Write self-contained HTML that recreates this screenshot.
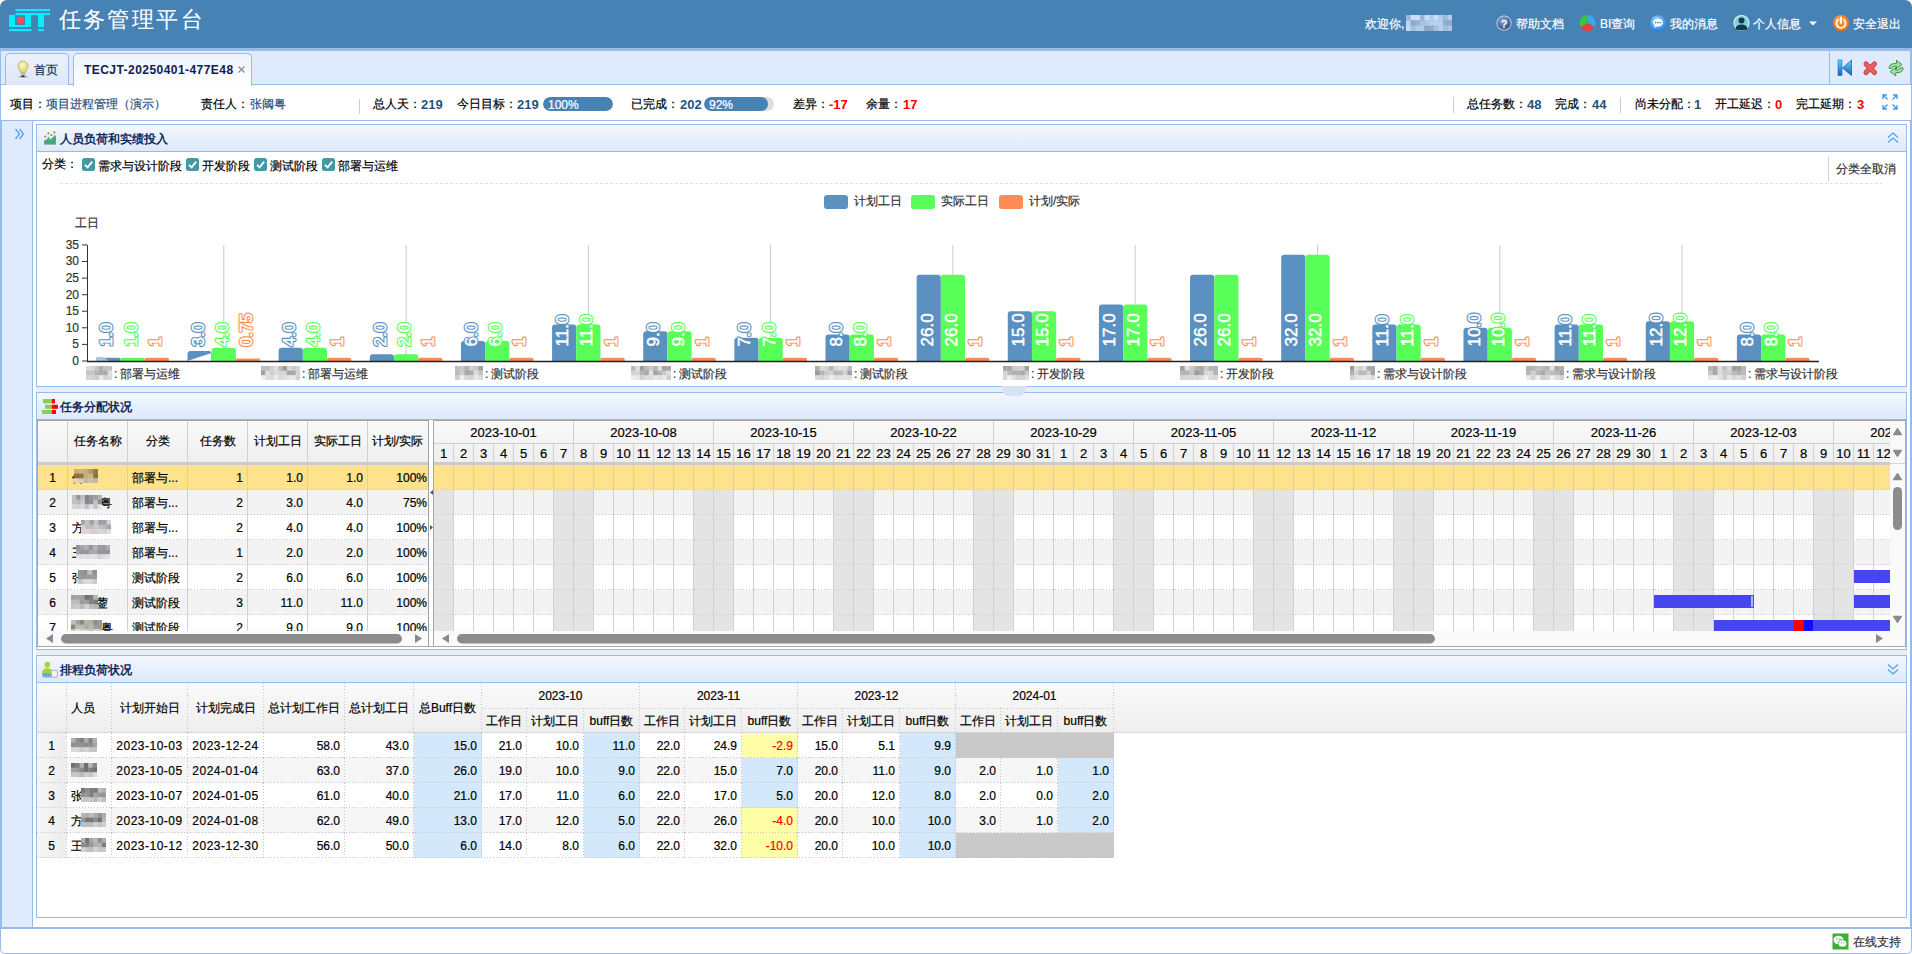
<!DOCTYPE html>
<html><head><meta charset="utf-8"><title>任务管理平台</title>
<style>
html,body{margin:0;padding:0;width:1912px;height:954px;overflow:hidden;background:#fff;font-family:"Liberation Sans", sans-serif;}
div{box-sizing:content-box;-webkit-text-stroke:0.2px}
</style></head><body>
<div style="position:absolute;left:0px;top:0px;width:1912px;height:48px;background:#4682b4;border-radius:7px 7px 0 0"></div>
<svg style="position:absolute;left:0;top:0" width="60" height="48">
<rect x="15.5" y="9" width="34.5" height="2.2" fill="#00f0ff"/>
<rect x="15.5" y="13" width="34.5" height="2.2" fill="#00f0ff"/>
<path d="M9 15H31V27H9Z M15 15V25H25V15Z" fill="#00f0ff" fill-rule="evenodd"/>
<rect x="38" y="15" width="6" height="12" fill="#00f0ff"/>
<rect x="17.2" y="17.2" width="6.2" height="6" fill="#ff5050"/>
<rect x="9" y="29" width="22.5" height="2.2" fill="#00f0ff"/>
<rect x="38" y="29" width="6" height="2.2" fill="#00f0ff"/>
</svg>
<div style="position:absolute;left:58.8px;top:5px;font-size:22px;line-height:30px;color:#fff;white-space:nowrap;letter-spacing:2.35px;-webkit-text-stroke:0.1px">任务管理平台</div>
<div style="position:absolute;left:1365px;top:14px;font-size:12px;line-height:20px;color:#fff;white-space:nowrap;">欢迎你,</div>
<svg style="position:absolute;left:1406px;top:15px" width="46" height="16"><rect x="0.00" y="0.00" width="4.90" height="5.63" fill="rgb(159,179,212)"/><rect x="4.60" y="0.00" width="4.90" height="5.63" fill="rgb(201,221,250)"/><rect x="9.20" y="0.00" width="4.90" height="5.63" fill="rgb(201,224,255)"/><rect x="13.80" y="0.00" width="4.90" height="5.63" fill="rgb(153,183,214)"/><rect x="18.40" y="0.00" width="4.90" height="5.63" fill="rgb(197,222,251)"/><rect x="23.00" y="0.00" width="4.90" height="5.63" fill="rgb(178,205,234)"/><rect x="27.60" y="0.00" width="4.90" height="5.63" fill="rgb(199,223,247)"/><rect x="32.20" y="0.00" width="4.90" height="5.63" fill="rgb(179,206,234)"/><rect x="36.80" y="0.00" width="4.90" height="5.63" fill="rgb(155,185,218)"/><rect x="41.40" y="0.00" width="4.90" height="5.63" fill="rgb(180,206,236)"/><rect x="0.00" y="5.33" width="4.90" height="5.63" fill="rgb(189,210,243)"/><rect x="4.60" y="5.33" width="4.90" height="5.63" fill="rgb(142,170,205)"/><rect x="9.20" y="5.33" width="4.90" height="5.63" fill="rgb(153,181,209)"/><rect x="13.80" y="5.33" width="4.90" height="5.63" fill="rgb(170,194,223)"/><rect x="18.40" y="5.33" width="4.90" height="5.63" fill="rgb(176,199,231)"/><rect x="23.00" y="5.33" width="4.90" height="5.63" fill="rgb(179,209,237)"/><rect x="27.60" y="5.33" width="4.90" height="5.63" fill="rgb(185,214,237)"/><rect x="32.20" y="5.33" width="4.90" height="5.63" fill="rgb(184,211,241)"/><rect x="36.80" y="5.33" width="4.90" height="5.63" fill="rgb(144,176,206)"/><rect x="41.40" y="5.33" width="4.90" height="5.63" fill="rgb(146,168,203)"/><rect x="0.00" y="10.67" width="4.90" height="5.63" fill="rgb(195,219,253)"/><rect x="4.60" y="10.67" width="4.90" height="5.63" fill="rgb(169,190,219)"/><rect x="9.20" y="10.67" width="4.90" height="5.63" fill="rgb(174,206,235)"/><rect x="13.80" y="10.67" width="4.90" height="5.63" fill="rgb(175,205,230)"/><rect x="18.40" y="10.67" width="4.90" height="5.63" fill="rgb(142,164,195)"/><rect x="23.00" y="10.67" width="4.90" height="5.63" fill="rgb(150,168,201)"/><rect x="27.60" y="10.67" width="4.90" height="5.63" fill="rgb(166,192,220)"/><rect x="32.20" y="10.67" width="4.90" height="5.63" fill="rgb(180,211,241)"/><rect x="36.80" y="10.67" width="4.90" height="5.63" fill="rgb(161,191,221)"/><rect x="41.40" y="10.67" width="4.90" height="5.63" fill="rgb(173,197,229)"/></svg>
<svg style="position:absolute;left:1490px;top:10px" width="370" height="26">
<defs>
<radialGradient id="hq" cx="0.4" cy="0.3" r="0.8"><stop offset="0" stop-color="#8fa8d8"/><stop offset="1" stop-color="#23407a"/></radialGradient>
<radialGradient id="hm" cx="0.4" cy="0.3" r="0.8"><stop offset="0" stop-color="#8fd0ff"/><stop offset="1" stop-color="#1a7ff0"/></radialGradient>
<radialGradient id="hp" cx="0.4" cy="0.3" r="0.8"><stop offset="0" stop-color="#ffa050"/><stop offset="1" stop-color="#f06a00"/></radialGradient>
</defs>
<circle cx="14" cy="13" r="7.6" fill="#fff" opacity="0.85"/>
<circle cx="14" cy="13" r="6.8" fill="url(#hq)"/>
<text x="14" y="17.5" font-size="11" font-weight="bold" fill="#fff" text-anchor="middle" font-family="Liberation Sans">?</text>
<path d="M97.5 13 L97.5 5 A8 8 0 0 0 90.572 17.0 Z" fill="#3cc43c"/>
<path d="M97.5 13 L97.5 5 A8 8 0 0 1 104.428 17.0 Z" fill="#3aa8e8"/>
<path d="M97.5 13 L104.428 17.0 A8 8 0 0 1 90.572 17.0 Z" fill="#e84040"/>
<circle cx="168" cy="13" r="7.8" fill="url(#hm)"/>
<ellipse cx="168" cy="12.6" rx="5" ry="4" fill="#fff"/>
<path d="M165 15.5 L164.2 18 L167.5 16.2Z" fill="#fff"/>
<circle cx="165.6" cy="12.6" r="0.95" fill="#3a90e0"/><circle cx="168" cy="12.6" r="0.95" fill="#3a90e0"/><circle cx="170.4" cy="12.6" r="0.95" fill="#3a90e0"/>
<circle cx="251.5" cy="13" r="8" fill="#e8f4f6"/>
<circle cx="251.5" cy="13" r="7" fill="#7ecfd8"/>
<circle cx="251.5" cy="10.5" r="3" fill="#0c3a4e"/>
<path d="M245.5 19 Q246 14.5 251.5 14.5 Q257 14.5 257.5 19 Q254.5 20.5 251.5 20.5 Q248.5 20.5 245.5 19Z" fill="#0c3a4e"/>
<path d="M319 11.5 H327 L323 15.5Z" fill="#fff"/>
<circle cx="351" cy="13" r="8" fill="url(#hp)"/>
<path d="M348.2 9.6 A4.6 4.6 0 1 0 353.8 9.6" stroke="#fff" stroke-width="1.8" fill="none" stroke-linecap="round"/>
<line x1="351" y1="7.5" x2="351" y2="13" stroke="#fff" stroke-width="1.8" stroke-linecap="round"/>
</svg>
<div style="position:absolute;left:1516px;top:14px;font-size:12px;line-height:20px;color:#fff;white-space:nowrap;">帮助文档</div>
<div style="position:absolute;left:1600px;top:14px;font-size:12px;line-height:20px;color:#fff;white-space:nowrap;">BI查询</div>
<div style="position:absolute;left:1670px;top:14px;font-size:12px;line-height:20px;color:#fff;white-space:nowrap;">我的消息</div>
<div style="position:absolute;left:1753px;top:14px;font-size:12px;line-height:20px;color:#fff;white-space:nowrap;">个人信息</div>
<div style="position:absolute;left:1853px;top:14px;font-size:12px;line-height:20px;color:#fff;white-space:nowrap;">安全退出</div>
<div style="position:absolute;left:0px;top:48px;width:1912px;height:3px;background:#99bbe8"></div>
<div style="position:absolute;left:0px;top:51px;width:1912px;height:33px;background:#dfeafc"></div>
<div style="position:absolute;left:0px;top:51px;width:1px;height:34px;background:#99bbe8"></div>
<div style="position:absolute;left:1910px;top:51px;width:2px;height:34px;background:#99bbe8"></div>
<div style="position:absolute;left:0px;top:84px;width:1912px;height:1px;background:#99bbe8"></div>
<div style="position:absolute;left:5px;top:53px;width:62px;height:31px;border:1px solid #99bbe8;border-bottom:none;border-radius:5px 5px 0 0;background:linear-gradient(#ecf2fb,#dce7f7)"></div>
<svg style="position:absolute;left:16px;top:60px" width="14" height="18">
<defs><radialGradient id="bulb" cx="0.45" cy="0.35" r="0.6"><stop offset="0" stop-color="#fbfbd0"/><stop offset="1" stop-color="#d8d860"/></radialGradient></defs>
<ellipse cx="7" cy="16.8" rx="4.5" ry="1" fill="#000" opacity="0.25"/>
<path d="M7 1.2 C3.9 1.2 2 3.4 2 6 C2 8.4 3.9 9.8 4.6 12.6 H9.4 C10.1 9.8 12 8.4 12 6 C12 3.4 10.1 1.2 7 1.2Z" fill="url(#bulb)" stroke="#c8a870" stroke-width="0.8"/>
<rect x="4.8" y="12.6" width="4.4" height="3.6" fill="#b8b8b8"/>
<rect x="5.6" y="15.6" width="2.8" height="1.4" fill="#222"/>
</svg>
<div style="position:absolute;left:34px;top:60px;font-size:12px;line-height:20px;color:#0e2d5e;white-space:nowrap;">首页</div>
<div style="position:absolute;left:73px;top:53px;width:177px;height:32px;border:1px solid #99bbe8;border-bottom:none;border-radius:5px 5px 0 0;background:linear-gradient(#edf3fc,#ffffff)"></div>
<div style="position:absolute;left:84px;top:60px;font-size:12px;line-height:20px;color:#0e2050;white-space:nowrap;font-weight:bold;-webkit-text-stroke:0;letter-spacing:0.45px">TECJT-20250401-477E48</div>
<svg style="position:absolute;left:236px;top:64px" width="12" height="12"><path d="M2.5 2.5 L8.5 8.5 M8.5 2.5 L2.5 8.5" stroke="#8a8a8a" stroke-width="1.1"/></svg>
<div style="position:absolute;left:1829px;top:51px;width:1px;height:33px;background:#99bbe8"></div>
<svg style="position:absolute;left:1836px;top:58px" width="72" height="22">
<defs>
<linearGradient id="tb1" x1="0" x2="1"><stop offset="0" stop-color="#9ae0ff"/><stop offset="1" stop-color="#1a78d8"/></linearGradient>
<linearGradient id="tb2" x1="0" y1="0" x2="0" y2="1"><stop offset="0" stop-color="#6fd0ff"/><stop offset="1" stop-color="#1060c0"/></linearGradient>
</defs>
<rect x="2" y="2" width="4" height="15.5" fill="url(#tb2)" stroke="#1a6ad0" stroke-width="0.6"/>
<path d="M15.5 2 V17.5 L6.5 10Z" fill="url(#tb2)" stroke="#0c3a9a" stroke-width="0.6"/>
<g stroke-linecap="round"><path d="M30 6 L38.5 14.5 M38.5 6 L30 14.5" stroke="#c83a3a" stroke-width="5"/><path d="M30 6 L38.5 14.5 M38.5 6 L30 14.5" stroke="#e86060" stroke-width="3.2"/></g>
<path d="M53 10.2 Q53.3 5.8 58.5 5.5 H60.5 V2.3 L66 6.5 L60.5 10.7 V8.2 H58.5 Q56.2 8.3 55.6 10.6 Z" fill="#9ee89e" stroke="#2a7a2a" stroke-width="0.8"/>
<path d="M67.2 10 Q66.9 14.4 61.7 14.7 H59.7 V17.9 L54.2 13.7 L59.7 9.5 V12 H61.7 Q64 11.9 64.6 9.6 Z" fill="#9ee89e" stroke="#2a7a2a" stroke-width="0.8"/>
</svg>
<div style="position:absolute;left:0px;top:85px;width:1px;height:36px;background:#99bbe8"></div>
<div style="position:absolute;left:1911px;top:85px;width:1px;height:36px;background:#99bbe8"></div>
<div style="position:absolute;left:0px;top:120px;width:1912px;height:1px;background:#99bbe8"></div>
<div style="position:absolute;left:0px;top:121px;width:2px;height:808px;background:#99bbe8"></div>
<div style="position:absolute;left:1910px;top:121px;width:2px;height:808px;background:#99bbe8"></div>
<div style="position:absolute;left:2px;top:121px;width:30px;height:806px;background:#dfeafc"></div>
<div style="position:absolute;left:32px;top:121px;width:1px;height:806px;background:#99bbe8"></div>
<div style="position:absolute;left:0px;top:927px;width:1912px;height:2px;background:#99bbe8"></div>
<svg style="position:absolute;left:13px;top:127px" width="14" height="14"><path d="M2.5 2 L6.5 7 L2.5 12 M6.5 2 L10.5 7 L6.5 12" stroke="#4fa3e8" stroke-width="1.3" fill="none"/></svg>
<div style="position:absolute;left:0px;top:929px;width:1912px;height:25px;box-sizing:border-box;border:1px solid #99bbe8;border-top:none;border-radius:0 0 5px 5px;background:#fff"></div>
<svg style="position:absolute;left:1832px;top:933px" width="18" height="18">
<rect x="0.5" y="0.5" width="16" height="16" fill="#3bb034"/>
<ellipse cx="6.5" cy="7" rx="5" ry="4.2" fill="#fff"/>
<ellipse cx="10.5" cy="10.5" rx="4.4" ry="3.6" fill="#fff" stroke="#3bb034" stroke-width="0.8"/>
<circle cx="4.8" cy="6" r="0.8" fill="#3bb034"/><circle cx="8" cy="6" r="0.8" fill="#3bb034"/>
<circle cx="9.2" cy="9.8" r="0.6" fill="#3bb034"/><circle cx="11.8" cy="9.8" r="0.6" fill="#3bb034"/>
</svg>
<div style="position:absolute;left:1853px;top:932px;font-size:12px;line-height:20px;color:#333;white-space:nowrap;">在线支持</div>
<div style="position:absolute;left:10px;top:94px;font-size:12px;line-height:20px;color:#000;white-space:nowrap;">项目：</div>
<div style="position:absolute;left:46px;top:94px;font-size:12px;line-height:20px;color:#2b4f7a;white-space:nowrap;">项目进程管理（演示）</div>
<div style="position:absolute;left:201px;top:94px;font-size:12px;line-height:20px;color:#000;white-space:nowrap;">责任人：</div>
<div style="position:absolute;left:250px;top:94px;font-size:12px;line-height:20px;color:#2b4f7a;white-space:nowrap;">张阈粤</div>
<div style="position:absolute;left:359px;top:99px;width:1px;height:15px;background:#cccccc"></div>
<div style="position:absolute;left:373px;top:94px;font-size:12px;line-height:20px;color:#000;white-space:nowrap;">总人天：</div>
<div style="position:absolute;left:421px;top:95px;font-size:13px;line-height:20px;color:#23527c;white-space:nowrap;font-weight:bold;-webkit-text-stroke:0;">219</div>
<div style="position:absolute;left:457px;top:94px;font-size:12px;line-height:20px;color:#000;white-space:nowrap;">今日目标：</div>
<div style="position:absolute;left:517px;top:95px;font-size:13px;line-height:20px;color:#23527c;white-space:nowrap;font-weight:bold;-webkit-text-stroke:0;">219</div>
<div style="position:absolute;left:543px;top:97px;width:70px;height:14px;border-radius:7.0px;background:#dedede;overflow:hidden"><div style="position:absolute;left:0;top:0;width:70.0px;height:14px;border-radius:7.0px;background:#4682b4"></div><div style="position:absolute;left:5px;top:-2px;font-size:12px;line-height:20px;color:#fff">100%</div></div>
<div style="position:absolute;left:631px;top:94px;font-size:12px;line-height:20px;color:#000;white-space:nowrap;">已完成：</div>
<div style="position:absolute;left:680px;top:95px;font-size:13px;line-height:20px;color:#23527c;white-space:nowrap;font-weight:bold;-webkit-text-stroke:0;">202</div>
<div style="position:absolute;left:704px;top:97px;width:70px;height:14px;border-radius:7.0px;background:#dedede;overflow:hidden"><div style="position:absolute;left:0;top:0;width:64.4px;height:14px;border-radius:7.0px;background:#4682b4"></div><div style="position:absolute;left:5px;top:-2px;font-size:12px;line-height:20px;color:#fff">92%</div></div>
<div style="position:absolute;left:793px;top:94px;font-size:12px;line-height:20px;color:#000;white-space:nowrap;">差异：</div>
<div style="position:absolute;left:829px;top:95px;font-size:13px;line-height:20px;color:#ff0000;white-space:nowrap;font-weight:bold;-webkit-text-stroke:0;">-17</div>
<div style="position:absolute;left:866px;top:94px;font-size:12px;line-height:20px;color:#000;white-space:nowrap;">余量：</div>
<div style="position:absolute;left:903px;top:95px;font-size:13px;line-height:20px;color:#ff0000;white-space:nowrap;font-weight:bold;-webkit-text-stroke:0;">17</div>
<div style="position:absolute;left:1453px;top:97px;width:1px;height:16px;background:#cccccc"></div>
<div style="position:absolute;left:1467px;top:94px;font-size:12px;line-height:20px;color:#000;white-space:nowrap;">总任务数：</div>
<div style="position:absolute;left:1527px;top:95px;font-size:13px;line-height:20px;color:#23527c;white-space:nowrap;font-weight:bold;-webkit-text-stroke:0;">48</div>
<div style="position:absolute;left:1555px;top:94px;font-size:12px;line-height:20px;color:#000;white-space:nowrap;">完成：</div>
<div style="position:absolute;left:1592px;top:95px;font-size:13px;line-height:20px;color:#23527c;white-space:nowrap;font-weight:bold;-webkit-text-stroke:0;">44</div>
<div style="position:absolute;left:1620px;top:97px;width:1px;height:16px;background:#cccccc"></div>
<div style="position:absolute;left:1635px;top:94px;font-size:12px;line-height:20px;color:#000;white-space:nowrap;">尚未分配：</div>
<div style="position:absolute;left:1694px;top:95px;font-size:13px;line-height:20px;color:#23527c;white-space:nowrap;font-weight:bold;-webkit-text-stroke:0;">1</div>
<div style="position:absolute;left:1715px;top:94px;font-size:12px;line-height:20px;color:#000;white-space:nowrap;">开工延迟：</div>
<div style="position:absolute;left:1775px;top:95px;font-size:13px;line-height:20px;color:#ff0000;white-space:nowrap;font-weight:bold;-webkit-text-stroke:0;">0</div>
<div style="position:absolute;left:1796px;top:94px;font-size:12px;line-height:20px;color:#000;white-space:nowrap;">完工延期：</div>
<div style="position:absolute;left:1857px;top:95px;font-size:13px;line-height:20px;color:#ff0000;white-space:nowrap;font-weight:bold;-webkit-text-stroke:0;">3</div>
<svg style="position:absolute;left:1880px;top:92px" width="20" height="20">
<g stroke="#3a9ae8" stroke-width="1.3" fill="none">
<path d="M3 7 V3 H7 M3 3 L7.5 7.5"/><path d="M13 3 H17 V7 M17 3 L12.5 7.5"/>
<path d="M3 13 V17 H7 M3 17 L7.5 12.5"/><path d="M13 17 H17 V13 M17 17 L12.5 12.5"/>
</g></svg>
<div style="position:absolute;left:36px;top:387px;width:1871px;height:5px;background:#e8eef8"></div>
<div style="position:absolute;left:36px;top:650px;width:1871px;height:5px;background:#e8eef8"></div>
<div style="position:absolute;left:36px;top:124px;width:1871px;height:263px;box-sizing:border-box;border:1px solid #99bbe8;background:#fff"></div>
<div style="position:absolute;left:37px;top:125px;width:1869px;height:26px;background:linear-gradient(#f3f7fe,#dde9fb)"></div>
<div style="position:absolute;left:37px;top:151px;width:1869px;height:1px;background:#99bbe8"></div>
<svg style="position:absolute;left:42px;top:130px" width="16" height="16">
<path d="M2.2 14.6 V11 L5.5 9 L8.5 9.5 L11.6 7 L13.8 6.5 V14.6Z" fill="#7a8a82"/>
<g fill="#30b878">
<rect x="2.3" y="9.8" width="1.9" height="4.8" rx="1.1"/><rect x="5.5" y="7" width="1.9" height="7.6" rx="1.1"/>
<rect x="8.5" y="8.4" width="1.9" height="6.2" rx="1.05"/><rect x="11.7" y="5.2" width="1.9" height="9.4" rx="1.1"/>
</g>
<g fill="#b88a40"><circle cx="3.2" cy="6.5" r="1.1"/><circle cx="6.4" cy="3.4" r="1.1"/><circle cx="9.4" cy="5" r="1.1"/><circle cx="12.4" cy="2.4" r="1.1"/></g>
</svg>
<div style="position:absolute;left:60px;top:129px;font-size:12px;line-height:20px;color:#0e2a5c;white-space:nowrap;font-weight:bold;-webkit-text-stroke:0;">人员负荷和实绩投入</div>
<svg style="position:absolute;left:1886px;top:131px" width="14" height="14"><path d="M2 6.5 L7 2 L12 6.5 M2 11.5 L7 7 L12 11.5" stroke="#4fa3e8" stroke-width="1.3" fill="none"/></svg>
<div style="position:absolute;left:36px;top:392px;width:1871px;height:258px;box-sizing:border-box;border:1px solid #99bbe8;background:#fff"></div>
<div style="position:absolute;left:37px;top:393px;width:1869px;height:26px;background:linear-gradient(#f3f7fe,#dde9fb)"></div>
<div style="position:absolute;left:37px;top:419px;width:1869px;height:1px;background:#99bbe8"></div>
<svg style="position:absolute;left:41px;top:398px" width="18" height="18">
<rect x="2" y="1" width="8.8" height="4.4" fill="#88d050"/><rect x="10.8" y="1" width="3.2" height="4.4" fill="#f00"/>
<rect x="4" y="6.8" width="6.8" height="4" fill="#88d050"/><rect x="10.8" y="6.8" width="6.2" height="4" fill="#f00"/>
<rect x="1" y="12" width="9.8" height="4" fill="#88d050"/><rect x="10.8" y="12" width="4.2" height="4" fill="#f00"/>
</svg>
<div style="position:absolute;left:60px;top:397px;font-size:12px;line-height:20px;color:#0e2a5c;white-space:nowrap;font-weight:bold;-webkit-text-stroke:0;">任务分配状况</div>
<div style="position:absolute;left:36px;top:655px;width:1871px;height:263px;box-sizing:border-box;border:1px solid #99bbe8;background:#fff"></div>
<div style="position:absolute;left:37px;top:656px;width:1869px;height:26px;background:linear-gradient(#f3f7fe,#dde9fb)"></div>
<div style="position:absolute;left:37px;top:682px;width:1869px;height:1px;background:#99bbe8"></div>
<svg style="position:absolute;left:42px;top:661px" width="18" height="18">
<rect x="0.6" y="9.4" width="14.8" height="6.8" rx="1.2" fill="#f4f4f4" stroke="#a8a8a8" stroke-width="0.9"/>
<circle cx="5.3" cy="3.6" r="2.9" fill="#a4d43a"/>
<path d="M0.8 12.2 Q0.8 7 5.3 7 Q9.8 7 9.8 12.2Z" fill="#a4d43a"/>
<rect x="1.2" y="12.2" width="8.4" height="3.4" fill="#3f97e0"/>
<path d="M2 15.6 L4 12.2 M4.5 15.6 L6.5 12.2 M7 15.6 L9 12.2" stroke="#9fd0f5" stroke-width="0.7"/>
</svg>
<div style="position:absolute;left:60px;top:660px;font-size:12px;line-height:20px;color:#0e2a5c;white-space:nowrap;font-weight:bold;-webkit-text-stroke:0;">排程负荷状况</div>
<svg style="position:absolute;left:1886px;top:662px" width="14" height="14"><path d="M2 2.5 L7 7 L12 2.5 M2 7.5 L7 12 L12 7.5" stroke="#4fa3e8" stroke-width="1.3" fill="none"/></svg>
<svg style="position:absolute;left:0;top:380px" width="1100" height="20"><path d="M1001.5 6 H1026.5 L1024.5 12.5 Q1022 16.3 1018.5 16.3 H1009.5 Q1006 16.3 1003.5 12.5 Z" fill="#d6e3f4"/></svg>
<div style="position:absolute;left:42px;top:154px;font-size:12px;line-height:20px;color:#000;white-space:nowrap;">分类：</div>
<svg style="position:absolute;left:82px;top:158px" width="13" height="13"><rect x="0" y="0" width="13" height="13" rx="2.5" fill="#4798a6"/><path d="M3 6.8 L5.6 9.4 L10.2 3.6" stroke="#fff" stroke-width="1.7" fill="none"/></svg>
<div style="position:absolute;left:98px;top:156px;font-size:12px;line-height:20px;color:#000;white-space:nowrap;">需求与设计阶段</div>
<svg style="position:absolute;left:186px;top:158px" width="13" height="13"><rect x="0" y="0" width="13" height="13" rx="2.5" fill="#4798a6"/><path d="M3 6.8 L5.6 9.4 L10.2 3.6" stroke="#fff" stroke-width="1.7" fill="none"/></svg>
<div style="position:absolute;left:202px;top:156px;font-size:12px;line-height:20px;color:#000;white-space:nowrap;">开发阶段</div>
<svg style="position:absolute;left:254px;top:158px" width="13" height="13"><rect x="0" y="0" width="13" height="13" rx="2.5" fill="#4798a6"/><path d="M3 6.8 L5.6 9.4 L10.2 3.6" stroke="#fff" stroke-width="1.7" fill="none"/></svg>
<div style="position:absolute;left:270px;top:156px;font-size:12px;line-height:20px;color:#000;white-space:nowrap;">测试阶段</div>
<svg style="position:absolute;left:322px;top:158px" width="13" height="13"><rect x="0" y="0" width="13" height="13" rx="2.5" fill="#4798a6"/><path d="M3 6.8 L5.6 9.4 L10.2 3.6" stroke="#fff" stroke-width="1.7" fill="none"/></svg>
<div style="position:absolute;left:338px;top:156px;font-size:12px;line-height:20px;color:#000;white-space:nowrap;">部署与运维</div>
<div style="position:absolute;left:1828px;top:157px;width:1px;height:24px;background:#cfcfcf"></div>
<div style="position:absolute;left:1836px;top:159px;font-size:12px;line-height:20px;color:#333;white-space:nowrap;">分类全取消</div>
<div style="position:absolute;left:60px;top:183px;width:1822px;height:1px;background:repeating-linear-gradient(90deg,#d3e2f5 0 3px,transparent 3px 5px)"></div>
<div style="position:absolute;left:823.6px;top:195px;width:24px;height:14px;background:#5b91c1;border-radius:3px"></div>
<div style="position:absolute;left:853.6px;top:191px;font-size:12px;line-height:20px;color:#333;white-space:nowrap;">计划工日</div>
<div style="position:absolute;left:911.4px;top:195px;width:24px;height:14px;background:#58ff58;border-radius:3px"></div>
<div style="position:absolute;left:941.4px;top:191px;font-size:12px;line-height:20px;color:#333;white-space:nowrap;">实际工日</div>
<div style="position:absolute;left:999px;top:195px;width:24px;height:14px;background:#ff8c55;border-radius:3px"></div>
<div style="position:absolute;left:1029px;top:191px;font-size:12px;line-height:20px;color:#333;white-space:nowrap;">计划/实际</div>
<div style="position:absolute;left:75px;top:213px;font-size:12px;line-height:20px;color:#333;white-space:nowrap;">工日</div>
<svg style="position:absolute;left:0;top:0" width="1912" height="400">
<line x1="82" y1="361.0" x2="87" y2="361.0" stroke="#333" stroke-width="1"/>
<line x1="82" y1="344.4" x2="87" y2="344.4" stroke="#333" stroke-width="1"/>
<line x1="82" y1="327.8" x2="87" y2="327.8" stroke="#333" stroke-width="1"/>
<line x1="82" y1="311.2" x2="87" y2="311.2" stroke="#333" stroke-width="1"/>
<line x1="82" y1="294.7" x2="87" y2="294.7" stroke="#333" stroke-width="1"/>
<line x1="82" y1="278.1" x2="87" y2="278.1" stroke="#333" stroke-width="1"/>
<line x1="82" y1="261.5" x2="87" y2="261.5" stroke="#333" stroke-width="1"/>
<line x1="82" y1="244.9" x2="87" y2="244.9" stroke="#333" stroke-width="1"/>
<line x1="87.5" y1="245.0" x2="87.5" y2="361.0" stroke="#333" stroke-width="1"/>
<line x1="223.8" y1="245.0" x2="223.8" y2="361.0" stroke="#cccccc" stroke-width="1"/>
<line x1="406.1" y1="245.0" x2="406.1" y2="361.0" stroke="#cccccc" stroke-width="1"/>
<line x1="588.4" y1="245.0" x2="588.4" y2="361.0" stroke="#cccccc" stroke-width="1"/>
<line x1="770.6" y1="245.0" x2="770.6" y2="361.0" stroke="#cccccc" stroke-width="1"/>
<line x1="952.9" y1="245.0" x2="952.9" y2="361.0" stroke="#cccccc" stroke-width="1"/>
<line x1="1135.2" y1="245.0" x2="1135.2" y2="361.0" stroke="#cccccc" stroke-width="1"/>
<line x1="1317.5" y1="245.0" x2="1317.5" y2="361.0" stroke="#cccccc" stroke-width="1"/>
<line x1="1499.8" y1="245.0" x2="1499.8" y2="361.0" stroke="#cccccc" stroke-width="1"/>
<line x1="1682.0" y1="245.0" x2="1682.0" y2="361.0" stroke="#cccccc" stroke-width="1"/>
<path d="M96.37 361.0 V359.34 Q96.37 357.68 98.03 357.68 H118.91 Q120.57 357.68 120.57 359.34 V361.0Z" fill="#5b91c1"/>
<path d="M120.57 361.0 V359.34 Q120.57 357.68 122.23 357.68 H143.11 Q144.77 357.68 144.77 359.34 V361.0Z" fill="#58ff58"/>
<path d="M144.77 361.0 V359.34 Q144.77 357.68 146.43 357.68 H167.31 Q168.97 357.68 168.97 359.34 V361.0Z" fill="#ff8c55"/>
<path d="M187.51 361.0 V354.05 Q187.51 351.05 190.51 351.05 H208.71 Q211.71 351.05 211.71 354.05 V361.0Z" fill="#5b91c1"/>
<path d="M211.71 361.0 V350.73 Q211.71 347.73 214.71 347.73 H232.91 Q235.91 347.73 235.91 350.73 V361.0Z" fill="#58ff58"/>
<path d="M235.91 361.0 V359.76 Q235.91 358.51 237.15 358.51 H258.87 Q260.11 358.51 260.11 359.76 V361.0Z" fill="#ff8c55"/>
<path d="M278.65 361.0 V350.73 Q278.65 347.73 281.65 347.73 H299.85 Q302.85 347.73 302.85 350.73 V361.0Z" fill="#5b91c1"/>
<path d="M302.85 361.0 V350.73 Q302.85 347.73 305.85 347.73 H324.05 Q327.05 347.73 327.05 350.73 V361.0Z" fill="#58ff58"/>
<path d="M327.05 361.0 V359.34 Q327.05 357.68 328.71 357.68 H349.59 Q351.25 357.68 351.25 359.34 V361.0Z" fill="#ff8c55"/>
<path d="M369.79 361.0 V357.37 Q369.79 354.37 372.79 354.37 H390.99 Q393.99 354.37 393.99 357.37 V361.0Z" fill="#5b91c1"/>
<path d="M393.99 361.0 V357.37 Q393.99 354.37 396.99 354.37 H415.19 Q418.19 354.37 418.19 357.37 V361.0Z" fill="#58ff58"/>
<path d="M418.19 361.0 V359.34 Q418.19 357.68 419.85 357.68 H440.73 Q442.39 357.68 442.39 359.34 V361.0Z" fill="#ff8c55"/>
<path d="M460.93 361.0 V344.10 Q460.93 341.10 463.93 341.10 H482.13 Q485.13 341.10 485.13 344.10 V361.0Z" fill="#5b91c1"/>
<path d="M485.13 361.0 V344.10 Q485.13 341.10 488.13 341.10 H506.33 Q509.33 341.10 509.33 344.10 V361.0Z" fill="#58ff58"/>
<path d="M509.33 361.0 V359.34 Q509.33 357.68 510.99 357.68 H531.87 Q533.53 357.68 533.53 359.34 V361.0Z" fill="#ff8c55"/>
<path d="M552.07 361.0 V327.51 Q552.07 324.51 555.07 324.51 H573.27 Q576.27 324.51 576.27 327.51 V361.0Z" fill="#5b91c1"/>
<path d="M576.27 361.0 V327.51 Q576.27 324.51 579.27 324.51 H597.47 Q600.47 324.51 600.47 327.51 V361.0Z" fill="#58ff58"/>
<path d="M600.47 361.0 V359.34 Q600.47 357.68 602.13 357.68 H623.01 Q624.67 357.68 624.67 359.34 V361.0Z" fill="#ff8c55"/>
<path d="M643.21 361.0 V334.15 Q643.21 331.15 646.21 331.15 H664.41 Q667.41 331.15 667.41 334.15 V361.0Z" fill="#5b91c1"/>
<path d="M667.41 361.0 V334.15 Q667.41 331.15 670.41 331.15 H688.61 Q691.61 331.15 691.61 334.15 V361.0Z" fill="#58ff58"/>
<path d="M691.61 361.0 V359.34 Q691.61 357.68 693.27 357.68 H714.15 Q715.81 357.68 715.81 359.34 V361.0Z" fill="#ff8c55"/>
<path d="M734.35 361.0 V340.78 Q734.35 337.78 737.35 337.78 H755.55 Q758.55 337.78 758.55 340.78 V361.0Z" fill="#5b91c1"/>
<path d="M758.55 361.0 V340.78 Q758.55 337.78 761.55 337.78 H779.75 Q782.75 337.78 782.75 340.78 V361.0Z" fill="#58ff58"/>
<path d="M782.75 361.0 V359.34 Q782.75 357.68 784.41 357.68 H805.29 Q806.95 357.68 806.95 359.34 V361.0Z" fill="#ff8c55"/>
<path d="M825.49 361.0 V337.46 Q825.49 334.46 828.49 334.46 H846.69 Q849.69 334.46 849.69 337.46 V361.0Z" fill="#5b91c1"/>
<path d="M849.69 361.0 V337.46 Q849.69 334.46 852.69 334.46 H870.89 Q873.89 334.46 873.89 337.46 V361.0Z" fill="#58ff58"/>
<path d="M873.89 361.0 V359.34 Q873.89 357.68 875.55 357.68 H896.43 Q898.09 357.68 898.09 359.34 V361.0Z" fill="#ff8c55"/>
<path d="M916.63 361.0 V277.76 Q916.63 274.76 919.63 274.76 H937.83 Q940.83 274.76 940.83 277.76 V361.0Z" fill="#5b91c1"/>
<path d="M940.83 361.0 V277.76 Q940.83 274.76 943.83 274.76 H962.03 Q965.03 274.76 965.03 277.76 V361.0Z" fill="#58ff58"/>
<path d="M965.03 361.0 V359.34 Q965.03 357.68 966.69 357.68 H987.57 Q989.23 357.68 989.23 359.34 V361.0Z" fill="#ff8c55"/>
<path d="M1007.77 361.0 V314.25 Q1007.77 311.25 1010.77 311.25 H1028.97 Q1031.97 311.25 1031.97 314.25 V361.0Z" fill="#5b91c1"/>
<path d="M1031.97 361.0 V314.25 Q1031.97 311.25 1034.97 311.25 H1053.17 Q1056.17 311.25 1056.17 314.25 V361.0Z" fill="#58ff58"/>
<path d="M1056.17 361.0 V359.34 Q1056.17 357.68 1057.83 357.68 H1078.71 Q1080.37 357.68 1080.37 359.34 V361.0Z" fill="#ff8c55"/>
<path d="M1098.91 361.0 V307.61 Q1098.91 304.61 1101.91 304.61 H1120.11 Q1123.11 304.61 1123.11 307.61 V361.0Z" fill="#5b91c1"/>
<path d="M1123.11 361.0 V307.61 Q1123.11 304.61 1126.11 304.61 H1144.31 Q1147.31 304.61 1147.31 307.61 V361.0Z" fill="#58ff58"/>
<path d="M1147.31 361.0 V359.34 Q1147.31 357.68 1148.97 357.68 H1169.85 Q1171.51 357.68 1171.51 359.34 V361.0Z" fill="#ff8c55"/>
<path d="M1190.05 361.0 V277.76 Q1190.05 274.76 1193.05 274.76 H1211.25 Q1214.25 274.76 1214.25 277.76 V361.0Z" fill="#5b91c1"/>
<path d="M1214.25 361.0 V277.76 Q1214.25 274.76 1217.25 274.76 H1235.45 Q1238.45 274.76 1238.45 277.76 V361.0Z" fill="#58ff58"/>
<path d="M1238.45 361.0 V359.34 Q1238.45 357.68 1240.11 357.68 H1260.99 Q1262.65 357.68 1262.65 359.34 V361.0Z" fill="#ff8c55"/>
<path d="M1281.19 361.0 V257.86 Q1281.19 254.86 1284.19 254.86 H1302.39 Q1305.39 254.86 1305.39 257.86 V361.0Z" fill="#5b91c1"/>
<path d="M1305.39 361.0 V257.86 Q1305.39 254.86 1308.39 254.86 H1326.59 Q1329.59 254.86 1329.59 257.86 V361.0Z" fill="#58ff58"/>
<path d="M1329.59 361.0 V359.34 Q1329.59 357.68 1331.25 357.68 H1352.13 Q1353.79 357.68 1353.79 359.34 V361.0Z" fill="#ff8c55"/>
<path d="M1372.33 361.0 V327.51 Q1372.33 324.51 1375.33 324.51 H1393.53 Q1396.53 324.51 1396.53 327.51 V361.0Z" fill="#5b91c1"/>
<path d="M1396.53 361.0 V327.51 Q1396.53 324.51 1399.53 324.51 H1417.73 Q1420.73 324.51 1420.73 327.51 V361.0Z" fill="#58ff58"/>
<path d="M1420.73 361.0 V359.34 Q1420.73 357.68 1422.39 357.68 H1443.27 Q1444.93 357.68 1444.93 359.34 V361.0Z" fill="#ff8c55"/>
<path d="M1463.47 361.0 V330.83 Q1463.47 327.83 1466.47 327.83 H1484.67 Q1487.67 327.83 1487.67 330.83 V361.0Z" fill="#5b91c1"/>
<path d="M1487.67 361.0 V330.83 Q1487.67 327.83 1490.67 327.83 H1508.87 Q1511.87 327.83 1511.87 330.83 V361.0Z" fill="#58ff58"/>
<path d="M1511.87 361.0 V359.34 Q1511.87 357.68 1513.53 357.68 H1534.41 Q1536.07 357.68 1536.07 359.34 V361.0Z" fill="#ff8c55"/>
<path d="M1554.61 361.0 V327.51 Q1554.61 324.51 1557.61 324.51 H1575.81 Q1578.81 324.51 1578.81 327.51 V361.0Z" fill="#5b91c1"/>
<path d="M1578.81 361.0 V327.51 Q1578.81 324.51 1581.81 324.51 H1600.01 Q1603.01 324.51 1603.01 327.51 V361.0Z" fill="#58ff58"/>
<path d="M1603.01 361.0 V359.34 Q1603.01 357.68 1604.67 357.68 H1625.55 Q1627.21 357.68 1627.21 359.34 V361.0Z" fill="#ff8c55"/>
<path d="M1645.75 361.0 V324.20 Q1645.75 321.20 1648.75 321.20 H1666.95 Q1669.95 321.20 1669.95 324.20 V361.0Z" fill="#5b91c1"/>
<path d="M1669.95 361.0 V324.20 Q1669.95 321.20 1672.95 321.20 H1691.15 Q1694.15 321.20 1694.15 324.20 V361.0Z" fill="#58ff58"/>
<path d="M1694.15 361.0 V359.34 Q1694.15 357.68 1695.81 357.68 H1716.69 Q1718.35 357.68 1718.35 359.34 V361.0Z" fill="#ff8c55"/>
<path d="M1736.89 361.0 V337.46 Q1736.89 334.46 1739.89 334.46 H1758.09 Q1761.09 334.46 1761.09 337.46 V361.0Z" fill="#5b91c1"/>
<path d="M1761.09 361.0 V337.46 Q1761.09 334.46 1764.09 334.46 H1782.29 Q1785.29 334.46 1785.29 337.46 V361.0Z" fill="#58ff58"/>
<path d="M1785.29 361.0 V359.34 Q1785.29 357.68 1786.95 357.68 H1807.83 Q1809.49 357.68 1809.49 359.34 V361.0Z" fill="#ff8c55"/>
<path d="M187.3 361 L211 353.2 V361Z" fill="#fff"/>
<path d="M96.4 357 H103 L109 361 H96.4Z" fill="#a9c5e2"/>
<text x="0" y="0" transform="translate(106.97,346.5) rotate(-90)" font-size="17" font-family="Liberation Sans" fill="#5b91c1" stroke="#5b91c1" stroke-width="2.8" stroke-linejoin="round" dominant-baseline="central">1.0</text><text x="0" y="0" transform="translate(106.97,346.5) rotate(-90)" font-size="17" font-family="Liberation Sans" fill="#fff" stroke="#fff" stroke-width="0.5" dominant-baseline="central">1.0</text>
<text x="0" y="0" transform="translate(131.17,346.5) rotate(-90)" font-size="17" font-family="Liberation Sans" fill="#58ff58" stroke="#58ff58" stroke-width="2.8" stroke-linejoin="round" dominant-baseline="central">1.0</text><text x="0" y="0" transform="translate(131.17,346.5) rotate(-90)" font-size="17" font-family="Liberation Sans" fill="#fff" stroke="#fff" stroke-width="0.5" dominant-baseline="central">1.0</text>
<text x="0" y="0" transform="translate(155.37,346.5) rotate(-90)" font-size="17" font-family="Liberation Sans" fill="#ff8c55" stroke="#ff8c55" stroke-width="2.8" stroke-linejoin="round" dominant-baseline="central">1</text><text x="0" y="0" transform="translate(155.37,346.5) rotate(-90)" font-size="17" font-family="Liberation Sans" fill="#fff" stroke="#fff" stroke-width="0.5" dominant-baseline="central">1</text>
<text x="0" y="0" transform="translate(198.11,346.5) rotate(-90)" font-size="17" font-family="Liberation Sans" fill="#5b91c1" stroke="#5b91c1" stroke-width="2.8" stroke-linejoin="round" dominant-baseline="central">3.0</text><text x="0" y="0" transform="translate(198.11,346.5) rotate(-90)" font-size="17" font-family="Liberation Sans" fill="#fff" stroke="#fff" stroke-width="0.5" dominant-baseline="central">3.0</text>
<text x="0" y="0" transform="translate(222.31,346.5) rotate(-90)" font-size="17" font-family="Liberation Sans" fill="#58ff58" stroke="#58ff58" stroke-width="2.8" stroke-linejoin="round" dominant-baseline="central">4.0</text><text x="0" y="0" transform="translate(222.31,346.5) rotate(-90)" font-size="17" font-family="Liberation Sans" fill="#fff" stroke="#fff" stroke-width="0.5" dominant-baseline="central">4.0</text>
<text x="0" y="0" transform="translate(246.51,346.5) rotate(-90)" font-size="17" font-family="Liberation Sans" fill="#ff8c55" stroke="#ff8c55" stroke-width="2.8" stroke-linejoin="round" dominant-baseline="central">0.75</text><text x="0" y="0" transform="translate(246.51,346.5) rotate(-90)" font-size="17" font-family="Liberation Sans" fill="#fff" stroke="#fff" stroke-width="0.5" dominant-baseline="central">0.75</text>
<text x="0" y="0" transform="translate(289.25,346.5) rotate(-90)" font-size="17" font-family="Liberation Sans" fill="#5b91c1" stroke="#5b91c1" stroke-width="2.8" stroke-linejoin="round" dominant-baseline="central">4.0</text><text x="0" y="0" transform="translate(289.25,346.5) rotate(-90)" font-size="17" font-family="Liberation Sans" fill="#fff" stroke="#fff" stroke-width="0.5" dominant-baseline="central">4.0</text>
<text x="0" y="0" transform="translate(313.45,346.5) rotate(-90)" font-size="17" font-family="Liberation Sans" fill="#58ff58" stroke="#58ff58" stroke-width="2.8" stroke-linejoin="round" dominant-baseline="central">4.0</text><text x="0" y="0" transform="translate(313.45,346.5) rotate(-90)" font-size="17" font-family="Liberation Sans" fill="#fff" stroke="#fff" stroke-width="0.5" dominant-baseline="central">4.0</text>
<text x="0" y="0" transform="translate(337.65,346.5) rotate(-90)" font-size="17" font-family="Liberation Sans" fill="#ff8c55" stroke="#ff8c55" stroke-width="2.8" stroke-linejoin="round" dominant-baseline="central">1</text><text x="0" y="0" transform="translate(337.65,346.5) rotate(-90)" font-size="17" font-family="Liberation Sans" fill="#fff" stroke="#fff" stroke-width="0.5" dominant-baseline="central">1</text>
<text x="0" y="0" transform="translate(380.39,346.5) rotate(-90)" font-size="17" font-family="Liberation Sans" fill="#5b91c1" stroke="#5b91c1" stroke-width="2.8" stroke-linejoin="round" dominant-baseline="central">2.0</text><text x="0" y="0" transform="translate(380.39,346.5) rotate(-90)" font-size="17" font-family="Liberation Sans" fill="#fff" stroke="#fff" stroke-width="0.5" dominant-baseline="central">2.0</text>
<text x="0" y="0" transform="translate(404.59,346.5) rotate(-90)" font-size="17" font-family="Liberation Sans" fill="#58ff58" stroke="#58ff58" stroke-width="2.8" stroke-linejoin="round" dominant-baseline="central">2.0</text><text x="0" y="0" transform="translate(404.59,346.5) rotate(-90)" font-size="17" font-family="Liberation Sans" fill="#fff" stroke="#fff" stroke-width="0.5" dominant-baseline="central">2.0</text>
<text x="0" y="0" transform="translate(428.79,346.5) rotate(-90)" font-size="17" font-family="Liberation Sans" fill="#ff8c55" stroke="#ff8c55" stroke-width="2.8" stroke-linejoin="round" dominant-baseline="central">1</text><text x="0" y="0" transform="translate(428.79,346.5) rotate(-90)" font-size="17" font-family="Liberation Sans" fill="#fff" stroke="#fff" stroke-width="0.5" dominant-baseline="central">1</text>
<text x="0" y="0" transform="translate(471.53,346.5) rotate(-90)" font-size="17" font-family="Liberation Sans" fill="#5b91c1" stroke="#5b91c1" stroke-width="2.8" stroke-linejoin="round" dominant-baseline="central">6.0</text><text x="0" y="0" transform="translate(471.53,346.5) rotate(-90)" font-size="17" font-family="Liberation Sans" fill="#fff" stroke="#fff" stroke-width="0.5" dominant-baseline="central">6.0</text>
<text x="0" y="0" transform="translate(495.73,346.5) rotate(-90)" font-size="17" font-family="Liberation Sans" fill="#58ff58" stroke="#58ff58" stroke-width="2.8" stroke-linejoin="round" dominant-baseline="central">6.0</text><text x="0" y="0" transform="translate(495.73,346.5) rotate(-90)" font-size="17" font-family="Liberation Sans" fill="#fff" stroke="#fff" stroke-width="0.5" dominant-baseline="central">6.0</text>
<text x="0" y="0" transform="translate(519.93,346.5) rotate(-90)" font-size="17" font-family="Liberation Sans" fill="#ff8c55" stroke="#ff8c55" stroke-width="2.8" stroke-linejoin="round" dominant-baseline="central">1</text><text x="0" y="0" transform="translate(519.93,346.5) rotate(-90)" font-size="17" font-family="Liberation Sans" fill="#fff" stroke="#fff" stroke-width="0.5" dominant-baseline="central">1</text>
<text x="0" y="0" transform="translate(562.67,346.5) rotate(-90)" font-size="17" font-family="Liberation Sans" fill="#5b91c1" stroke="#5b91c1" stroke-width="2.8" stroke-linejoin="round" dominant-baseline="central">11.0</text><text x="0" y="0" transform="translate(562.67,346.5) rotate(-90)" font-size="17" font-family="Liberation Sans" fill="#fff" stroke="#fff" stroke-width="0.5" dominant-baseline="central">11.0</text>
<text x="0" y="0" transform="translate(586.87,346.5) rotate(-90)" font-size="17" font-family="Liberation Sans" fill="#58ff58" stroke="#58ff58" stroke-width="2.8" stroke-linejoin="round" dominant-baseline="central">11.0</text><text x="0" y="0" transform="translate(586.87,346.5) rotate(-90)" font-size="17" font-family="Liberation Sans" fill="#fff" stroke="#fff" stroke-width="0.5" dominant-baseline="central">11.0</text>
<text x="0" y="0" transform="translate(611.07,346.5) rotate(-90)" font-size="17" font-family="Liberation Sans" fill="#ff8c55" stroke="#ff8c55" stroke-width="2.8" stroke-linejoin="round" dominant-baseline="central">1</text><text x="0" y="0" transform="translate(611.07,346.5) rotate(-90)" font-size="17" font-family="Liberation Sans" fill="#fff" stroke="#fff" stroke-width="0.5" dominant-baseline="central">1</text>
<text x="0" y="0" transform="translate(653.81,346.5) rotate(-90)" font-size="17" font-family="Liberation Sans" fill="#5b91c1" stroke="#5b91c1" stroke-width="2.8" stroke-linejoin="round" dominant-baseline="central">9.0</text><text x="0" y="0" transform="translate(653.81,346.5) rotate(-90)" font-size="17" font-family="Liberation Sans" fill="#fff" stroke="#fff" stroke-width="0.5" dominant-baseline="central">9.0</text>
<text x="0" y="0" transform="translate(678.01,346.5) rotate(-90)" font-size="17" font-family="Liberation Sans" fill="#58ff58" stroke="#58ff58" stroke-width="2.8" stroke-linejoin="round" dominant-baseline="central">9.0</text><text x="0" y="0" transform="translate(678.01,346.5) rotate(-90)" font-size="17" font-family="Liberation Sans" fill="#fff" stroke="#fff" stroke-width="0.5" dominant-baseline="central">9.0</text>
<text x="0" y="0" transform="translate(702.21,346.5) rotate(-90)" font-size="17" font-family="Liberation Sans" fill="#ff8c55" stroke="#ff8c55" stroke-width="2.8" stroke-linejoin="round" dominant-baseline="central">1</text><text x="0" y="0" transform="translate(702.21,346.5) rotate(-90)" font-size="17" font-family="Liberation Sans" fill="#fff" stroke="#fff" stroke-width="0.5" dominant-baseline="central">1</text>
<text x="0" y="0" transform="translate(744.95,346.5) rotate(-90)" font-size="17" font-family="Liberation Sans" fill="#5b91c1" stroke="#5b91c1" stroke-width="2.8" stroke-linejoin="round" dominant-baseline="central">7.0</text><text x="0" y="0" transform="translate(744.95,346.5) rotate(-90)" font-size="17" font-family="Liberation Sans" fill="#fff" stroke="#fff" stroke-width="0.5" dominant-baseline="central">7.0</text>
<text x="0" y="0" transform="translate(769.15,346.5) rotate(-90)" font-size="17" font-family="Liberation Sans" fill="#58ff58" stroke="#58ff58" stroke-width="2.8" stroke-linejoin="round" dominant-baseline="central">7.0</text><text x="0" y="0" transform="translate(769.15,346.5) rotate(-90)" font-size="17" font-family="Liberation Sans" fill="#fff" stroke="#fff" stroke-width="0.5" dominant-baseline="central">7.0</text>
<text x="0" y="0" transform="translate(793.35,346.5) rotate(-90)" font-size="17" font-family="Liberation Sans" fill="#ff8c55" stroke="#ff8c55" stroke-width="2.8" stroke-linejoin="round" dominant-baseline="central">1</text><text x="0" y="0" transform="translate(793.35,346.5) rotate(-90)" font-size="17" font-family="Liberation Sans" fill="#fff" stroke="#fff" stroke-width="0.5" dominant-baseline="central">1</text>
<text x="0" y="0" transform="translate(836.09,346.5) rotate(-90)" font-size="17" font-family="Liberation Sans" fill="#5b91c1" stroke="#5b91c1" stroke-width="2.8" stroke-linejoin="round" dominant-baseline="central">8.0</text><text x="0" y="0" transform="translate(836.09,346.5) rotate(-90)" font-size="17" font-family="Liberation Sans" fill="#fff" stroke="#fff" stroke-width="0.5" dominant-baseline="central">8.0</text>
<text x="0" y="0" transform="translate(860.29,346.5) rotate(-90)" font-size="17" font-family="Liberation Sans" fill="#58ff58" stroke="#58ff58" stroke-width="2.8" stroke-linejoin="round" dominant-baseline="central">8.0</text><text x="0" y="0" transform="translate(860.29,346.5) rotate(-90)" font-size="17" font-family="Liberation Sans" fill="#fff" stroke="#fff" stroke-width="0.5" dominant-baseline="central">8.0</text>
<text x="0" y="0" transform="translate(884.49,346.5) rotate(-90)" font-size="17" font-family="Liberation Sans" fill="#ff8c55" stroke="#ff8c55" stroke-width="2.8" stroke-linejoin="round" dominant-baseline="central">1</text><text x="0" y="0" transform="translate(884.49,346.5) rotate(-90)" font-size="17" font-family="Liberation Sans" fill="#fff" stroke="#fff" stroke-width="0.5" dominant-baseline="central">1</text>
<text x="0" y="0" transform="translate(927.23,346.5) rotate(-90)" font-size="17" font-family="Liberation Sans" fill="#5b91c1" stroke="#5b91c1" stroke-width="2.8" stroke-linejoin="round" dominant-baseline="central">26.0</text><text x="0" y="0" transform="translate(927.23,346.5) rotate(-90)" font-size="17" font-family="Liberation Sans" fill="#fff" stroke="#fff" stroke-width="0.5" dominant-baseline="central">26.0</text>
<text x="0" y="0" transform="translate(951.43,346.5) rotate(-90)" font-size="17" font-family="Liberation Sans" fill="#58ff58" stroke="#58ff58" stroke-width="2.8" stroke-linejoin="round" dominant-baseline="central">26.0</text><text x="0" y="0" transform="translate(951.43,346.5) rotate(-90)" font-size="17" font-family="Liberation Sans" fill="#fff" stroke="#fff" stroke-width="0.5" dominant-baseline="central">26.0</text>
<text x="0" y="0" transform="translate(975.63,346.5) rotate(-90)" font-size="17" font-family="Liberation Sans" fill="#ff8c55" stroke="#ff8c55" stroke-width="2.8" stroke-linejoin="round" dominant-baseline="central">1</text><text x="0" y="0" transform="translate(975.63,346.5) rotate(-90)" font-size="17" font-family="Liberation Sans" fill="#fff" stroke="#fff" stroke-width="0.5" dominant-baseline="central">1</text>
<text x="0" y="0" transform="translate(1018.37,346.5) rotate(-90)" font-size="17" font-family="Liberation Sans" fill="#5b91c1" stroke="#5b91c1" stroke-width="2.8" stroke-linejoin="round" dominant-baseline="central">15.0</text><text x="0" y="0" transform="translate(1018.37,346.5) rotate(-90)" font-size="17" font-family="Liberation Sans" fill="#fff" stroke="#fff" stroke-width="0.5" dominant-baseline="central">15.0</text>
<text x="0" y="0" transform="translate(1042.57,346.5) rotate(-90)" font-size="17" font-family="Liberation Sans" fill="#58ff58" stroke="#58ff58" stroke-width="2.8" stroke-linejoin="round" dominant-baseline="central">15.0</text><text x="0" y="0" transform="translate(1042.57,346.5) rotate(-90)" font-size="17" font-family="Liberation Sans" fill="#fff" stroke="#fff" stroke-width="0.5" dominant-baseline="central">15.0</text>
<text x="0" y="0" transform="translate(1066.77,346.5) rotate(-90)" font-size="17" font-family="Liberation Sans" fill="#ff8c55" stroke="#ff8c55" stroke-width="2.8" stroke-linejoin="round" dominant-baseline="central">1</text><text x="0" y="0" transform="translate(1066.77,346.5) rotate(-90)" font-size="17" font-family="Liberation Sans" fill="#fff" stroke="#fff" stroke-width="0.5" dominant-baseline="central">1</text>
<text x="0" y="0" transform="translate(1109.51,346.5) rotate(-90)" font-size="17" font-family="Liberation Sans" fill="#5b91c1" stroke="#5b91c1" stroke-width="2.8" stroke-linejoin="round" dominant-baseline="central">17.0</text><text x="0" y="0" transform="translate(1109.51,346.5) rotate(-90)" font-size="17" font-family="Liberation Sans" fill="#fff" stroke="#fff" stroke-width="0.5" dominant-baseline="central">17.0</text>
<text x="0" y="0" transform="translate(1133.71,346.5) rotate(-90)" font-size="17" font-family="Liberation Sans" fill="#58ff58" stroke="#58ff58" stroke-width="2.8" stroke-linejoin="round" dominant-baseline="central">17.0</text><text x="0" y="0" transform="translate(1133.71,346.5) rotate(-90)" font-size="17" font-family="Liberation Sans" fill="#fff" stroke="#fff" stroke-width="0.5" dominant-baseline="central">17.0</text>
<text x="0" y="0" transform="translate(1157.91,346.5) rotate(-90)" font-size="17" font-family="Liberation Sans" fill="#ff8c55" stroke="#ff8c55" stroke-width="2.8" stroke-linejoin="round" dominant-baseline="central">1</text><text x="0" y="0" transform="translate(1157.91,346.5) rotate(-90)" font-size="17" font-family="Liberation Sans" fill="#fff" stroke="#fff" stroke-width="0.5" dominant-baseline="central">1</text>
<text x="0" y="0" transform="translate(1200.65,346.5) rotate(-90)" font-size="17" font-family="Liberation Sans" fill="#5b91c1" stroke="#5b91c1" stroke-width="2.8" stroke-linejoin="round" dominant-baseline="central">26.0</text><text x="0" y="0" transform="translate(1200.65,346.5) rotate(-90)" font-size="17" font-family="Liberation Sans" fill="#fff" stroke="#fff" stroke-width="0.5" dominant-baseline="central">26.0</text>
<text x="0" y="0" transform="translate(1224.85,346.5) rotate(-90)" font-size="17" font-family="Liberation Sans" fill="#58ff58" stroke="#58ff58" stroke-width="2.8" stroke-linejoin="round" dominant-baseline="central">26.0</text><text x="0" y="0" transform="translate(1224.85,346.5) rotate(-90)" font-size="17" font-family="Liberation Sans" fill="#fff" stroke="#fff" stroke-width="0.5" dominant-baseline="central">26.0</text>
<text x="0" y="0" transform="translate(1249.05,346.5) rotate(-90)" font-size="17" font-family="Liberation Sans" fill="#ff8c55" stroke="#ff8c55" stroke-width="2.8" stroke-linejoin="round" dominant-baseline="central">1</text><text x="0" y="0" transform="translate(1249.05,346.5) rotate(-90)" font-size="17" font-family="Liberation Sans" fill="#fff" stroke="#fff" stroke-width="0.5" dominant-baseline="central">1</text>
<text x="0" y="0" transform="translate(1291.79,346.5) rotate(-90)" font-size="17" font-family="Liberation Sans" fill="#5b91c1" stroke="#5b91c1" stroke-width="2.8" stroke-linejoin="round" dominant-baseline="central">32.0</text><text x="0" y="0" transform="translate(1291.79,346.5) rotate(-90)" font-size="17" font-family="Liberation Sans" fill="#fff" stroke="#fff" stroke-width="0.5" dominant-baseline="central">32.0</text>
<text x="0" y="0" transform="translate(1315.99,346.5) rotate(-90)" font-size="17" font-family="Liberation Sans" fill="#58ff58" stroke="#58ff58" stroke-width="2.8" stroke-linejoin="round" dominant-baseline="central">32.0</text><text x="0" y="0" transform="translate(1315.99,346.5) rotate(-90)" font-size="17" font-family="Liberation Sans" fill="#fff" stroke="#fff" stroke-width="0.5" dominant-baseline="central">32.0</text>
<text x="0" y="0" transform="translate(1340.19,346.5) rotate(-90)" font-size="17" font-family="Liberation Sans" fill="#ff8c55" stroke="#ff8c55" stroke-width="2.8" stroke-linejoin="round" dominant-baseline="central">1</text><text x="0" y="0" transform="translate(1340.19,346.5) rotate(-90)" font-size="17" font-family="Liberation Sans" fill="#fff" stroke="#fff" stroke-width="0.5" dominant-baseline="central">1</text>
<text x="0" y="0" transform="translate(1382.93,346.5) rotate(-90)" font-size="17" font-family="Liberation Sans" fill="#5b91c1" stroke="#5b91c1" stroke-width="2.8" stroke-linejoin="round" dominant-baseline="central">11.0</text><text x="0" y="0" transform="translate(1382.93,346.5) rotate(-90)" font-size="17" font-family="Liberation Sans" fill="#fff" stroke="#fff" stroke-width="0.5" dominant-baseline="central">11.0</text>
<text x="0" y="0" transform="translate(1407.13,346.5) rotate(-90)" font-size="17" font-family="Liberation Sans" fill="#58ff58" stroke="#58ff58" stroke-width="2.8" stroke-linejoin="round" dominant-baseline="central">11.0</text><text x="0" y="0" transform="translate(1407.13,346.5) rotate(-90)" font-size="17" font-family="Liberation Sans" fill="#fff" stroke="#fff" stroke-width="0.5" dominant-baseline="central">11.0</text>
<text x="0" y="0" transform="translate(1431.33,346.5) rotate(-90)" font-size="17" font-family="Liberation Sans" fill="#ff8c55" stroke="#ff8c55" stroke-width="2.8" stroke-linejoin="round" dominant-baseline="central">1</text><text x="0" y="0" transform="translate(1431.33,346.5) rotate(-90)" font-size="17" font-family="Liberation Sans" fill="#fff" stroke="#fff" stroke-width="0.5" dominant-baseline="central">1</text>
<text x="0" y="0" transform="translate(1474.07,346.5) rotate(-90)" font-size="17" font-family="Liberation Sans" fill="#5b91c1" stroke="#5b91c1" stroke-width="2.8" stroke-linejoin="round" dominant-baseline="central">10.0</text><text x="0" y="0" transform="translate(1474.07,346.5) rotate(-90)" font-size="17" font-family="Liberation Sans" fill="#fff" stroke="#fff" stroke-width="0.5" dominant-baseline="central">10.0</text>
<text x="0" y="0" transform="translate(1498.27,346.5) rotate(-90)" font-size="17" font-family="Liberation Sans" fill="#58ff58" stroke="#58ff58" stroke-width="2.8" stroke-linejoin="round" dominant-baseline="central">10.0</text><text x="0" y="0" transform="translate(1498.27,346.5) rotate(-90)" font-size="17" font-family="Liberation Sans" fill="#fff" stroke="#fff" stroke-width="0.5" dominant-baseline="central">10.0</text>
<text x="0" y="0" transform="translate(1522.47,346.5) rotate(-90)" font-size="17" font-family="Liberation Sans" fill="#ff8c55" stroke="#ff8c55" stroke-width="2.8" stroke-linejoin="round" dominant-baseline="central">1</text><text x="0" y="0" transform="translate(1522.47,346.5) rotate(-90)" font-size="17" font-family="Liberation Sans" fill="#fff" stroke="#fff" stroke-width="0.5" dominant-baseline="central">1</text>
<text x="0" y="0" transform="translate(1565.21,346.5) rotate(-90)" font-size="17" font-family="Liberation Sans" fill="#5b91c1" stroke="#5b91c1" stroke-width="2.8" stroke-linejoin="round" dominant-baseline="central">11.0</text><text x="0" y="0" transform="translate(1565.21,346.5) rotate(-90)" font-size="17" font-family="Liberation Sans" fill="#fff" stroke="#fff" stroke-width="0.5" dominant-baseline="central">11.0</text>
<text x="0" y="0" transform="translate(1589.41,346.5) rotate(-90)" font-size="17" font-family="Liberation Sans" fill="#58ff58" stroke="#58ff58" stroke-width="2.8" stroke-linejoin="round" dominant-baseline="central">11.0</text><text x="0" y="0" transform="translate(1589.41,346.5) rotate(-90)" font-size="17" font-family="Liberation Sans" fill="#fff" stroke="#fff" stroke-width="0.5" dominant-baseline="central">11.0</text>
<text x="0" y="0" transform="translate(1613.61,346.5) rotate(-90)" font-size="17" font-family="Liberation Sans" fill="#ff8c55" stroke="#ff8c55" stroke-width="2.8" stroke-linejoin="round" dominant-baseline="central">1</text><text x="0" y="0" transform="translate(1613.61,346.5) rotate(-90)" font-size="17" font-family="Liberation Sans" fill="#fff" stroke="#fff" stroke-width="0.5" dominant-baseline="central">1</text>
<text x="0" y="0" transform="translate(1656.35,346.5) rotate(-90)" font-size="17" font-family="Liberation Sans" fill="#5b91c1" stroke="#5b91c1" stroke-width="2.8" stroke-linejoin="round" dominant-baseline="central">12.0</text><text x="0" y="0" transform="translate(1656.35,346.5) rotate(-90)" font-size="17" font-family="Liberation Sans" fill="#fff" stroke="#fff" stroke-width="0.5" dominant-baseline="central">12.0</text>
<text x="0" y="0" transform="translate(1680.55,346.5) rotate(-90)" font-size="17" font-family="Liberation Sans" fill="#58ff58" stroke="#58ff58" stroke-width="2.8" stroke-linejoin="round" dominant-baseline="central">12.0</text><text x="0" y="0" transform="translate(1680.55,346.5) rotate(-90)" font-size="17" font-family="Liberation Sans" fill="#fff" stroke="#fff" stroke-width="0.5" dominant-baseline="central">12.0</text>
<text x="0" y="0" transform="translate(1704.75,346.5) rotate(-90)" font-size="17" font-family="Liberation Sans" fill="#ff8c55" stroke="#ff8c55" stroke-width="2.8" stroke-linejoin="round" dominant-baseline="central">1</text><text x="0" y="0" transform="translate(1704.75,346.5) rotate(-90)" font-size="17" font-family="Liberation Sans" fill="#fff" stroke="#fff" stroke-width="0.5" dominant-baseline="central">1</text>
<text x="0" y="0" transform="translate(1747.49,346.5) rotate(-90)" font-size="17" font-family="Liberation Sans" fill="#5b91c1" stroke="#5b91c1" stroke-width="2.8" stroke-linejoin="round" dominant-baseline="central">8.0</text><text x="0" y="0" transform="translate(1747.49,346.5) rotate(-90)" font-size="17" font-family="Liberation Sans" fill="#fff" stroke="#fff" stroke-width="0.5" dominant-baseline="central">8.0</text>
<text x="0" y="0" transform="translate(1771.69,346.5) rotate(-90)" font-size="17" font-family="Liberation Sans" fill="#58ff58" stroke="#58ff58" stroke-width="2.8" stroke-linejoin="round" dominant-baseline="central">8.0</text><text x="0" y="0" transform="translate(1771.69,346.5) rotate(-90)" font-size="17" font-family="Liberation Sans" fill="#fff" stroke="#fff" stroke-width="0.5" dominant-baseline="central">8.0</text>
<text x="0" y="0" transform="translate(1795.89,346.5) rotate(-90)" font-size="17" font-family="Liberation Sans" fill="#ff8c55" stroke="#ff8c55" stroke-width="2.8" stroke-linejoin="round" dominant-baseline="central">1</text><text x="0" y="0" transform="translate(1795.89,346.5) rotate(-90)" font-size="17" font-family="Liberation Sans" fill="#fff" stroke="#fff" stroke-width="0.5" dominant-baseline="central">1</text>
<line x1="87" y1="361.5" x2="1819" y2="361.5" stroke="#222" stroke-width="1.4"/>
</svg>
<div style="position:absolute;right:1833px;top:351.0px;font-size:12px;line-height:20px;color:#333;white-space:nowrap;">0</div>
<div style="position:absolute;right:1833px;top:334.415px;font-size:12px;line-height:20px;color:#333;white-space:nowrap;">5</div>
<div style="position:absolute;right:1833px;top:317.83px;font-size:12px;line-height:20px;color:#333;white-space:nowrap;">10</div>
<div style="position:absolute;right:1833px;top:301.245px;font-size:12px;line-height:20px;color:#333;white-space:nowrap;">15</div>
<div style="position:absolute;right:1833px;top:284.65999999999997px;font-size:12px;line-height:20px;color:#333;white-space:nowrap;">20</div>
<div style="position:absolute;right:1833px;top:268.075px;font-size:12px;line-height:20px;color:#333;white-space:nowrap;">25</div>
<div style="position:absolute;right:1833px;top:251.49px;font-size:12px;line-height:20px;color:#333;white-space:nowrap;">30</div>
<div style="position:absolute;right:1833px;top:234.905px;font-size:12px;line-height:20px;color:#333;white-space:nowrap;">35</div>
<svg style="position:absolute;left:86px;top:366px" width="26" height="14"><rect x="0.00" y="0.00" width="4.63" height="4.97" fill="rgb(218,219,217)"/><rect x="4.33" y="0.00" width="4.63" height="4.97" fill="rgb(216,212,219)"/><rect x="8.67" y="0.00" width="4.63" height="4.97" fill="rgb(194,199,192)"/><rect x="13.00" y="0.00" width="4.63" height="4.97" fill="rgb(175,171,175)"/><rect x="17.33" y="0.00" width="4.63" height="4.97" fill="rgb(194,194,192)"/><rect x="21.67" y="0.00" width="4.63" height="4.97" fill="rgb(199,194,194)"/><rect x="0.00" y="4.67" width="4.63" height="4.97" fill="rgb(199,193,196)"/><rect x="4.33" y="4.67" width="4.63" height="4.97" fill="rgb(198,200,195)"/><rect x="8.67" y="4.67" width="4.63" height="4.97" fill="rgb(183,180,183)"/><rect x="13.00" y="4.67" width="4.63" height="4.97" fill="rgb(171,170,175)"/><rect x="17.33" y="4.67" width="4.63" height="4.97" fill="rgb(172,167,174)"/><rect x="21.67" y="4.67" width="4.63" height="4.97" fill="rgb(220,222,222)"/><rect x="0.00" y="9.33" width="4.63" height="4.97" fill="rgb(214,215,213)"/><rect x="4.33" y="9.33" width="4.63" height="4.97" fill="rgb(211,212,209)"/><rect x="8.67" y="9.33" width="4.63" height="4.97" fill="rgb(205,203,206)"/><rect x="13.00" y="9.33" width="4.63" height="4.97" fill="rgb(237,234,234)"/><rect x="17.33" y="9.33" width="4.63" height="4.97" fill="rgb(210,211,212)"/><rect x="21.67" y="9.33" width="4.63" height="4.97" fill="rgb(221,218,222)"/></svg>
<div style="position:absolute;left:114px;top:364px;font-size:12px;line-height:20px;color:#333;white-space:nowrap;">:</div>
<div style="position:absolute;left:119.5px;top:364px;font-size:12px;line-height:20px;color:#333;white-space:nowrap;">部署与运维</div>
<svg style="position:absolute;left:261px;top:366px" width="39" height="14"><rect x="0.00" y="0.00" width="4.63" height="4.97" fill="rgb(190,190,184)"/><rect x="4.33" y="0.00" width="4.63" height="4.97" fill="rgb(185,190,186)"/><rect x="8.67" y="0.00" width="4.63" height="4.97" fill="rgb(209,208,209)"/><rect x="13.00" y="0.00" width="4.63" height="4.97" fill="rgb(223,223,224)"/><rect x="17.33" y="0.00" width="4.63" height="4.97" fill="rgb(192,186,187)"/><rect x="21.67" y="0.00" width="4.63" height="4.97" fill="rgb(162,158,154)"/><rect x="26.00" y="0.00" width="4.63" height="4.97" fill="rgb(214,217,216)"/><rect x="30.33" y="0.00" width="4.63" height="4.97" fill="rgb(205,201,198)"/><rect x="34.67" y="0.00" width="4.63" height="4.97" fill="rgb(209,214,207)"/><rect x="0.00" y="4.67" width="4.63" height="4.97" fill="rgb(159,159,160)"/><rect x="4.33" y="4.67" width="4.63" height="4.97" fill="rgb(228,221,227)"/><rect x="8.67" y="4.67" width="4.63" height="4.97" fill="rgb(207,209,205)"/><rect x="13.00" y="4.67" width="4.63" height="4.97" fill="rgb(221,215,218)"/><rect x="17.33" y="4.67" width="4.63" height="4.97" fill="rgb(215,209,216)"/><rect x="21.67" y="4.67" width="4.63" height="4.97" fill="rgb(207,213,215)"/><rect x="26.00" y="4.67" width="4.63" height="4.97" fill="rgb(163,164,164)"/><rect x="30.33" y="4.67" width="4.63" height="4.97" fill="rgb(171,167,171)"/><rect x="34.67" y="4.67" width="4.63" height="4.97" fill="rgb(209,214,215)"/><rect x="0.00" y="9.33" width="4.63" height="4.97" fill="rgb(237,239,240)"/><rect x="4.33" y="9.33" width="4.63" height="4.97" fill="rgb(222,224,224)"/><rect x="8.67" y="9.33" width="4.63" height="4.97" fill="rgb(220,216,219)"/><rect x="13.00" y="9.33" width="4.63" height="4.97" fill="rgb(234,236,236)"/><rect x="17.33" y="9.33" width="4.63" height="4.97" fill="rgb(219,218,217)"/><rect x="21.67" y="9.33" width="4.63" height="4.97" fill="rgb(222,220,223)"/><rect x="26.00" y="9.33" width="4.63" height="4.97" fill="rgb(231,230,232)"/><rect x="30.33" y="9.33" width="4.63" height="4.97" fill="rgb(232,233,235)"/><rect x="34.67" y="9.33" width="4.63" height="4.97" fill="rgb(211,211,211)"/></svg>
<div style="position:absolute;left:302px;top:364px;font-size:12px;line-height:20px;color:#333;white-space:nowrap;">:</div>
<div style="position:absolute;left:307.5px;top:364px;font-size:12px;line-height:20px;color:#333;white-space:nowrap;">部署与运维</div>
<svg style="position:absolute;left:455px;top:366px" width="28" height="14"><rect x="0.00" y="0.00" width="4.97" height="4.97" fill="rgb(185,193,192)"/><rect x="4.67" y="0.00" width="4.97" height="4.97" fill="rgb(204,198,200)"/><rect x="9.33" y="0.00" width="4.97" height="4.97" fill="rgb(177,173,176)"/><rect x="14.00" y="0.00" width="4.97" height="4.97" fill="rgb(207,207,215)"/><rect x="18.67" y="0.00" width="4.97" height="4.97" fill="rgb(207,200,203)"/><rect x="23.33" y="0.00" width="4.97" height="4.97" fill="rgb(161,161,166)"/><rect x="0.00" y="4.67" width="4.97" height="4.97" fill="rgb(184,187,187)"/><rect x="4.67" y="4.67" width="4.97" height="4.97" fill="rgb(205,204,210)"/><rect x="9.33" y="4.67" width="4.97" height="4.97" fill="rgb(168,167,170)"/><rect x="14.00" y="4.67" width="4.97" height="4.97" fill="rgb(169,173,175)"/><rect x="18.67" y="4.67" width="4.97" height="4.97" fill="rgb(220,222,219)"/><rect x="23.33" y="4.67" width="4.97" height="4.97" fill="rgb(194,198,198)"/><rect x="0.00" y="9.33" width="4.97" height="4.97" fill="rgb(206,204,206)"/><rect x="4.67" y="9.33" width="4.97" height="4.97" fill="rgb(240,240,237)"/><rect x="9.33" y="9.33" width="4.97" height="4.97" fill="rgb(214,214,214)"/><rect x="14.00" y="9.33" width="4.97" height="4.97" fill="rgb(212,213,212)"/><rect x="18.67" y="9.33" width="4.97" height="4.97" fill="rgb(230,234,231)"/><rect x="23.33" y="9.33" width="4.97" height="4.97" fill="rgb(217,220,218)"/></svg>
<div style="position:absolute;left:485px;top:364px;font-size:12px;line-height:20px;color:#333;white-space:nowrap;">:</div>
<div style="position:absolute;left:490.5px;top:364px;font-size:12px;line-height:20px;color:#333;white-space:nowrap;">测试阶段</div>
<svg style="position:absolute;left:631px;top:366px" width="40" height="14"><rect x="0.00" y="0.00" width="4.74" height="4.97" fill="rgb(185,186,185)"/><rect x="4.44" y="0.00" width="4.74" height="4.97" fill="rgb(222,224,217)"/><rect x="8.89" y="0.00" width="4.74" height="4.97" fill="rgb(157,160,157)"/><rect x="13.33" y="0.00" width="4.74" height="4.97" fill="rgb(184,186,184)"/><rect x="17.78" y="0.00" width="4.74" height="4.97" fill="rgb(200,204,200)"/><rect x="22.22" y="0.00" width="4.74" height="4.97" fill="rgb(182,182,185)"/><rect x="26.67" y="0.00" width="4.74" height="4.97" fill="rgb(220,223,221)"/><rect x="31.11" y="0.00" width="4.74" height="4.97" fill="rgb(163,162,160)"/><rect x="35.56" y="0.00" width="4.74" height="4.97" fill="rgb(170,168,168)"/><rect x="0.00" y="4.67" width="4.74" height="4.97" fill="rgb(210,209,207)"/><rect x="4.44" y="4.67" width="4.74" height="4.97" fill="rgb(215,211,213)"/><rect x="8.89" y="4.67" width="4.74" height="4.97" fill="rgb(182,181,180)"/><rect x="13.33" y="4.67" width="4.74" height="4.97" fill="rgb(163,170,169)"/><rect x="17.78" y="4.67" width="4.74" height="4.97" fill="rgb(226,225,224)"/><rect x="22.22" y="4.67" width="4.74" height="4.97" fill="rgb(164,164,160)"/><rect x="26.67" y="4.67" width="4.74" height="4.97" fill="rgb(177,182,179)"/><rect x="31.11" y="4.67" width="4.74" height="4.97" fill="rgb(200,204,200)"/><rect x="35.56" y="4.67" width="4.74" height="4.97" fill="rgb(224,222,219)"/><rect x="0.00" y="9.33" width="4.74" height="4.97" fill="rgb(235,236,234)"/><rect x="4.44" y="9.33" width="4.74" height="4.97" fill="rgb(230,233,233)"/><rect x="8.89" y="9.33" width="4.74" height="4.97" fill="rgb(209,208,210)"/><rect x="13.33" y="9.33" width="4.74" height="4.97" fill="rgb(221,219,219)"/><rect x="17.78" y="9.33" width="4.74" height="4.97" fill="rgb(219,221,221)"/><rect x="22.22" y="9.33" width="4.74" height="4.97" fill="rgb(231,231,231)"/><rect x="26.67" y="9.33" width="4.74" height="4.97" fill="rgb(225,225,226)"/><rect x="31.11" y="9.33" width="4.74" height="4.97" fill="rgb(233,234,231)"/><rect x="35.56" y="9.33" width="4.74" height="4.97" fill="rgb(205,204,207)"/></svg>
<div style="position:absolute;left:673px;top:364px;font-size:12px;line-height:20px;color:#333;white-space:nowrap;">:</div>
<div style="position:absolute;left:678.5px;top:364px;font-size:12px;line-height:20px;color:#333;white-space:nowrap;">测试阶段</div>
<svg style="position:absolute;left:815px;top:366px" width="37" height="14"><rect x="0.00" y="0.00" width="4.92" height="4.97" fill="rgb(175,176,172)"/><rect x="4.62" y="0.00" width="4.92" height="4.97" fill="rgb(219,218,215)"/><rect x="9.25" y="0.00" width="4.92" height="4.97" fill="rgb(213,214,211)"/><rect x="13.88" y="0.00" width="4.92" height="4.97" fill="rgb(176,183,184)"/><rect x="18.50" y="0.00" width="4.92" height="4.97" fill="rgb(209,216,213)"/><rect x="23.12" y="0.00" width="4.92" height="4.97" fill="rgb(221,223,221)"/><rect x="27.75" y="0.00" width="4.92" height="4.97" fill="rgb(222,221,224)"/><rect x="32.38" y="0.00" width="4.92" height="4.97" fill="rgb(193,186,192)"/><rect x="0.00" y="4.67" width="4.92" height="4.97" fill="rgb(157,156,152)"/><rect x="4.62" y="4.67" width="4.92" height="4.97" fill="rgb(180,182,182)"/><rect x="9.25" y="4.67" width="4.92" height="4.97" fill="rgb(202,199,202)"/><rect x="13.88" y="4.67" width="4.92" height="4.97" fill="rgb(214,210,215)"/><rect x="18.50" y="4.67" width="4.92" height="4.97" fill="rgb(184,181,188)"/><rect x="23.12" y="4.67" width="4.92" height="4.97" fill="rgb(186,187,187)"/><rect x="27.75" y="4.67" width="4.92" height="4.97" fill="rgb(211,210,213)"/><rect x="32.38" y="4.67" width="4.92" height="4.97" fill="rgb(160,160,157)"/><rect x="0.00" y="9.33" width="4.92" height="4.97" fill="rgb(219,220,218)"/><rect x="4.62" y="9.33" width="4.92" height="4.97" fill="rgb(208,212,211)"/><rect x="9.25" y="9.33" width="4.92" height="4.97" fill="rgb(221,221,218)"/><rect x="13.88" y="9.33" width="4.92" height="4.97" fill="rgb(237,238,236)"/><rect x="18.50" y="9.33" width="4.92" height="4.97" fill="rgb(225,223,223)"/><rect x="23.12" y="9.33" width="4.92" height="4.97" fill="rgb(226,226,226)"/><rect x="27.75" y="9.33" width="4.92" height="4.97" fill="rgb(229,231,231)"/><rect x="32.38" y="9.33" width="4.92" height="4.97" fill="rgb(226,226,223)"/></svg>
<div style="position:absolute;left:854px;top:364px;font-size:12px;line-height:20px;color:#333;white-space:nowrap;">:</div>
<div style="position:absolute;left:859.5px;top:364px;font-size:12px;line-height:20px;color:#333;white-space:nowrap;">测试阶段</div>
<svg style="position:absolute;left:1003px;top:366px" width="26" height="14"><rect x="0.00" y="0.00" width="4.63" height="4.97" fill="rgb(165,164,166)"/><rect x="4.33" y="0.00" width="4.63" height="4.97" fill="rgb(163,165,162)"/><rect x="8.67" y="0.00" width="4.63" height="4.97" fill="rgb(203,204,202)"/><rect x="13.00" y="0.00" width="4.63" height="4.97" fill="rgb(208,206,205)"/><rect x="17.33" y="0.00" width="4.63" height="4.97" fill="rgb(213,205,209)"/><rect x="21.67" y="0.00" width="4.63" height="4.97" fill="rgb(159,164,156)"/><rect x="0.00" y="4.67" width="4.63" height="4.97" fill="rgb(213,210,216)"/><rect x="4.33" y="4.67" width="4.63" height="4.97" fill="rgb(181,188,186)"/><rect x="8.67" y="4.67" width="4.63" height="4.97" fill="rgb(178,178,181)"/><rect x="13.00" y="4.67" width="4.63" height="4.97" fill="rgb(176,177,172)"/><rect x="17.33" y="4.67" width="4.63" height="4.97" fill="rgb(170,168,169)"/><rect x="21.67" y="4.67" width="4.63" height="4.97" fill="rgb(200,200,204)"/><rect x="0.00" y="9.33" width="4.63" height="4.97" fill="rgb(215,215,216)"/><rect x="4.33" y="9.33" width="4.63" height="4.97" fill="rgb(239,241,239)"/><rect x="8.67" y="9.33" width="4.63" height="4.97" fill="rgb(223,225,225)"/><rect x="13.00" y="9.33" width="4.63" height="4.97" fill="rgb(212,210,211)"/><rect x="17.33" y="9.33" width="4.63" height="4.97" fill="rgb(208,208,209)"/><rect x="21.67" y="9.33" width="4.63" height="4.97" fill="rgb(221,220,223)"/></svg>
<div style="position:absolute;left:1031px;top:364px;font-size:12px;line-height:20px;color:#333;white-space:nowrap;">:</div>
<div style="position:absolute;left:1036.5px;top:364px;font-size:12px;line-height:20px;color:#333;white-space:nowrap;">开发阶段</div>
<svg style="position:absolute;left:1180px;top:366px" width="38" height="14"><rect x="0.00" y="0.00" width="5.05" height="4.97" fill="rgb(159,160,156)"/><rect x="4.75" y="0.00" width="5.05" height="4.97" fill="rgb(226,223,221)"/><rect x="9.50" y="0.00" width="5.05" height="4.97" fill="rgb(199,203,202)"/><rect x="14.25" y="0.00" width="5.05" height="4.97" fill="rgb(177,180,177)"/><rect x="19.00" y="0.00" width="5.05" height="4.97" fill="rgb(174,168,170)"/><rect x="23.75" y="0.00" width="5.05" height="4.97" fill="rgb(203,202,201)"/><rect x="28.50" y="0.00" width="5.05" height="4.97" fill="rgb(184,179,183)"/><rect x="33.25" y="0.00" width="5.05" height="4.97" fill="rgb(180,176,175)"/><rect x="0.00" y="4.67" width="5.05" height="4.97" fill="rgb(186,180,181)"/><rect x="4.75" y="4.67" width="5.05" height="4.97" fill="rgb(175,181,180)"/><rect x="9.50" y="4.67" width="5.05" height="4.97" fill="rgb(197,197,202)"/><rect x="14.25" y="4.67" width="5.05" height="4.97" fill="rgb(151,159,159)"/><rect x="19.00" y="4.67" width="5.05" height="4.97" fill="rgb(170,169,168)"/><rect x="23.75" y="4.67" width="5.05" height="4.97" fill="rgb(216,214,219)"/><rect x="28.50" y="4.67" width="5.05" height="4.97" fill="rgb(218,217,210)"/><rect x="33.25" y="4.67" width="5.05" height="4.97" fill="rgb(180,183,185)"/><rect x="0.00" y="9.33" width="5.05" height="4.97" fill="rgb(212,213,214)"/><rect x="4.75" y="9.33" width="5.05" height="4.97" fill="rgb(214,215,212)"/><rect x="9.50" y="9.33" width="5.05" height="4.97" fill="rgb(211,213,215)"/><rect x="14.25" y="9.33" width="5.05" height="4.97" fill="rgb(217,213,213)"/><rect x="19.00" y="9.33" width="5.05" height="4.97" fill="rgb(224,222,221)"/><rect x="23.75" y="9.33" width="5.05" height="4.97" fill="rgb(239,239,237)"/><rect x="28.50" y="9.33" width="5.05" height="4.97" fill="rgb(216,219,217)"/><rect x="33.25" y="9.33" width="5.05" height="4.97" fill="rgb(217,214,217)"/></svg>
<div style="position:absolute;left:1220px;top:364px;font-size:12px;line-height:20px;color:#333;white-space:nowrap;">:</div>
<div style="position:absolute;left:1225.5px;top:364px;font-size:12px;line-height:20px;color:#333;white-space:nowrap;">开发阶段</div>
<svg style="position:absolute;left:1350px;top:366px" width="25" height="14"><rect x="0.00" y="0.00" width="4.47" height="4.97" fill="rgb(161,156,159)"/><rect x="4.17" y="0.00" width="4.47" height="4.97" fill="rgb(221,223,220)"/><rect x="8.33" y="0.00" width="4.47" height="4.97" fill="rgb(212,206,208)"/><rect x="12.50" y="0.00" width="4.47" height="4.97" fill="rgb(222,223,223)"/><rect x="16.67" y="0.00" width="4.47" height="4.97" fill="rgb(171,172,168)"/><rect x="20.83" y="0.00" width="4.47" height="4.97" fill="rgb(170,170,174)"/><rect x="0.00" y="4.67" width="4.47" height="4.97" fill="rgb(176,178,172)"/><rect x="4.17" y="4.67" width="4.47" height="4.97" fill="rgb(211,214,214)"/><rect x="8.33" y="4.67" width="4.47" height="4.97" fill="rgb(182,183,185)"/><rect x="12.50" y="4.67" width="4.47" height="4.97" fill="rgb(184,185,178)"/><rect x="16.67" y="4.67" width="4.47" height="4.97" fill="rgb(216,209,215)"/><rect x="20.83" y="4.67" width="4.47" height="4.97" fill="rgb(162,164,165)"/><rect x="0.00" y="9.33" width="4.47" height="4.97" fill="rgb(209,209,205)"/><rect x="4.17" y="9.33" width="4.47" height="4.97" fill="rgb(222,224,224)"/><rect x="8.33" y="9.33" width="4.47" height="4.97" fill="rgb(228,228,226)"/><rect x="12.50" y="9.33" width="4.47" height="4.97" fill="rgb(234,234,233)"/><rect x="16.67" y="9.33" width="4.47" height="4.97" fill="rgb(232,231,230)"/><rect x="20.83" y="9.33" width="4.47" height="4.97" fill="rgb(222,221,220)"/></svg>
<div style="position:absolute;left:1377px;top:364px;font-size:12px;line-height:20px;color:#333;white-space:nowrap;">:</div>
<div style="position:absolute;left:1382.5px;top:364px;font-size:12px;line-height:20px;color:#333;white-space:nowrap;">需求与设计阶段</div>
<svg style="position:absolute;left:1526px;top:366px" width="38" height="14"><rect x="0.00" y="0.00" width="5.05" height="4.97" fill="rgb(179,179,176)"/><rect x="4.75" y="0.00" width="5.05" height="4.97" fill="rgb(182,181,180)"/><rect x="9.50" y="0.00" width="5.05" height="4.97" fill="rgb(191,194,193)"/><rect x="14.25" y="0.00" width="5.05" height="4.97" fill="rgb(188,187,194)"/><rect x="19.00" y="0.00" width="5.05" height="4.97" fill="rgb(185,179,185)"/><rect x="23.75" y="0.00" width="5.05" height="4.97" fill="rgb(227,226,221)"/><rect x="28.50" y="0.00" width="5.05" height="4.97" fill="rgb(165,167,163)"/><rect x="33.25" y="0.00" width="5.05" height="4.97" fill="rgb(178,178,176)"/><rect x="0.00" y="4.67" width="5.05" height="4.97" fill="rgb(183,184,185)"/><rect x="4.75" y="4.67" width="5.05" height="4.97" fill="rgb(210,210,210)"/><rect x="9.50" y="4.67" width="5.05" height="4.97" fill="rgb(180,184,184)"/><rect x="14.25" y="4.67" width="5.05" height="4.97" fill="rgb(170,171,167)"/><rect x="19.00" y="4.67" width="5.05" height="4.97" fill="rgb(199,195,197)"/><rect x="23.75" y="4.67" width="5.05" height="4.97" fill="rgb(186,190,186)"/><rect x="28.50" y="4.67" width="5.05" height="4.97" fill="rgb(187,181,182)"/><rect x="33.25" y="4.67" width="5.05" height="4.97" fill="rgb(169,166,167)"/><rect x="0.00" y="9.33" width="5.05" height="4.97" fill="rgb(235,233,235)"/><rect x="4.75" y="9.33" width="5.05" height="4.97" fill="rgb(211,212,211)"/><rect x="9.50" y="9.33" width="5.05" height="4.97" fill="rgb(237,236,238)"/><rect x="14.25" y="9.33" width="5.05" height="4.97" fill="rgb(206,208,207)"/><rect x="19.00" y="9.33" width="5.05" height="4.97" fill="rgb(210,214,210)"/><rect x="23.75" y="9.33" width="5.05" height="4.97" fill="rgb(240,241,240)"/><rect x="28.50" y="9.33" width="5.05" height="4.97" fill="rgb(227,223,225)"/><rect x="33.25" y="9.33" width="5.05" height="4.97" fill="rgb(208,208,209)"/></svg>
<div style="position:absolute;left:1566px;top:364px;font-size:12px;line-height:20px;color:#333;white-space:nowrap;">:</div>
<div style="position:absolute;left:1571.5px;top:364px;font-size:12px;line-height:20px;color:#333;white-space:nowrap;">需求与设计阶段</div>
<svg style="position:absolute;left:1708px;top:366px" width="38" height="14"><rect x="0.00" y="0.00" width="5.05" height="4.97" fill="rgb(180,186,179)"/><rect x="4.75" y="0.00" width="5.05" height="4.97" fill="rgb(172,168,168)"/><rect x="9.50" y="0.00" width="5.05" height="4.97" fill="rgb(219,220,221)"/><rect x="14.25" y="0.00" width="5.05" height="4.97" fill="rgb(191,194,191)"/><rect x="19.00" y="0.00" width="5.05" height="4.97" fill="rgb(219,219,223)"/><rect x="23.75" y="0.00" width="5.05" height="4.97" fill="rgb(161,160,157)"/><rect x="28.50" y="0.00" width="5.05" height="4.97" fill="rgb(159,157,157)"/><rect x="33.25" y="0.00" width="5.05" height="4.97" fill="rgb(187,184,184)"/><rect x="0.00" y="4.67" width="5.05" height="4.97" fill="rgb(196,200,194)"/><rect x="4.75" y="4.67" width="5.05" height="4.97" fill="rgb(169,166,170)"/><rect x="9.50" y="4.67" width="5.05" height="4.97" fill="rgb(218,220,223)"/><rect x="14.25" y="4.67" width="5.05" height="4.97" fill="rgb(206,204,202)"/><rect x="19.00" y="4.67" width="5.05" height="4.97" fill="rgb(207,208,205)"/><rect x="23.75" y="4.67" width="5.05" height="4.97" fill="rgb(188,185,191)"/><rect x="28.50" y="4.67" width="5.05" height="4.97" fill="rgb(176,177,172)"/><rect x="33.25" y="4.67" width="5.05" height="4.97" fill="rgb(189,185,190)"/><rect x="0.00" y="9.33" width="5.05" height="4.97" fill="rgb(232,234,233)"/><rect x="4.75" y="9.33" width="5.05" height="4.97" fill="rgb(236,239,236)"/><rect x="9.50" y="9.33" width="5.05" height="4.97" fill="rgb(225,226,223)"/><rect x="14.25" y="9.33" width="5.05" height="4.97" fill="rgb(207,204,205)"/><rect x="19.00" y="9.33" width="5.05" height="4.97" fill="rgb(229,232,233)"/><rect x="23.75" y="9.33" width="5.05" height="4.97" fill="rgb(214,215,216)"/><rect x="28.50" y="9.33" width="5.05" height="4.97" fill="rgb(226,224,226)"/><rect x="33.25" y="9.33" width="5.05" height="4.97" fill="rgb(209,210,207)"/></svg>
<div style="position:absolute;left:1748px;top:364px;font-size:12px;line-height:20px;color:#333;white-space:nowrap;">:</div>
<div style="position:absolute;left:1753.5px;top:364px;font-size:12px;line-height:20px;color:#333;white-space:nowrap;">需求与设计阶段</div>
<div style="position:absolute;left:37px;top:420px;width:1px;height:227px;background:#a8a8a8"></div>
<div style="position:absolute;left:1905px;top:420px;width:1px;height:227px;background:#a8a8a8"></div>
<div style="position:absolute;left:37px;top:646px;width:1869px;height:1px;background:#a8a8a8"></div>
<div style="position:absolute;left:37px;top:420px;width:1869px;height:1px;background:#a0a0a0"></div>
<div style="position:absolute;left:38px;top:421px;width:390px;height:41px;background:linear-gradient(#fff 0 1px,#f9f9f9 1px,#efefef)"></div>
<div style="position:absolute;left:38px;top:462px;width:390px;height:3px;background:#cbcbcb"></div>
<div style="position:absolute;left:67px;top:421px;width:1px;height:41px;background:#d0d0d0"></div>
<div style="position:absolute;left:127px;top:421px;width:1px;height:41px;background:#d0d0d0"></div>
<div style="position:absolute;left:187px;top:421px;width:1px;height:41px;background:#d0d0d0"></div>
<div style="position:absolute;left:247px;top:421px;width:1px;height:41px;background:#d0d0d0"></div>
<div style="position:absolute;left:307px;top:421px;width:1px;height:41px;background:#d0d0d0"></div>
<div style="position:absolute;left:367px;top:421px;width:1px;height:41px;background:#d0d0d0"></div>
<div style="position:absolute;left:68.0px;width:59px;text-align:center;top:431px;font-size:12px;line-height:20px;color:#000;white-space:nowrap;">任务名称</div>
<div style="position:absolute;left:128.0px;width:59px;text-align:center;top:431px;font-size:12px;line-height:20px;color:#000;white-space:nowrap;">分类</div>
<div style="position:absolute;left:188.0px;width:59px;text-align:center;top:431px;font-size:12px;line-height:20px;color:#000;white-space:nowrap;">任务数</div>
<div style="position:absolute;left:248.0px;width:59px;text-align:center;top:431px;font-size:12px;line-height:20px;color:#000;white-space:nowrap;">计划工日</div>
<div style="position:absolute;left:308.0px;width:59px;text-align:center;top:431px;font-size:12px;line-height:20px;color:#000;white-space:nowrap;">实际工日</div>
<div style="position:absolute;left:368.0px;width:59px;text-align:center;top:431px;font-size:12px;line-height:20px;color:#000;white-space:nowrap;">计划/实际</div>
<div style="position:absolute;left:0;top:0;width:1912px;height:631px;overflow:hidden">
<div style="position:absolute;left:38px;top:465px;width:390px;height:24px;background:#ffe28d"></div>
<div style="position:absolute;left:38px;top:489px;width:390px;height:1px;background:repeating-linear-gradient(90deg,#c8c8c8 0 1px,transparent 1px 3px);background-color:#ffe28d"></div>
<div style="position:absolute;left:67px;top:465px;width:1px;height:25px;background:#d0d0d0"></div>
<div style="position:absolute;left:127px;top:465px;width:1px;height:25px;background:#d0d0d0"></div>
<div style="position:absolute;left:187px;top:465px;width:1px;height:25px;background:#d0d0d0"></div>
<div style="position:absolute;left:247px;top:465px;width:1px;height:25px;background:#d0d0d0"></div>
<div style="position:absolute;left:307px;top:465px;width:1px;height:25px;background:#d0d0d0"></div>
<div style="position:absolute;left:367px;top:465px;width:1px;height:25px;background:#d0d0d0"></div>
<div style="position:absolute;left:38.0px;width:29px;text-align:center;top:468px;font-size:12px;line-height:20px;color:#000;white-space:nowrap;">1</div>
<div style="position:absolute;left:72px;top:468px;font-size:12px;line-height:20px;color:#000;white-space:nowrap;">佟</div>
<svg style="position:absolute;left:74px;top:469px" width="24" height="14"><rect x="0.00" y="0.00" width="5.10" height="4.97" fill="rgb(196,175,125)"/><rect x="4.80" y="0.00" width="5.10" height="4.97" fill="rgb(199,178,134)"/><rect x="9.60" y="0.00" width="5.10" height="4.97" fill="rgb(193,172,128)"/><rect x="14.40" y="0.00" width="5.10" height="4.97" fill="rgb(171,150,107)"/><rect x="19.20" y="0.00" width="5.10" height="4.97" fill="rgb(142,123,68)"/><rect x="0.00" y="4.67" width="5.10" height="4.97" fill="rgb(140,113,62)"/><rect x="4.80" y="4.67" width="5.10" height="4.97" fill="rgb(138,118,65)"/><rect x="9.60" y="4.67" width="5.10" height="4.97" fill="rgb(195,177,123)"/><rect x="14.40" y="4.67" width="5.10" height="4.97" fill="rgb(200,181,134)"/><rect x="19.20" y="4.67" width="5.10" height="4.97" fill="rgb(132,118,65)"/><rect x="0.00" y="9.33" width="5.10" height="4.97" fill="rgb(223,209,186)"/><rect x="4.80" y="9.33" width="5.10" height="4.97" fill="rgb(214,207,180)"/><rect x="9.60" y="9.33" width="5.10" height="4.97" fill="rgb(195,185,162)"/><rect x="14.40" y="9.33" width="5.10" height="4.97" fill="rgb(201,192,165)"/><rect x="19.20" y="9.33" width="5.10" height="4.97" fill="rgb(194,185,160)"/></svg>
<div style="position:absolute;left:132px;top:468px;font-size:12px;line-height:20px;color:#000;white-space:nowrap;">部署与...</div>
<div style="position:absolute;right:1669px;top:468px;font-size:12px;line-height:20px;color:#000;white-space:nowrap;">1</div>
<div style="position:absolute;right:1609px;top:468px;font-size:12px;line-height:20px;color:#000;white-space:nowrap;">1.0</div>
<div style="position:absolute;right:1549px;top:468px;font-size:12px;line-height:20px;color:#000;white-space:nowrap;">1.0</div>
<div style="position:absolute;right:1485px;top:468px;font-size:12px;line-height:20px;color:#000;white-space:nowrap;">100%</div>
<div style="position:absolute;left:38px;top:490px;width:390px;height:24px;background:#f3f3f3"></div>
<div style="position:absolute;left:38px;top:514px;width:390px;height:1px;background:repeating-linear-gradient(90deg,#c8c8c8 0 1px,transparent 1px 3px);background-color:#f3f3f3"></div>
<div style="position:absolute;left:67px;top:490px;width:1px;height:25px;background:#d0d0d0"></div>
<div style="position:absolute;left:127px;top:490px;width:1px;height:25px;background:#d0d0d0"></div>
<div style="position:absolute;left:187px;top:490px;width:1px;height:25px;background:#d0d0d0"></div>
<div style="position:absolute;left:247px;top:490px;width:1px;height:25px;background:#d0d0d0"></div>
<div style="position:absolute;left:307px;top:490px;width:1px;height:25px;background:#d0d0d0"></div>
<div style="position:absolute;left:367px;top:490px;width:1px;height:25px;background:#d0d0d0"></div>
<div style="position:absolute;left:38.0px;width:29px;text-align:center;top:493px;font-size:12px;line-height:20px;color:#000;white-space:nowrap;">2</div>
<div style="position:absolute;left:100px;top:493px;font-size:12px;line-height:20px;color:#000;white-space:nowrap;">粤</div>
<svg style="position:absolute;left:72px;top:495px" width="30" height="14"><rect x="0.00" y="0.00" width="4.59" height="4.97" fill="rgb(190,194,196)"/><rect x="4.29" y="0.00" width="4.59" height="4.97" fill="rgb(150,144,154)"/><rect x="8.57" y="0.00" width="4.59" height="4.97" fill="rgb(191,194,195)"/><rect x="12.86" y="0.00" width="4.59" height="4.97" fill="rgb(128,133,136)"/><rect x="17.14" y="0.00" width="4.59" height="4.97" fill="rgb(151,149,151)"/><rect x="21.43" y="0.00" width="4.59" height="4.97" fill="rgb(152,159,161)"/><rect x="25.71" y="0.00" width="4.59" height="4.97" fill="rgb(178,177,182)"/><rect x="0.00" y="4.67" width="4.59" height="4.97" fill="rgb(194,192,202)"/><rect x="4.29" y="4.67" width="4.59" height="4.97" fill="rgb(183,188,189)"/><rect x="8.57" y="4.67" width="4.59" height="4.97" fill="rgb(200,203,202)"/><rect x="12.86" y="4.67" width="4.59" height="4.97" fill="rgb(140,134,145)"/><rect x="17.14" y="4.67" width="4.59" height="4.97" fill="rgb(142,142,148)"/><rect x="21.43" y="4.67" width="4.59" height="4.97" fill="rgb(193,195,192)"/><rect x="25.71" y="4.67" width="4.59" height="4.97" fill="rgb(139,140,146)"/><rect x="0.00" y="9.33" width="4.59" height="4.97" fill="rgb(216,215,216)"/><rect x="4.29" y="9.33" width="4.59" height="4.97" fill="rgb(208,209,211)"/><rect x="8.57" y="9.33" width="4.59" height="4.97" fill="rgb(218,218,217)"/><rect x="12.86" y="9.33" width="4.59" height="4.97" fill="rgb(195,195,194)"/><rect x="17.14" y="9.33" width="4.59" height="4.97" fill="rgb(223,225,229)"/><rect x="21.43" y="9.33" width="4.59" height="4.97" fill="rgb(196,194,196)"/><rect x="25.71" y="9.33" width="4.59" height="4.97" fill="rgb(227,226,228)"/></svg>
<div style="position:absolute;left:132px;top:493px;font-size:12px;line-height:20px;color:#000;white-space:nowrap;">部署与...</div>
<div style="position:absolute;right:1669px;top:493px;font-size:12px;line-height:20px;color:#000;white-space:nowrap;">2</div>
<div style="position:absolute;right:1609px;top:493px;font-size:12px;line-height:20px;color:#000;white-space:nowrap;">3.0</div>
<div style="position:absolute;right:1549px;top:493px;font-size:12px;line-height:20px;color:#000;white-space:nowrap;">4.0</div>
<div style="position:absolute;right:1485px;top:493px;font-size:12px;line-height:20px;color:#000;white-space:nowrap;">75%</div>
<div style="position:absolute;left:38px;top:515px;width:390px;height:24px;background:#fff"></div>
<div style="position:absolute;left:38px;top:539px;width:390px;height:1px;background:repeating-linear-gradient(90deg,#c8c8c8 0 1px,transparent 1px 3px);background-color:#fff"></div>
<div style="position:absolute;left:67px;top:515px;width:1px;height:25px;background:#d0d0d0"></div>
<div style="position:absolute;left:127px;top:515px;width:1px;height:25px;background:#d0d0d0"></div>
<div style="position:absolute;left:187px;top:515px;width:1px;height:25px;background:#d0d0d0"></div>
<div style="position:absolute;left:247px;top:515px;width:1px;height:25px;background:#d0d0d0"></div>
<div style="position:absolute;left:307px;top:515px;width:1px;height:25px;background:#d0d0d0"></div>
<div style="position:absolute;left:367px;top:515px;width:1px;height:25px;background:#d0d0d0"></div>
<div style="position:absolute;left:38.0px;width:29px;text-align:center;top:518px;font-size:12px;line-height:20px;color:#000;white-space:nowrap;">3</div>
<div style="position:absolute;left:72px;top:518px;font-size:12px;line-height:20px;color:#000;white-space:nowrap;">方</div>
<svg style="position:absolute;left:81px;top:520px" width="30" height="14"><rect x="0.00" y="0.00" width="4.59" height="4.97" fill="rgb(171,164,170)"/><rect x="4.29" y="0.00" width="4.59" height="4.97" fill="rgb(195,191,195)"/><rect x="8.57" y="0.00" width="4.59" height="4.97" fill="rgb(160,162,162)"/><rect x="12.86" y="0.00" width="4.59" height="4.97" fill="rgb(202,193,204)"/><rect x="17.14" y="0.00" width="4.59" height="4.97" fill="rgb(159,158,161)"/><rect x="21.43" y="0.00" width="4.59" height="4.97" fill="rgb(160,158,162)"/><rect x="25.71" y="0.00" width="4.59" height="4.97" fill="rgb(213,210,216)"/><rect x="0.00" y="4.67" width="4.59" height="4.97" fill="rgb(208,207,213)"/><rect x="4.29" y="4.67" width="4.59" height="4.97" fill="rgb(193,187,193)"/><rect x="8.57" y="4.67" width="4.59" height="4.97" fill="rgb(196,187,196)"/><rect x="12.86" y="4.67" width="4.59" height="4.97" fill="rgb(207,205,211)"/><rect x="17.14" y="4.67" width="4.59" height="4.97" fill="rgb(192,192,197)"/><rect x="21.43" y="4.67" width="4.59" height="4.97" fill="rgb(187,184,188)"/><rect x="25.71" y="4.67" width="4.59" height="4.97" fill="rgb(170,162,166)"/><rect x="0.00" y="9.33" width="4.59" height="4.97" fill="rgb(218,214,216)"/><rect x="4.29" y="9.33" width="4.59" height="4.97" fill="rgb(216,216,219)"/><rect x="8.57" y="9.33" width="4.59" height="4.97" fill="rgb(212,209,213)"/><rect x="12.86" y="9.33" width="4.59" height="4.97" fill="rgb(207,207,210)"/><rect x="17.14" y="9.33" width="4.59" height="4.97" fill="rgb(215,215,215)"/><rect x="21.43" y="9.33" width="4.59" height="4.97" fill="rgb(211,211,213)"/><rect x="25.71" y="9.33" width="4.59" height="4.97" fill="rgb(225,221,226)"/></svg>
<div style="position:absolute;left:132px;top:518px;font-size:12px;line-height:20px;color:#000;white-space:nowrap;">部署与...</div>
<div style="position:absolute;right:1669px;top:518px;font-size:12px;line-height:20px;color:#000;white-space:nowrap;">2</div>
<div style="position:absolute;right:1609px;top:518px;font-size:12px;line-height:20px;color:#000;white-space:nowrap;">4.0</div>
<div style="position:absolute;right:1549px;top:518px;font-size:12px;line-height:20px;color:#000;white-space:nowrap;">4.0</div>
<div style="position:absolute;right:1485px;top:518px;font-size:12px;line-height:20px;color:#000;white-space:nowrap;">100%</div>
<div style="position:absolute;left:38px;top:540px;width:390px;height:24px;background:#f3f3f3"></div>
<div style="position:absolute;left:38px;top:564px;width:390px;height:1px;background:repeating-linear-gradient(90deg,#c8c8c8 0 1px,transparent 1px 3px);background-color:#f3f3f3"></div>
<div style="position:absolute;left:67px;top:540px;width:1px;height:25px;background:#d0d0d0"></div>
<div style="position:absolute;left:127px;top:540px;width:1px;height:25px;background:#d0d0d0"></div>
<div style="position:absolute;left:187px;top:540px;width:1px;height:25px;background:#d0d0d0"></div>
<div style="position:absolute;left:247px;top:540px;width:1px;height:25px;background:#d0d0d0"></div>
<div style="position:absolute;left:307px;top:540px;width:1px;height:25px;background:#d0d0d0"></div>
<div style="position:absolute;left:367px;top:540px;width:1px;height:25px;background:#d0d0d0"></div>
<div style="position:absolute;left:38.0px;width:29px;text-align:center;top:543px;font-size:12px;line-height:20px;color:#000;white-space:nowrap;">4</div>
<div style="position:absolute;left:72px;top:543px;font-size:12px;line-height:20px;color:#000;white-space:nowrap;">王</div>
<svg style="position:absolute;left:76px;top:545px" width="34" height="14"><rect x="0.00" y="0.00" width="4.55" height="4.97" fill="rgb(152,147,153)"/><rect x="4.25" y="0.00" width="4.55" height="4.97" fill="rgb(167,164,175)"/><rect x="8.50" y="0.00" width="4.55" height="4.97" fill="rgb(176,175,180)"/><rect x="12.75" y="0.00" width="4.55" height="4.97" fill="rgb(150,149,156)"/><rect x="17.00" y="0.00" width="4.55" height="4.97" fill="rgb(180,181,189)"/><rect x="21.25" y="0.00" width="4.55" height="4.97" fill="rgb(152,158,159)"/><rect x="25.50" y="0.00" width="4.55" height="4.97" fill="rgb(152,153,158)"/><rect x="29.75" y="0.00" width="4.55" height="4.97" fill="rgb(174,175,183)"/><rect x="0.00" y="4.67" width="4.55" height="4.97" fill="rgb(163,163,169)"/><rect x="4.25" y="4.67" width="4.55" height="4.97" fill="rgb(144,148,150)"/><rect x="8.50" y="4.67" width="4.55" height="4.97" fill="rgb(150,151,151)"/><rect x="12.75" y="4.67" width="4.55" height="4.97" fill="rgb(172,168,177)"/><rect x="17.00" y="4.67" width="4.55" height="4.97" fill="rgb(175,171,173)"/><rect x="21.25" y="4.67" width="4.55" height="4.97" fill="rgb(147,150,155)"/><rect x="25.50" y="4.67" width="4.55" height="4.97" fill="rgb(146,148,157)"/><rect x="29.75" y="4.67" width="4.55" height="4.97" fill="rgb(153,146,156)"/><rect x="0.00" y="9.33" width="4.55" height="4.97" fill="rgb(224,227,229)"/><rect x="4.25" y="9.33" width="4.55" height="4.97" fill="rgb(224,225,228)"/><rect x="8.50" y="9.33" width="4.55" height="4.97" fill="rgb(223,221,225)"/><rect x="12.75" y="9.33" width="4.55" height="4.97" fill="rgb(226,224,229)"/><rect x="17.00" y="9.33" width="4.55" height="4.97" fill="rgb(224,225,230)"/><rect x="21.25" y="9.33" width="4.55" height="4.97" fill="rgb(213,210,215)"/><rect x="25.50" y="9.33" width="4.55" height="4.97" fill="rgb(220,222,225)"/><rect x="29.75" y="9.33" width="4.55" height="4.97" fill="rgb(225,225,227)"/></svg>
<div style="position:absolute;left:132px;top:543px;font-size:12px;line-height:20px;color:#000;white-space:nowrap;">部署与...</div>
<div style="position:absolute;right:1669px;top:543px;font-size:12px;line-height:20px;color:#000;white-space:nowrap;">1</div>
<div style="position:absolute;right:1609px;top:543px;font-size:12px;line-height:20px;color:#000;white-space:nowrap;">2.0</div>
<div style="position:absolute;right:1549px;top:543px;font-size:12px;line-height:20px;color:#000;white-space:nowrap;">2.0</div>
<div style="position:absolute;right:1485px;top:543px;font-size:12px;line-height:20px;color:#000;white-space:nowrap;">100%</div>
<div style="position:absolute;left:38px;top:565px;width:390px;height:24px;background:#fff"></div>
<div style="position:absolute;left:38px;top:589px;width:390px;height:1px;background:repeating-linear-gradient(90deg,#c8c8c8 0 1px,transparent 1px 3px);background-color:#fff"></div>
<div style="position:absolute;left:67px;top:565px;width:1px;height:25px;background:#d0d0d0"></div>
<div style="position:absolute;left:127px;top:565px;width:1px;height:25px;background:#d0d0d0"></div>
<div style="position:absolute;left:187px;top:565px;width:1px;height:25px;background:#d0d0d0"></div>
<div style="position:absolute;left:247px;top:565px;width:1px;height:25px;background:#d0d0d0"></div>
<div style="position:absolute;left:307px;top:565px;width:1px;height:25px;background:#d0d0d0"></div>
<div style="position:absolute;left:367px;top:565px;width:1px;height:25px;background:#d0d0d0"></div>
<div style="position:absolute;left:38.0px;width:29px;text-align:center;top:568px;font-size:12px;line-height:20px;color:#000;white-space:nowrap;">5</div>
<div style="position:absolute;left:72px;top:568px;font-size:12px;line-height:20px;color:#000;white-space:nowrap;">张</div>
<svg style="position:absolute;left:78px;top:570px" width="19" height="14"><rect x="0.00" y="0.00" width="5.05" height="4.97" fill="rgb(149,152,144)"/><rect x="4.75" y="0.00" width="5.05" height="4.97" fill="rgb(149,141,141)"/><rect x="9.50" y="0.00" width="5.05" height="4.97" fill="rgb(194,192,190)"/><rect x="14.25" y="0.00" width="5.05" height="4.97" fill="rgb(148,145,143)"/><rect x="0.00" y="4.67" width="5.05" height="4.97" fill="rgb(159,152,153)"/><rect x="4.75" y="4.67" width="5.05" height="4.97" fill="rgb(153,150,150)"/><rect x="9.50" y="4.67" width="5.05" height="4.97" fill="rgb(154,153,151)"/><rect x="14.25" y="4.67" width="5.05" height="4.97" fill="rgb(157,151,152)"/><rect x="0.00" y="9.33" width="5.05" height="4.97" fill="rgb(201,198,199)"/><rect x="4.75" y="9.33" width="5.05" height="4.97" fill="rgb(216,214,214)"/><rect x="9.50" y="9.33" width="5.05" height="4.97" fill="rgb(220,221,217)"/><rect x="14.25" y="9.33" width="5.05" height="4.97" fill="rgb(202,203,200)"/></svg>
<div style="position:absolute;left:132px;top:568px;font-size:12px;line-height:20px;color:#000;white-space:nowrap;">测试阶段</div>
<div style="position:absolute;right:1669px;top:568px;font-size:12px;line-height:20px;color:#000;white-space:nowrap;">2</div>
<div style="position:absolute;right:1609px;top:568px;font-size:12px;line-height:20px;color:#000;white-space:nowrap;">6.0</div>
<div style="position:absolute;right:1549px;top:568px;font-size:12px;line-height:20px;color:#000;white-space:nowrap;">6.0</div>
<div style="position:absolute;right:1485px;top:568px;font-size:12px;line-height:20px;color:#000;white-space:nowrap;">100%</div>
<div style="position:absolute;left:38px;top:590px;width:390px;height:24px;background:#f3f3f3"></div>
<div style="position:absolute;left:38px;top:614px;width:390px;height:1px;background:repeating-linear-gradient(90deg,#c8c8c8 0 1px,transparent 1px 3px);background-color:#f3f3f3"></div>
<div style="position:absolute;left:67px;top:590px;width:1px;height:25px;background:#d0d0d0"></div>
<div style="position:absolute;left:127px;top:590px;width:1px;height:25px;background:#d0d0d0"></div>
<div style="position:absolute;left:187px;top:590px;width:1px;height:25px;background:#d0d0d0"></div>
<div style="position:absolute;left:247px;top:590px;width:1px;height:25px;background:#d0d0d0"></div>
<div style="position:absolute;left:307px;top:590px;width:1px;height:25px;background:#d0d0d0"></div>
<div style="position:absolute;left:367px;top:590px;width:1px;height:25px;background:#d0d0d0"></div>
<div style="position:absolute;left:38.0px;width:29px;text-align:center;top:593px;font-size:12px;line-height:20px;color:#000;white-space:nowrap;">6</div>
<div style="position:absolute;left:96px;top:593px;font-size:12px;line-height:20px;color:#000;white-space:nowrap;">蓥</div>
<svg style="position:absolute;left:71px;top:595px" width="27" height="14"><rect x="0.00" y="0.00" width="4.80" height="4.97" fill="rgb(159,159,156)"/><rect x="4.50" y="0.00" width="4.80" height="4.97" fill="rgb(162,166,159)"/><rect x="9.00" y="0.00" width="4.80" height="4.97" fill="rgb(162,161,161)"/><rect x="13.50" y="0.00" width="4.80" height="4.97" fill="rgb(111,111,112)"/><rect x="18.00" y="0.00" width="4.80" height="4.97" fill="rgb(128,124,127)"/><rect x="22.50" y="0.00" width="4.80" height="4.97" fill="rgb(187,183,185)"/><rect x="0.00" y="4.67" width="4.80" height="4.97" fill="rgb(183,190,190)"/><rect x="4.50" y="4.67" width="4.80" height="4.97" fill="rgb(186,185,186)"/><rect x="9.00" y="4.67" width="4.80" height="4.97" fill="rgb(156,158,153)"/><rect x="13.50" y="4.67" width="4.80" height="4.97" fill="rgb(157,156,158)"/><rect x="18.00" y="4.67" width="4.80" height="4.97" fill="rgb(132,128,132)"/><rect x="22.50" y="4.67" width="4.80" height="4.97" fill="rgb(116,124,121)"/><rect x="0.00" y="9.33" width="4.80" height="4.97" fill="rgb(199,196,197)"/><rect x="4.50" y="9.33" width="4.80" height="4.97" fill="rgb(202,203,203)"/><rect x="9.00" y="9.33" width="4.80" height="4.97" fill="rgb(185,188,184)"/><rect x="13.50" y="9.33" width="4.80" height="4.97" fill="rgb(212,208,212)"/><rect x="18.00" y="9.33" width="4.80" height="4.97" fill="rgb(191,188,191)"/><rect x="22.50" y="9.33" width="4.80" height="4.97" fill="rgb(182,183,184)"/></svg>
<div style="position:absolute;left:132px;top:593px;font-size:12px;line-height:20px;color:#000;white-space:nowrap;">测试阶段</div>
<div style="position:absolute;right:1669px;top:593px;font-size:12px;line-height:20px;color:#000;white-space:nowrap;">3</div>
<div style="position:absolute;right:1609px;top:593px;font-size:12px;line-height:20px;color:#000;white-space:nowrap;">11.0</div>
<div style="position:absolute;right:1549px;top:593px;font-size:12px;line-height:20px;color:#000;white-space:nowrap;">11.0</div>
<div style="position:absolute;right:1485px;top:593px;font-size:12px;line-height:20px;color:#000;white-space:nowrap;">100%</div>
<div style="position:absolute;left:38px;top:615px;width:390px;height:24px;background:#fff"></div>
<div style="position:absolute;left:38px;top:639px;width:390px;height:1px;background:repeating-linear-gradient(90deg,#c8c8c8 0 1px,transparent 1px 3px);background-color:#fff"></div>
<div style="position:absolute;left:67px;top:615px;width:1px;height:25px;background:#d0d0d0"></div>
<div style="position:absolute;left:127px;top:615px;width:1px;height:25px;background:#d0d0d0"></div>
<div style="position:absolute;left:187px;top:615px;width:1px;height:25px;background:#d0d0d0"></div>
<div style="position:absolute;left:247px;top:615px;width:1px;height:25px;background:#d0d0d0"></div>
<div style="position:absolute;left:307px;top:615px;width:1px;height:25px;background:#d0d0d0"></div>
<div style="position:absolute;left:367px;top:615px;width:1px;height:25px;background:#d0d0d0"></div>
<div style="position:absolute;left:38.0px;width:29px;text-align:center;top:618px;font-size:12px;line-height:20px;color:#000;white-space:nowrap;">7</div>
<div style="position:absolute;left:101px;top:618px;font-size:12px;line-height:20px;color:#000;white-space:nowrap;">粤</div>
<svg style="position:absolute;left:71px;top:620px" width="31" height="14"><rect x="0.00" y="0.00" width="4.73" height="4.97" fill="rgb(193,191,182)"/><rect x="4.43" y="0.00" width="4.73" height="4.97" fill="rgb(160,166,152)"/><rect x="8.86" y="0.00" width="4.73" height="4.97" fill="rgb(135,138,131)"/><rect x="13.29" y="0.00" width="4.73" height="4.97" fill="rgb(178,182,169)"/><rect x="17.71" y="0.00" width="4.73" height="4.97" fill="rgb(174,180,162)"/><rect x="22.14" y="0.00" width="4.73" height="4.97" fill="rgb(141,140,136)"/><rect x="26.57" y="0.00" width="4.73" height="4.97" fill="rgb(152,155,138)"/><rect x="0.00" y="4.67" width="4.73" height="4.97" fill="rgb(133,135,120)"/><rect x="4.43" y="4.67" width="4.73" height="4.97" fill="rgb(192,187,181)"/><rect x="8.86" y="4.67" width="4.73" height="4.97" fill="rgb(190,185,181)"/><rect x="13.29" y="4.67" width="4.73" height="4.97" fill="rgb(168,173,158)"/><rect x="17.71" y="4.67" width="4.73" height="4.97" fill="rgb(187,182,178)"/><rect x="22.14" y="4.67" width="4.73" height="4.97" fill="rgb(152,159,144)"/><rect x="26.57" y="4.67" width="4.73" height="4.97" fill="rgb(160,157,142)"/><rect x="0.00" y="9.33" width="4.73" height="4.97" fill="rgb(205,207,201)"/><rect x="4.43" y="9.33" width="4.73" height="4.97" fill="rgb(226,223,219)"/><rect x="8.86" y="9.33" width="4.73" height="4.97" fill="rgb(210,210,203)"/><rect x="13.29" y="9.33" width="4.73" height="4.97" fill="rgb(209,211,206)"/><rect x="17.71" y="9.33" width="4.73" height="4.97" fill="rgb(188,191,183)"/><rect x="22.14" y="9.33" width="4.73" height="4.97" fill="rgb(219,221,212)"/><rect x="26.57" y="9.33" width="4.73" height="4.97" fill="rgb(202,202,196)"/></svg>
<div style="position:absolute;left:132px;top:618px;font-size:12px;line-height:20px;color:#000;white-space:nowrap;">测试阶段</div>
<div style="position:absolute;right:1669px;top:618px;font-size:12px;line-height:20px;color:#000;white-space:nowrap;">2</div>
<div style="position:absolute;right:1609px;top:618px;font-size:12px;line-height:20px;color:#000;white-space:nowrap;">9.0</div>
<div style="position:absolute;right:1549px;top:618px;font-size:12px;line-height:20px;color:#000;white-space:nowrap;">9.0</div>
<div style="position:absolute;right:1485px;top:618px;font-size:12px;line-height:20px;color:#000;white-space:nowrap;">100%</div>
</div>
<div style="position:absolute;left:38px;top:631px;width:390px;height:15px;background:#fafafa"></div>
<svg style="position:absolute;left:44px;top:632px" width="380" height="13"><path d="M2 6.5 L9 2 V11Z" fill="#8a8a8a"/><rect x="17" y="2" width="341" height="9.5" rx="4.75" fill="#8c8c8c"/><path d="M378 6.5 L371 2 V11Z" fill="#8a8a8a"/></svg>
<div style="position:absolute;left:428px;top:420px;width:1px;height:226px;background:#a0a0a0"></div>
<div style="position:absolute;left:429px;top:420px;width:4px;height:226px;background:#fff"></div>
<div style="position:absolute;left:433px;top:420px;width:1px;height:226px;background:#a8a8a8"></div>
<svg style="position:absolute;left:429px;top:488px" width="5" height="48"><path d="M4 7 L1 4.5 L4 2Z" fill="#555"/><path d="M1 37 L4 39.5 L1 42Z" fill="#555"/></svg>
<div style="position:absolute;left:434px;top:420px;width:1456px;height:211px;overflow:hidden">
<div style="position:absolute;left:0px;top:1px;width:1500px;height:41px;background:linear-gradient(#fff 0 1px,#f9f9f9 1px,#efefef)"></div>
<div style="position:absolute;left:0px;top:0px;width:1500px;height:1px;background:#a0a0a0"></div>
<div style="position:absolute;left:0px;top:23px;width:1500px;height:1px;background:#d0d0d0"></div>
<div style="position:absolute;left:0px;top:42px;width:1500px;height:3px;background:#cbcbcb"></div>
<div style="position:absolute;left:139px;top:1px;width:1px;height:22px;background:#d0d0d0"></div>
<div style="position:absolute;left:-0.5px;width:140px;text-align:center;top:3px;font-size:13px;line-height:20px;color:#000;white-space:nowrap;">2023-10-01</div>
<div style="position:absolute;left:279px;top:1px;width:1px;height:22px;background:#d0d0d0"></div>
<div style="position:absolute;left:139.5px;width:140px;text-align:center;top:3px;font-size:13px;line-height:20px;color:#000;white-space:nowrap;">2023-10-08</div>
<div style="position:absolute;left:419px;top:1px;width:1px;height:22px;background:#d0d0d0"></div>
<div style="position:absolute;left:279.5px;width:140px;text-align:center;top:3px;font-size:13px;line-height:20px;color:#000;white-space:nowrap;">2023-10-15</div>
<div style="position:absolute;left:559px;top:1px;width:1px;height:22px;background:#d0d0d0"></div>
<div style="position:absolute;left:419.5px;width:140px;text-align:center;top:3px;font-size:13px;line-height:20px;color:#000;white-space:nowrap;">2023-10-22</div>
<div style="position:absolute;left:699px;top:1px;width:1px;height:22px;background:#d0d0d0"></div>
<div style="position:absolute;left:559.5px;width:140px;text-align:center;top:3px;font-size:13px;line-height:20px;color:#000;white-space:nowrap;">2023-10-29</div>
<div style="position:absolute;left:839px;top:1px;width:1px;height:22px;background:#d0d0d0"></div>
<div style="position:absolute;left:699.5px;width:140px;text-align:center;top:3px;font-size:13px;line-height:20px;color:#000;white-space:nowrap;">2023-11-05</div>
<div style="position:absolute;left:979px;top:1px;width:1px;height:22px;background:#d0d0d0"></div>
<div style="position:absolute;left:839.5px;width:140px;text-align:center;top:3px;font-size:13px;line-height:20px;color:#000;white-space:nowrap;">2023-11-12</div>
<div style="position:absolute;left:1119px;top:1px;width:1px;height:22px;background:#d0d0d0"></div>
<div style="position:absolute;left:979.5px;width:140px;text-align:center;top:3px;font-size:13px;line-height:20px;color:#000;white-space:nowrap;">2023-11-19</div>
<div style="position:absolute;left:1259px;top:1px;width:1px;height:22px;background:#d0d0d0"></div>
<div style="position:absolute;left:1119.5px;width:140px;text-align:center;top:3px;font-size:13px;line-height:20px;color:#000;white-space:nowrap;">2023-11-26</div>
<div style="position:absolute;left:1399px;top:1px;width:1px;height:22px;background:#d0d0d0"></div>
<div style="position:absolute;left:1259.5px;width:140px;text-align:center;top:3px;font-size:13px;line-height:20px;color:#000;white-space:nowrap;">2023-12-03</div>
<div style="position:absolute;left:1539px;top:1px;width:1px;height:22px;background:#d0d0d0"></div>
<div style="position:absolute;left:1399.5px;width:140px;text-align:center;top:3px;font-size:13px;line-height:20px;color:#000;white-space:nowrap;">2023-12-10</div>
<div style="position:absolute;left:19px;top:24px;width:1px;height:18px;background:#d0d0d0"></div>
<div style="position:absolute;left:-0.5px;width:20px;text-align:center;top:24px;font-size:13px;line-height:20px;color:#000;white-space:nowrap;">1</div>
<div style="position:absolute;left:39px;top:24px;width:1px;height:18px;background:#d0d0d0"></div>
<div style="position:absolute;left:19.5px;width:20px;text-align:center;top:24px;font-size:13px;line-height:20px;color:#000;white-space:nowrap;">2</div>
<div style="position:absolute;left:59px;top:24px;width:1px;height:18px;background:#d0d0d0"></div>
<div style="position:absolute;left:39.5px;width:20px;text-align:center;top:24px;font-size:13px;line-height:20px;color:#000;white-space:nowrap;">3</div>
<div style="position:absolute;left:79px;top:24px;width:1px;height:18px;background:#d0d0d0"></div>
<div style="position:absolute;left:59.5px;width:20px;text-align:center;top:24px;font-size:13px;line-height:20px;color:#000;white-space:nowrap;">4</div>
<div style="position:absolute;left:99px;top:24px;width:1px;height:18px;background:#d0d0d0"></div>
<div style="position:absolute;left:79.5px;width:20px;text-align:center;top:24px;font-size:13px;line-height:20px;color:#000;white-space:nowrap;">5</div>
<div style="position:absolute;left:119px;top:24px;width:1px;height:18px;background:#d0d0d0"></div>
<div style="position:absolute;left:99.5px;width:20px;text-align:center;top:24px;font-size:13px;line-height:20px;color:#000;white-space:nowrap;">6</div>
<div style="position:absolute;left:139px;top:24px;width:1px;height:18px;background:#d0d0d0"></div>
<div style="position:absolute;left:119.5px;width:20px;text-align:center;top:24px;font-size:13px;line-height:20px;color:#000;white-space:nowrap;">7</div>
<div style="position:absolute;left:159px;top:24px;width:1px;height:18px;background:#d0d0d0"></div>
<div style="position:absolute;left:139.5px;width:20px;text-align:center;top:24px;font-size:13px;line-height:20px;color:#000;white-space:nowrap;">8</div>
<div style="position:absolute;left:179px;top:24px;width:1px;height:18px;background:#d0d0d0"></div>
<div style="position:absolute;left:159.5px;width:20px;text-align:center;top:24px;font-size:13px;line-height:20px;color:#000;white-space:nowrap;">9</div>
<div style="position:absolute;left:199px;top:24px;width:1px;height:18px;background:#d0d0d0"></div>
<div style="position:absolute;left:179.5px;width:20px;text-align:center;top:24px;font-size:13px;line-height:20px;color:#000;white-space:nowrap;">10</div>
<div style="position:absolute;left:219px;top:24px;width:1px;height:18px;background:#d0d0d0"></div>
<div style="position:absolute;left:199.5px;width:20px;text-align:center;top:24px;font-size:13px;line-height:20px;color:#000;white-space:nowrap;">11</div>
<div style="position:absolute;left:239px;top:24px;width:1px;height:18px;background:#d0d0d0"></div>
<div style="position:absolute;left:219.5px;width:20px;text-align:center;top:24px;font-size:13px;line-height:20px;color:#000;white-space:nowrap;">12</div>
<div style="position:absolute;left:259px;top:24px;width:1px;height:18px;background:#d0d0d0"></div>
<div style="position:absolute;left:239.5px;width:20px;text-align:center;top:24px;font-size:13px;line-height:20px;color:#000;white-space:nowrap;">13</div>
<div style="position:absolute;left:279px;top:24px;width:1px;height:18px;background:#d0d0d0"></div>
<div style="position:absolute;left:259.5px;width:20px;text-align:center;top:24px;font-size:13px;line-height:20px;color:#000;white-space:nowrap;">14</div>
<div style="position:absolute;left:299px;top:24px;width:1px;height:18px;background:#d0d0d0"></div>
<div style="position:absolute;left:279.5px;width:20px;text-align:center;top:24px;font-size:13px;line-height:20px;color:#000;white-space:nowrap;">15</div>
<div style="position:absolute;left:319px;top:24px;width:1px;height:18px;background:#d0d0d0"></div>
<div style="position:absolute;left:299.5px;width:20px;text-align:center;top:24px;font-size:13px;line-height:20px;color:#000;white-space:nowrap;">16</div>
<div style="position:absolute;left:339px;top:24px;width:1px;height:18px;background:#d0d0d0"></div>
<div style="position:absolute;left:319.5px;width:20px;text-align:center;top:24px;font-size:13px;line-height:20px;color:#000;white-space:nowrap;">17</div>
<div style="position:absolute;left:359px;top:24px;width:1px;height:18px;background:#d0d0d0"></div>
<div style="position:absolute;left:339.5px;width:20px;text-align:center;top:24px;font-size:13px;line-height:20px;color:#000;white-space:nowrap;">18</div>
<div style="position:absolute;left:379px;top:24px;width:1px;height:18px;background:#d0d0d0"></div>
<div style="position:absolute;left:359.5px;width:20px;text-align:center;top:24px;font-size:13px;line-height:20px;color:#000;white-space:nowrap;">19</div>
<div style="position:absolute;left:399px;top:24px;width:1px;height:18px;background:#d0d0d0"></div>
<div style="position:absolute;left:379.5px;width:20px;text-align:center;top:24px;font-size:13px;line-height:20px;color:#000;white-space:nowrap;">20</div>
<div style="position:absolute;left:419px;top:24px;width:1px;height:18px;background:#d0d0d0"></div>
<div style="position:absolute;left:399.5px;width:20px;text-align:center;top:24px;font-size:13px;line-height:20px;color:#000;white-space:nowrap;">21</div>
<div style="position:absolute;left:439px;top:24px;width:1px;height:18px;background:#d0d0d0"></div>
<div style="position:absolute;left:419.5px;width:20px;text-align:center;top:24px;font-size:13px;line-height:20px;color:#000;white-space:nowrap;">22</div>
<div style="position:absolute;left:459px;top:24px;width:1px;height:18px;background:#d0d0d0"></div>
<div style="position:absolute;left:439.5px;width:20px;text-align:center;top:24px;font-size:13px;line-height:20px;color:#000;white-space:nowrap;">23</div>
<div style="position:absolute;left:479px;top:24px;width:1px;height:18px;background:#d0d0d0"></div>
<div style="position:absolute;left:459.5px;width:20px;text-align:center;top:24px;font-size:13px;line-height:20px;color:#000;white-space:nowrap;">24</div>
<div style="position:absolute;left:499px;top:24px;width:1px;height:18px;background:#d0d0d0"></div>
<div style="position:absolute;left:479.5px;width:20px;text-align:center;top:24px;font-size:13px;line-height:20px;color:#000;white-space:nowrap;">25</div>
<div style="position:absolute;left:519px;top:24px;width:1px;height:18px;background:#d0d0d0"></div>
<div style="position:absolute;left:499.5px;width:20px;text-align:center;top:24px;font-size:13px;line-height:20px;color:#000;white-space:nowrap;">26</div>
<div style="position:absolute;left:539px;top:24px;width:1px;height:18px;background:#d0d0d0"></div>
<div style="position:absolute;left:519.5px;width:20px;text-align:center;top:24px;font-size:13px;line-height:20px;color:#000;white-space:nowrap;">27</div>
<div style="position:absolute;left:559px;top:24px;width:1px;height:18px;background:#d0d0d0"></div>
<div style="position:absolute;left:539.5px;width:20px;text-align:center;top:24px;font-size:13px;line-height:20px;color:#000;white-space:nowrap;">28</div>
<div style="position:absolute;left:579px;top:24px;width:1px;height:18px;background:#d0d0d0"></div>
<div style="position:absolute;left:559.5px;width:20px;text-align:center;top:24px;font-size:13px;line-height:20px;color:#000;white-space:nowrap;">29</div>
<div style="position:absolute;left:599px;top:24px;width:1px;height:18px;background:#d0d0d0"></div>
<div style="position:absolute;left:579.5px;width:20px;text-align:center;top:24px;font-size:13px;line-height:20px;color:#000;white-space:nowrap;">30</div>
<div style="position:absolute;left:619px;top:24px;width:1px;height:18px;background:#d0d0d0"></div>
<div style="position:absolute;left:599.5px;width:20px;text-align:center;top:24px;font-size:13px;line-height:20px;color:#000;white-space:nowrap;">31</div>
<div style="position:absolute;left:639px;top:24px;width:1px;height:18px;background:#d0d0d0"></div>
<div style="position:absolute;left:619.5px;width:20px;text-align:center;top:24px;font-size:13px;line-height:20px;color:#000;white-space:nowrap;">1</div>
<div style="position:absolute;left:659px;top:24px;width:1px;height:18px;background:#d0d0d0"></div>
<div style="position:absolute;left:639.5px;width:20px;text-align:center;top:24px;font-size:13px;line-height:20px;color:#000;white-space:nowrap;">2</div>
<div style="position:absolute;left:679px;top:24px;width:1px;height:18px;background:#d0d0d0"></div>
<div style="position:absolute;left:659.5px;width:20px;text-align:center;top:24px;font-size:13px;line-height:20px;color:#000;white-space:nowrap;">3</div>
<div style="position:absolute;left:699px;top:24px;width:1px;height:18px;background:#d0d0d0"></div>
<div style="position:absolute;left:679.5px;width:20px;text-align:center;top:24px;font-size:13px;line-height:20px;color:#000;white-space:nowrap;">4</div>
<div style="position:absolute;left:719px;top:24px;width:1px;height:18px;background:#d0d0d0"></div>
<div style="position:absolute;left:699.5px;width:20px;text-align:center;top:24px;font-size:13px;line-height:20px;color:#000;white-space:nowrap;">5</div>
<div style="position:absolute;left:739px;top:24px;width:1px;height:18px;background:#d0d0d0"></div>
<div style="position:absolute;left:719.5px;width:20px;text-align:center;top:24px;font-size:13px;line-height:20px;color:#000;white-space:nowrap;">6</div>
<div style="position:absolute;left:759px;top:24px;width:1px;height:18px;background:#d0d0d0"></div>
<div style="position:absolute;left:739.5px;width:20px;text-align:center;top:24px;font-size:13px;line-height:20px;color:#000;white-space:nowrap;">7</div>
<div style="position:absolute;left:779px;top:24px;width:1px;height:18px;background:#d0d0d0"></div>
<div style="position:absolute;left:759.5px;width:20px;text-align:center;top:24px;font-size:13px;line-height:20px;color:#000;white-space:nowrap;">8</div>
<div style="position:absolute;left:799px;top:24px;width:1px;height:18px;background:#d0d0d0"></div>
<div style="position:absolute;left:779.5px;width:20px;text-align:center;top:24px;font-size:13px;line-height:20px;color:#000;white-space:nowrap;">9</div>
<div style="position:absolute;left:819px;top:24px;width:1px;height:18px;background:#d0d0d0"></div>
<div style="position:absolute;left:799.5px;width:20px;text-align:center;top:24px;font-size:13px;line-height:20px;color:#000;white-space:nowrap;">10</div>
<div style="position:absolute;left:839px;top:24px;width:1px;height:18px;background:#d0d0d0"></div>
<div style="position:absolute;left:819.5px;width:20px;text-align:center;top:24px;font-size:13px;line-height:20px;color:#000;white-space:nowrap;">11</div>
<div style="position:absolute;left:859px;top:24px;width:1px;height:18px;background:#d0d0d0"></div>
<div style="position:absolute;left:839.5px;width:20px;text-align:center;top:24px;font-size:13px;line-height:20px;color:#000;white-space:nowrap;">12</div>
<div style="position:absolute;left:879px;top:24px;width:1px;height:18px;background:#d0d0d0"></div>
<div style="position:absolute;left:859.5px;width:20px;text-align:center;top:24px;font-size:13px;line-height:20px;color:#000;white-space:nowrap;">13</div>
<div style="position:absolute;left:899px;top:24px;width:1px;height:18px;background:#d0d0d0"></div>
<div style="position:absolute;left:879.5px;width:20px;text-align:center;top:24px;font-size:13px;line-height:20px;color:#000;white-space:nowrap;">14</div>
<div style="position:absolute;left:919px;top:24px;width:1px;height:18px;background:#d0d0d0"></div>
<div style="position:absolute;left:899.5px;width:20px;text-align:center;top:24px;font-size:13px;line-height:20px;color:#000;white-space:nowrap;">15</div>
<div style="position:absolute;left:939px;top:24px;width:1px;height:18px;background:#d0d0d0"></div>
<div style="position:absolute;left:919.5px;width:20px;text-align:center;top:24px;font-size:13px;line-height:20px;color:#000;white-space:nowrap;">16</div>
<div style="position:absolute;left:959px;top:24px;width:1px;height:18px;background:#d0d0d0"></div>
<div style="position:absolute;left:939.5px;width:20px;text-align:center;top:24px;font-size:13px;line-height:20px;color:#000;white-space:nowrap;">17</div>
<div style="position:absolute;left:979px;top:24px;width:1px;height:18px;background:#d0d0d0"></div>
<div style="position:absolute;left:959.5px;width:20px;text-align:center;top:24px;font-size:13px;line-height:20px;color:#000;white-space:nowrap;">18</div>
<div style="position:absolute;left:999px;top:24px;width:1px;height:18px;background:#d0d0d0"></div>
<div style="position:absolute;left:979.5px;width:20px;text-align:center;top:24px;font-size:13px;line-height:20px;color:#000;white-space:nowrap;">19</div>
<div style="position:absolute;left:1019px;top:24px;width:1px;height:18px;background:#d0d0d0"></div>
<div style="position:absolute;left:999.5px;width:20px;text-align:center;top:24px;font-size:13px;line-height:20px;color:#000;white-space:nowrap;">20</div>
<div style="position:absolute;left:1039px;top:24px;width:1px;height:18px;background:#d0d0d0"></div>
<div style="position:absolute;left:1019.5px;width:20px;text-align:center;top:24px;font-size:13px;line-height:20px;color:#000;white-space:nowrap;">21</div>
<div style="position:absolute;left:1059px;top:24px;width:1px;height:18px;background:#d0d0d0"></div>
<div style="position:absolute;left:1039.5px;width:20px;text-align:center;top:24px;font-size:13px;line-height:20px;color:#000;white-space:nowrap;">22</div>
<div style="position:absolute;left:1079px;top:24px;width:1px;height:18px;background:#d0d0d0"></div>
<div style="position:absolute;left:1059.5px;width:20px;text-align:center;top:24px;font-size:13px;line-height:20px;color:#000;white-space:nowrap;">23</div>
<div style="position:absolute;left:1099px;top:24px;width:1px;height:18px;background:#d0d0d0"></div>
<div style="position:absolute;left:1079.5px;width:20px;text-align:center;top:24px;font-size:13px;line-height:20px;color:#000;white-space:nowrap;">24</div>
<div style="position:absolute;left:1119px;top:24px;width:1px;height:18px;background:#d0d0d0"></div>
<div style="position:absolute;left:1099.5px;width:20px;text-align:center;top:24px;font-size:13px;line-height:20px;color:#000;white-space:nowrap;">25</div>
<div style="position:absolute;left:1139px;top:24px;width:1px;height:18px;background:#d0d0d0"></div>
<div style="position:absolute;left:1119.5px;width:20px;text-align:center;top:24px;font-size:13px;line-height:20px;color:#000;white-space:nowrap;">26</div>
<div style="position:absolute;left:1159px;top:24px;width:1px;height:18px;background:#d0d0d0"></div>
<div style="position:absolute;left:1139.5px;width:20px;text-align:center;top:24px;font-size:13px;line-height:20px;color:#000;white-space:nowrap;">27</div>
<div style="position:absolute;left:1179px;top:24px;width:1px;height:18px;background:#d0d0d0"></div>
<div style="position:absolute;left:1159.5px;width:20px;text-align:center;top:24px;font-size:13px;line-height:20px;color:#000;white-space:nowrap;">28</div>
<div style="position:absolute;left:1199px;top:24px;width:1px;height:18px;background:#d0d0d0"></div>
<div style="position:absolute;left:1179.5px;width:20px;text-align:center;top:24px;font-size:13px;line-height:20px;color:#000;white-space:nowrap;">29</div>
<div style="position:absolute;left:1219px;top:24px;width:1px;height:18px;background:#d0d0d0"></div>
<div style="position:absolute;left:1199.5px;width:20px;text-align:center;top:24px;font-size:13px;line-height:20px;color:#000;white-space:nowrap;">30</div>
<div style="position:absolute;left:1239px;top:24px;width:1px;height:18px;background:#d0d0d0"></div>
<div style="position:absolute;left:1219.5px;width:20px;text-align:center;top:24px;font-size:13px;line-height:20px;color:#000;white-space:nowrap;">1</div>
<div style="position:absolute;left:1259px;top:24px;width:1px;height:18px;background:#d0d0d0"></div>
<div style="position:absolute;left:1239.5px;width:20px;text-align:center;top:24px;font-size:13px;line-height:20px;color:#000;white-space:nowrap;">2</div>
<div style="position:absolute;left:1279px;top:24px;width:1px;height:18px;background:#d0d0d0"></div>
<div style="position:absolute;left:1259.5px;width:20px;text-align:center;top:24px;font-size:13px;line-height:20px;color:#000;white-space:nowrap;">3</div>
<div style="position:absolute;left:1299px;top:24px;width:1px;height:18px;background:#d0d0d0"></div>
<div style="position:absolute;left:1279.5px;width:20px;text-align:center;top:24px;font-size:13px;line-height:20px;color:#000;white-space:nowrap;">4</div>
<div style="position:absolute;left:1319px;top:24px;width:1px;height:18px;background:#d0d0d0"></div>
<div style="position:absolute;left:1299.5px;width:20px;text-align:center;top:24px;font-size:13px;line-height:20px;color:#000;white-space:nowrap;">5</div>
<div style="position:absolute;left:1339px;top:24px;width:1px;height:18px;background:#d0d0d0"></div>
<div style="position:absolute;left:1319.5px;width:20px;text-align:center;top:24px;font-size:13px;line-height:20px;color:#000;white-space:nowrap;">6</div>
<div style="position:absolute;left:1359px;top:24px;width:1px;height:18px;background:#d0d0d0"></div>
<div style="position:absolute;left:1339.5px;width:20px;text-align:center;top:24px;font-size:13px;line-height:20px;color:#000;white-space:nowrap;">7</div>
<div style="position:absolute;left:1379px;top:24px;width:1px;height:18px;background:#d0d0d0"></div>
<div style="position:absolute;left:1359.5px;width:20px;text-align:center;top:24px;font-size:13px;line-height:20px;color:#000;white-space:nowrap;">8</div>
<div style="position:absolute;left:1399px;top:24px;width:1px;height:18px;background:#d0d0d0"></div>
<div style="position:absolute;left:1379.5px;width:20px;text-align:center;top:24px;font-size:13px;line-height:20px;color:#000;white-space:nowrap;">9</div>
<div style="position:absolute;left:1419px;top:24px;width:1px;height:18px;background:#d0d0d0"></div>
<div style="position:absolute;left:1399.5px;width:20px;text-align:center;top:24px;font-size:13px;line-height:20px;color:#000;white-space:nowrap;">10</div>
<div style="position:absolute;left:1439px;top:24px;width:1px;height:18px;background:#d0d0d0"></div>
<div style="position:absolute;left:1419.5px;width:20px;text-align:center;top:24px;font-size:13px;line-height:20px;color:#000;white-space:nowrap;">11</div>
<div style="position:absolute;left:1459px;top:24px;width:1px;height:18px;background:#d0d0d0"></div>
<div style="position:absolute;left:1439.5px;width:20px;text-align:center;top:24px;font-size:13px;line-height:20px;color:#000;white-space:nowrap;">12</div>
<div style="position:absolute;left:0px;top:45px;width:1500px;height:25px;background:#ffe28d"></div>
<div style="position:absolute;left:0px;top:69px;width:1500px;height:1px;background:repeating-linear-gradient(90deg,#c8c8c8 0 1px,transparent 1px 3px)"></div>
<div style="position:absolute;left:0px;top:70px;width:1500px;height:25px;background:#f3f3f3"></div>
<div style="position:absolute;left:0px;top:70px;width:19px;height:25px;background:#e4e4e4"></div>
<div style="position:absolute;left:120px;top:70px;width:19px;height:25px;background:#e4e4e4"></div>
<div style="position:absolute;left:140px;top:70px;width:19px;height:25px;background:#e4e4e4"></div>
<div style="position:absolute;left:260px;top:70px;width:19px;height:25px;background:#e4e4e4"></div>
<div style="position:absolute;left:280px;top:70px;width:19px;height:25px;background:#e4e4e4"></div>
<div style="position:absolute;left:400px;top:70px;width:19px;height:25px;background:#e4e4e4"></div>
<div style="position:absolute;left:420px;top:70px;width:19px;height:25px;background:#e4e4e4"></div>
<div style="position:absolute;left:540px;top:70px;width:19px;height:25px;background:#e4e4e4"></div>
<div style="position:absolute;left:560px;top:70px;width:19px;height:25px;background:#e4e4e4"></div>
<div style="position:absolute;left:680px;top:70px;width:19px;height:25px;background:#e4e4e4"></div>
<div style="position:absolute;left:700px;top:70px;width:19px;height:25px;background:#e4e4e4"></div>
<div style="position:absolute;left:820px;top:70px;width:19px;height:25px;background:#e4e4e4"></div>
<div style="position:absolute;left:840px;top:70px;width:19px;height:25px;background:#e4e4e4"></div>
<div style="position:absolute;left:960px;top:70px;width:19px;height:25px;background:#e4e4e4"></div>
<div style="position:absolute;left:980px;top:70px;width:19px;height:25px;background:#e4e4e4"></div>
<div style="position:absolute;left:1100px;top:70px;width:19px;height:25px;background:#e4e4e4"></div>
<div style="position:absolute;left:1120px;top:70px;width:19px;height:25px;background:#e4e4e4"></div>
<div style="position:absolute;left:1240px;top:70px;width:19px;height:25px;background:#e4e4e4"></div>
<div style="position:absolute;left:1260px;top:70px;width:19px;height:25px;background:#e4e4e4"></div>
<div style="position:absolute;left:1380px;top:70px;width:19px;height:25px;background:#e4e4e4"></div>
<div style="position:absolute;left:1400px;top:70px;width:19px;height:25px;background:#e4e4e4"></div>
<div style="position:absolute;left:0px;top:94px;width:1500px;height:1px;background:repeating-linear-gradient(90deg,#c8c8c8 0 1px,transparent 1px 3px)"></div>
<div style="position:absolute;left:0px;top:95px;width:1500px;height:25px;background:#fff"></div>
<div style="position:absolute;left:0px;top:95px;width:19px;height:25px;background:#e4e4e4"></div>
<div style="position:absolute;left:120px;top:95px;width:19px;height:25px;background:#e4e4e4"></div>
<div style="position:absolute;left:140px;top:95px;width:19px;height:25px;background:#e4e4e4"></div>
<div style="position:absolute;left:260px;top:95px;width:19px;height:25px;background:#e4e4e4"></div>
<div style="position:absolute;left:280px;top:95px;width:19px;height:25px;background:#e4e4e4"></div>
<div style="position:absolute;left:400px;top:95px;width:19px;height:25px;background:#e4e4e4"></div>
<div style="position:absolute;left:420px;top:95px;width:19px;height:25px;background:#e4e4e4"></div>
<div style="position:absolute;left:540px;top:95px;width:19px;height:25px;background:#e4e4e4"></div>
<div style="position:absolute;left:560px;top:95px;width:19px;height:25px;background:#e4e4e4"></div>
<div style="position:absolute;left:680px;top:95px;width:19px;height:25px;background:#e4e4e4"></div>
<div style="position:absolute;left:700px;top:95px;width:19px;height:25px;background:#e4e4e4"></div>
<div style="position:absolute;left:820px;top:95px;width:19px;height:25px;background:#e4e4e4"></div>
<div style="position:absolute;left:840px;top:95px;width:19px;height:25px;background:#e4e4e4"></div>
<div style="position:absolute;left:960px;top:95px;width:19px;height:25px;background:#e4e4e4"></div>
<div style="position:absolute;left:980px;top:95px;width:19px;height:25px;background:#e4e4e4"></div>
<div style="position:absolute;left:1100px;top:95px;width:19px;height:25px;background:#e4e4e4"></div>
<div style="position:absolute;left:1120px;top:95px;width:19px;height:25px;background:#e4e4e4"></div>
<div style="position:absolute;left:1240px;top:95px;width:19px;height:25px;background:#e4e4e4"></div>
<div style="position:absolute;left:1260px;top:95px;width:19px;height:25px;background:#e4e4e4"></div>
<div style="position:absolute;left:1380px;top:95px;width:19px;height:25px;background:#e4e4e4"></div>
<div style="position:absolute;left:1400px;top:95px;width:19px;height:25px;background:#e4e4e4"></div>
<div style="position:absolute;left:0px;top:119px;width:1500px;height:1px;background:repeating-linear-gradient(90deg,#c8c8c8 0 1px,transparent 1px 3px)"></div>
<div style="position:absolute;left:0px;top:120px;width:1500px;height:25px;background:#f3f3f3"></div>
<div style="position:absolute;left:0px;top:120px;width:19px;height:25px;background:#e4e4e4"></div>
<div style="position:absolute;left:120px;top:120px;width:19px;height:25px;background:#e4e4e4"></div>
<div style="position:absolute;left:140px;top:120px;width:19px;height:25px;background:#e4e4e4"></div>
<div style="position:absolute;left:260px;top:120px;width:19px;height:25px;background:#e4e4e4"></div>
<div style="position:absolute;left:280px;top:120px;width:19px;height:25px;background:#e4e4e4"></div>
<div style="position:absolute;left:400px;top:120px;width:19px;height:25px;background:#e4e4e4"></div>
<div style="position:absolute;left:420px;top:120px;width:19px;height:25px;background:#e4e4e4"></div>
<div style="position:absolute;left:540px;top:120px;width:19px;height:25px;background:#e4e4e4"></div>
<div style="position:absolute;left:560px;top:120px;width:19px;height:25px;background:#e4e4e4"></div>
<div style="position:absolute;left:680px;top:120px;width:19px;height:25px;background:#e4e4e4"></div>
<div style="position:absolute;left:700px;top:120px;width:19px;height:25px;background:#e4e4e4"></div>
<div style="position:absolute;left:820px;top:120px;width:19px;height:25px;background:#e4e4e4"></div>
<div style="position:absolute;left:840px;top:120px;width:19px;height:25px;background:#e4e4e4"></div>
<div style="position:absolute;left:960px;top:120px;width:19px;height:25px;background:#e4e4e4"></div>
<div style="position:absolute;left:980px;top:120px;width:19px;height:25px;background:#e4e4e4"></div>
<div style="position:absolute;left:1100px;top:120px;width:19px;height:25px;background:#e4e4e4"></div>
<div style="position:absolute;left:1120px;top:120px;width:19px;height:25px;background:#e4e4e4"></div>
<div style="position:absolute;left:1240px;top:120px;width:19px;height:25px;background:#e4e4e4"></div>
<div style="position:absolute;left:1260px;top:120px;width:19px;height:25px;background:#e4e4e4"></div>
<div style="position:absolute;left:1380px;top:120px;width:19px;height:25px;background:#e4e4e4"></div>
<div style="position:absolute;left:1400px;top:120px;width:19px;height:25px;background:#e4e4e4"></div>
<div style="position:absolute;left:0px;top:144px;width:1500px;height:1px;background:repeating-linear-gradient(90deg,#c8c8c8 0 1px,transparent 1px 3px)"></div>
<div style="position:absolute;left:0px;top:145px;width:1500px;height:25px;background:#fff"></div>
<div style="position:absolute;left:0px;top:145px;width:19px;height:25px;background:#e4e4e4"></div>
<div style="position:absolute;left:120px;top:145px;width:19px;height:25px;background:#e4e4e4"></div>
<div style="position:absolute;left:140px;top:145px;width:19px;height:25px;background:#e4e4e4"></div>
<div style="position:absolute;left:260px;top:145px;width:19px;height:25px;background:#e4e4e4"></div>
<div style="position:absolute;left:280px;top:145px;width:19px;height:25px;background:#e4e4e4"></div>
<div style="position:absolute;left:400px;top:145px;width:19px;height:25px;background:#e4e4e4"></div>
<div style="position:absolute;left:420px;top:145px;width:19px;height:25px;background:#e4e4e4"></div>
<div style="position:absolute;left:540px;top:145px;width:19px;height:25px;background:#e4e4e4"></div>
<div style="position:absolute;left:560px;top:145px;width:19px;height:25px;background:#e4e4e4"></div>
<div style="position:absolute;left:680px;top:145px;width:19px;height:25px;background:#e4e4e4"></div>
<div style="position:absolute;left:700px;top:145px;width:19px;height:25px;background:#e4e4e4"></div>
<div style="position:absolute;left:820px;top:145px;width:19px;height:25px;background:#e4e4e4"></div>
<div style="position:absolute;left:840px;top:145px;width:19px;height:25px;background:#e4e4e4"></div>
<div style="position:absolute;left:960px;top:145px;width:19px;height:25px;background:#e4e4e4"></div>
<div style="position:absolute;left:980px;top:145px;width:19px;height:25px;background:#e4e4e4"></div>
<div style="position:absolute;left:1100px;top:145px;width:19px;height:25px;background:#e4e4e4"></div>
<div style="position:absolute;left:1120px;top:145px;width:19px;height:25px;background:#e4e4e4"></div>
<div style="position:absolute;left:1240px;top:145px;width:19px;height:25px;background:#e4e4e4"></div>
<div style="position:absolute;left:1260px;top:145px;width:19px;height:25px;background:#e4e4e4"></div>
<div style="position:absolute;left:1380px;top:145px;width:19px;height:25px;background:#e4e4e4"></div>
<div style="position:absolute;left:1400px;top:145px;width:19px;height:25px;background:#e4e4e4"></div>
<div style="position:absolute;left:0px;top:169px;width:1500px;height:1px;background:repeating-linear-gradient(90deg,#c8c8c8 0 1px,transparent 1px 3px)"></div>
<div style="position:absolute;left:0px;top:170px;width:1500px;height:25px;background:#f3f3f3"></div>
<div style="position:absolute;left:0px;top:170px;width:19px;height:25px;background:#e4e4e4"></div>
<div style="position:absolute;left:120px;top:170px;width:19px;height:25px;background:#e4e4e4"></div>
<div style="position:absolute;left:140px;top:170px;width:19px;height:25px;background:#e4e4e4"></div>
<div style="position:absolute;left:260px;top:170px;width:19px;height:25px;background:#e4e4e4"></div>
<div style="position:absolute;left:280px;top:170px;width:19px;height:25px;background:#e4e4e4"></div>
<div style="position:absolute;left:400px;top:170px;width:19px;height:25px;background:#e4e4e4"></div>
<div style="position:absolute;left:420px;top:170px;width:19px;height:25px;background:#e4e4e4"></div>
<div style="position:absolute;left:540px;top:170px;width:19px;height:25px;background:#e4e4e4"></div>
<div style="position:absolute;left:560px;top:170px;width:19px;height:25px;background:#e4e4e4"></div>
<div style="position:absolute;left:680px;top:170px;width:19px;height:25px;background:#e4e4e4"></div>
<div style="position:absolute;left:700px;top:170px;width:19px;height:25px;background:#e4e4e4"></div>
<div style="position:absolute;left:820px;top:170px;width:19px;height:25px;background:#e4e4e4"></div>
<div style="position:absolute;left:840px;top:170px;width:19px;height:25px;background:#e4e4e4"></div>
<div style="position:absolute;left:960px;top:170px;width:19px;height:25px;background:#e4e4e4"></div>
<div style="position:absolute;left:980px;top:170px;width:19px;height:25px;background:#e4e4e4"></div>
<div style="position:absolute;left:1100px;top:170px;width:19px;height:25px;background:#e4e4e4"></div>
<div style="position:absolute;left:1120px;top:170px;width:19px;height:25px;background:#e4e4e4"></div>
<div style="position:absolute;left:1240px;top:170px;width:19px;height:25px;background:#e4e4e4"></div>
<div style="position:absolute;left:1260px;top:170px;width:19px;height:25px;background:#e4e4e4"></div>
<div style="position:absolute;left:1380px;top:170px;width:19px;height:25px;background:#e4e4e4"></div>
<div style="position:absolute;left:1400px;top:170px;width:19px;height:25px;background:#e4e4e4"></div>
<div style="position:absolute;left:0px;top:194px;width:1500px;height:1px;background:repeating-linear-gradient(90deg,#c8c8c8 0 1px,transparent 1px 3px)"></div>
<div style="position:absolute;left:0px;top:195px;width:1500px;height:25px;background:#fff"></div>
<div style="position:absolute;left:0px;top:195px;width:19px;height:25px;background:#e4e4e4"></div>
<div style="position:absolute;left:120px;top:195px;width:19px;height:25px;background:#e4e4e4"></div>
<div style="position:absolute;left:140px;top:195px;width:19px;height:25px;background:#e4e4e4"></div>
<div style="position:absolute;left:260px;top:195px;width:19px;height:25px;background:#e4e4e4"></div>
<div style="position:absolute;left:280px;top:195px;width:19px;height:25px;background:#e4e4e4"></div>
<div style="position:absolute;left:400px;top:195px;width:19px;height:25px;background:#e4e4e4"></div>
<div style="position:absolute;left:420px;top:195px;width:19px;height:25px;background:#e4e4e4"></div>
<div style="position:absolute;left:540px;top:195px;width:19px;height:25px;background:#e4e4e4"></div>
<div style="position:absolute;left:560px;top:195px;width:19px;height:25px;background:#e4e4e4"></div>
<div style="position:absolute;left:680px;top:195px;width:19px;height:25px;background:#e4e4e4"></div>
<div style="position:absolute;left:700px;top:195px;width:19px;height:25px;background:#e4e4e4"></div>
<div style="position:absolute;left:820px;top:195px;width:19px;height:25px;background:#e4e4e4"></div>
<div style="position:absolute;left:840px;top:195px;width:19px;height:25px;background:#e4e4e4"></div>
<div style="position:absolute;left:960px;top:195px;width:19px;height:25px;background:#e4e4e4"></div>
<div style="position:absolute;left:980px;top:195px;width:19px;height:25px;background:#e4e4e4"></div>
<div style="position:absolute;left:1100px;top:195px;width:19px;height:25px;background:#e4e4e4"></div>
<div style="position:absolute;left:1120px;top:195px;width:19px;height:25px;background:#e4e4e4"></div>
<div style="position:absolute;left:1240px;top:195px;width:19px;height:25px;background:#e4e4e4"></div>
<div style="position:absolute;left:1260px;top:195px;width:19px;height:25px;background:#e4e4e4"></div>
<div style="position:absolute;left:1380px;top:195px;width:19px;height:25px;background:#e4e4e4"></div>
<div style="position:absolute;left:1400px;top:195px;width:19px;height:25px;background:#e4e4e4"></div>
<div style="position:absolute;left:0px;top:219px;width:1500px;height:1px;background:repeating-linear-gradient(90deg,#c8c8c8 0 1px,transparent 1px 3px)"></div>
<div style="position:absolute;left:19px;top:45px;width:1px;height:175px;background:#d0d0d0"></div>
<div style="position:absolute;left:39px;top:45px;width:1px;height:175px;background:#d0d0d0"></div>
<div style="position:absolute;left:59px;top:45px;width:1px;height:175px;background:#d0d0d0"></div>
<div style="position:absolute;left:79px;top:45px;width:1px;height:175px;background:#d0d0d0"></div>
<div style="position:absolute;left:99px;top:45px;width:1px;height:175px;background:#d0d0d0"></div>
<div style="position:absolute;left:119px;top:45px;width:1px;height:175px;background:#d0d0d0"></div>
<div style="position:absolute;left:139px;top:45px;width:1px;height:175px;background:#d0d0d0"></div>
<div style="position:absolute;left:159px;top:45px;width:1px;height:175px;background:#d0d0d0"></div>
<div style="position:absolute;left:179px;top:45px;width:1px;height:175px;background:#d0d0d0"></div>
<div style="position:absolute;left:199px;top:45px;width:1px;height:175px;background:#d0d0d0"></div>
<div style="position:absolute;left:219px;top:45px;width:1px;height:175px;background:#d0d0d0"></div>
<div style="position:absolute;left:239px;top:45px;width:1px;height:175px;background:#d0d0d0"></div>
<div style="position:absolute;left:259px;top:45px;width:1px;height:175px;background:#d0d0d0"></div>
<div style="position:absolute;left:279px;top:45px;width:1px;height:175px;background:#d0d0d0"></div>
<div style="position:absolute;left:299px;top:45px;width:1px;height:175px;background:#d0d0d0"></div>
<div style="position:absolute;left:319px;top:45px;width:1px;height:175px;background:#d0d0d0"></div>
<div style="position:absolute;left:339px;top:45px;width:1px;height:175px;background:#d0d0d0"></div>
<div style="position:absolute;left:359px;top:45px;width:1px;height:175px;background:#d0d0d0"></div>
<div style="position:absolute;left:379px;top:45px;width:1px;height:175px;background:#d0d0d0"></div>
<div style="position:absolute;left:399px;top:45px;width:1px;height:175px;background:#d0d0d0"></div>
<div style="position:absolute;left:419px;top:45px;width:1px;height:175px;background:#d0d0d0"></div>
<div style="position:absolute;left:439px;top:45px;width:1px;height:175px;background:#d0d0d0"></div>
<div style="position:absolute;left:459px;top:45px;width:1px;height:175px;background:#d0d0d0"></div>
<div style="position:absolute;left:479px;top:45px;width:1px;height:175px;background:#d0d0d0"></div>
<div style="position:absolute;left:499px;top:45px;width:1px;height:175px;background:#d0d0d0"></div>
<div style="position:absolute;left:519px;top:45px;width:1px;height:175px;background:#d0d0d0"></div>
<div style="position:absolute;left:539px;top:45px;width:1px;height:175px;background:#d0d0d0"></div>
<div style="position:absolute;left:559px;top:45px;width:1px;height:175px;background:#d0d0d0"></div>
<div style="position:absolute;left:579px;top:45px;width:1px;height:175px;background:#d0d0d0"></div>
<div style="position:absolute;left:599px;top:45px;width:1px;height:175px;background:#d0d0d0"></div>
<div style="position:absolute;left:619px;top:45px;width:1px;height:175px;background:#d0d0d0"></div>
<div style="position:absolute;left:639px;top:45px;width:1px;height:175px;background:#d0d0d0"></div>
<div style="position:absolute;left:659px;top:45px;width:1px;height:175px;background:#d0d0d0"></div>
<div style="position:absolute;left:679px;top:45px;width:1px;height:175px;background:#d0d0d0"></div>
<div style="position:absolute;left:699px;top:45px;width:1px;height:175px;background:#d0d0d0"></div>
<div style="position:absolute;left:719px;top:45px;width:1px;height:175px;background:#d0d0d0"></div>
<div style="position:absolute;left:739px;top:45px;width:1px;height:175px;background:#d0d0d0"></div>
<div style="position:absolute;left:759px;top:45px;width:1px;height:175px;background:#d0d0d0"></div>
<div style="position:absolute;left:779px;top:45px;width:1px;height:175px;background:#d0d0d0"></div>
<div style="position:absolute;left:799px;top:45px;width:1px;height:175px;background:#d0d0d0"></div>
<div style="position:absolute;left:819px;top:45px;width:1px;height:175px;background:#d0d0d0"></div>
<div style="position:absolute;left:839px;top:45px;width:1px;height:175px;background:#d0d0d0"></div>
<div style="position:absolute;left:859px;top:45px;width:1px;height:175px;background:#d0d0d0"></div>
<div style="position:absolute;left:879px;top:45px;width:1px;height:175px;background:#d0d0d0"></div>
<div style="position:absolute;left:899px;top:45px;width:1px;height:175px;background:#d0d0d0"></div>
<div style="position:absolute;left:919px;top:45px;width:1px;height:175px;background:#d0d0d0"></div>
<div style="position:absolute;left:939px;top:45px;width:1px;height:175px;background:#d0d0d0"></div>
<div style="position:absolute;left:959px;top:45px;width:1px;height:175px;background:#d0d0d0"></div>
<div style="position:absolute;left:979px;top:45px;width:1px;height:175px;background:#d0d0d0"></div>
<div style="position:absolute;left:999px;top:45px;width:1px;height:175px;background:#d0d0d0"></div>
<div style="position:absolute;left:1019px;top:45px;width:1px;height:175px;background:#d0d0d0"></div>
<div style="position:absolute;left:1039px;top:45px;width:1px;height:175px;background:#d0d0d0"></div>
<div style="position:absolute;left:1059px;top:45px;width:1px;height:175px;background:#d0d0d0"></div>
<div style="position:absolute;left:1079px;top:45px;width:1px;height:175px;background:#d0d0d0"></div>
<div style="position:absolute;left:1099px;top:45px;width:1px;height:175px;background:#d0d0d0"></div>
<div style="position:absolute;left:1119px;top:45px;width:1px;height:175px;background:#d0d0d0"></div>
<div style="position:absolute;left:1139px;top:45px;width:1px;height:175px;background:#d0d0d0"></div>
<div style="position:absolute;left:1159px;top:45px;width:1px;height:175px;background:#d0d0d0"></div>
<div style="position:absolute;left:1179px;top:45px;width:1px;height:175px;background:#d0d0d0"></div>
<div style="position:absolute;left:1199px;top:45px;width:1px;height:175px;background:#d0d0d0"></div>
<div style="position:absolute;left:1219px;top:45px;width:1px;height:175px;background:#d0d0d0"></div>
<div style="position:absolute;left:1239px;top:45px;width:1px;height:175px;background:#d0d0d0"></div>
<div style="position:absolute;left:1259px;top:45px;width:1px;height:175px;background:#d0d0d0"></div>
<div style="position:absolute;left:1279px;top:45px;width:1px;height:175px;background:#d0d0d0"></div>
<div style="position:absolute;left:1299px;top:45px;width:1px;height:175px;background:#d0d0d0"></div>
<div style="position:absolute;left:1319px;top:45px;width:1px;height:175px;background:#d0d0d0"></div>
<div style="position:absolute;left:1339px;top:45px;width:1px;height:175px;background:#d0d0d0"></div>
<div style="position:absolute;left:1359px;top:45px;width:1px;height:175px;background:#d0d0d0"></div>
<div style="position:absolute;left:1379px;top:45px;width:1px;height:175px;background:#d0d0d0"></div>
<div style="position:absolute;left:1399px;top:45px;width:1px;height:175px;background:#d0d0d0"></div>
<div style="position:absolute;left:1419px;top:45px;width:1px;height:175px;background:#d0d0d0"></div>
<div style="position:absolute;left:1439px;top:45px;width:1px;height:175px;background:#d0d0d0"></div>
<div style="position:absolute;left:1459px;top:45px;width:1px;height:175px;background:#d0d0d0"></div>
<div style="position:absolute;left:1420px;top:150px;width:60px;height:13px;background:#4646ee;"></div>
<div style="position:absolute;left:1220px;top:175px;width:100px;height:13px;background:#4646ee;"></div>
<div style="position:absolute;left:1317px;top:176px;width:2px;height:11px;background:#a8b8f0"></div>
<div style="position:absolute;left:1420px;top:175px;width:60px;height:13px;background:#4646ee;"></div>
<div style="position:absolute;left:1280px;top:200px;width:200px;height:13px;background:#4646ee;"></div>
<div style="position:absolute;left:1360px;top:200px;width:10px;height:13px;background:#ff0000"></div>
<div style="position:absolute;left:1370px;top:200px;width:9px;height:13px;background:#1010ff"></div>
</div>
<div style="position:absolute;left:1890px;top:421px;width:15px;height:225px;background:#fafafa"></div>
<div style="position:absolute;left:1890px;top:463px;width:15px;height:1px;background:#d4d4d4"></div>
<svg style="position:absolute;left:1890px;top:420px" width="15" height="226">
<g fill="#8a8a8a" stroke="#8a8a8a" stroke-width="1.2" stroke-linejoin="round">
<path d="M3.6 14.6 L7.5 8.6 L11.4 14.6Z"/><path d="M3.6 30.4 L7.5 36.4 L11.4 30.4Z"/>
<path d="M3.6 59.6 L7.5 53.6 L11.4 59.6Z"/>
<path d="M3.6 196.4 L7.5 202.4 L11.4 196.4Z"/>
</g>
<rect x="3" y="67" width="9" height="43" rx="4.5" fill="#8c8c8c"/>
</svg>
<div style="position:absolute;left:434px;top:631px;width:1456px;height:15px;background:#fafafa"></div>
<svg style="position:absolute;left:434px;top:632px" width="1456" height="13"><path d="M8 6.5 L15 2 V11Z" fill="#8a8a8a"/><rect x="23" y="2" width="978" height="9.5" rx="4.75" fill="#8c8c8c"/><path d="M1449 6.5 L1442 2 V11Z" fill="#8a8a8a"/></svg>
<div style="position:absolute;left:37px;top:683px;width:1869px;height:49px;background:linear-gradient(#fafafa,#eeeeee)"></div>
<div style="position:absolute;left:37px;top:732px;width:1869px;height:1px;background:#d6d6d6"></div>
<div style="position:absolute;left:66px;top:683px;width:1px;height:49px;background:repeating-linear-gradient(180deg,#c4c4c4 0 1px,transparent 1px 3px)"></div>
<div style="position:absolute;left:111px;top:683px;width:1px;height:49px;background:repeating-linear-gradient(180deg,#c4c4c4 0 1px,transparent 1px 3px)"></div>
<div style="position:absolute;left:71px;top:698px;font-size:12px;line-height:20px;color:#000;white-space:nowrap;">人员</div>
<div style="position:absolute;left:187px;top:683px;width:1px;height:49px;background:repeating-linear-gradient(180deg,#c4c4c4 0 1px,transparent 1px 3px)"></div>
<div style="position:absolute;left:107.0px;width:85px;text-align:center;top:698px;font-size:12px;line-height:20px;color:#000;white-space:nowrap;">计划开始日</div>
<div style="position:absolute;left:263px;top:683px;width:1px;height:49px;background:repeating-linear-gradient(180deg,#c4c4c4 0 1px,transparent 1px 3px)"></div>
<div style="position:absolute;left:183.0px;width:85px;text-align:center;top:698px;font-size:12px;line-height:20px;color:#000;white-space:nowrap;">计划完成日</div>
<div style="position:absolute;left:344px;top:683px;width:1px;height:49px;background:repeating-linear-gradient(180deg,#c4c4c4 0 1px,transparent 1px 3px)"></div>
<div style="position:absolute;left:259.0px;width:90px;text-align:center;top:698px;font-size:12px;line-height:20px;color:#000;white-space:nowrap;">总计划工作日</div>
<div style="position:absolute;left:413px;top:683px;width:1px;height:49px;background:repeating-linear-gradient(180deg,#c4c4c4 0 1px,transparent 1px 3px)"></div>
<div style="position:absolute;left:340.0px;width:78px;text-align:center;top:698px;font-size:12px;line-height:20px;color:#000;white-space:nowrap;">总计划工日</div>
<div style="position:absolute;left:481px;top:683px;width:1px;height:49px;background:repeating-linear-gradient(180deg,#c4c4c4 0 1px,transparent 1px 3px)"></div>
<div style="position:absolute;left:409.0px;width:77px;text-align:center;top:698px;font-size:12px;line-height:20px;color:#000;white-space:nowrap;">总Buff日数</div>
<div style="position:absolute;left:639px;top:683px;width:1px;height:49px;background:repeating-linear-gradient(180deg,#c4c4c4 0 1px,transparent 1px 3px)"></div>
<div style="position:absolute;left:480.5px;width:160px;text-align:center;top:686px;font-size:12px;line-height:20px;color:#000;white-space:nowrap;">2023-10</div>
<div style="position:absolute;left:482px;top:708px;width:157px;height:1px;background:repeating-linear-gradient(90deg,#c4c4c4 0 1px,transparent 1px 3px)"></div>
<div style="position:absolute;left:526px;top:708px;width:1px;height:24px;background:repeating-linear-gradient(180deg,#c4c4c4 0 1px,transparent 1px 3px)"></div>
<div style="position:absolute;left:479.0px;width:50px;text-align:center;top:711px;font-size:12px;line-height:20px;color:#000;white-space:nowrap;">工作日</div>
<div style="position:absolute;left:583px;top:708px;width:1px;height:24px;background:repeating-linear-gradient(180deg,#c4c4c4 0 1px,transparent 1px 3px)"></div>
<div style="position:absolute;left:524.0px;width:62px;text-align:center;top:711px;font-size:12px;line-height:20px;color:#000;white-space:nowrap;">计划工日</div>
<div style="position:absolute;left:581.0px;width:61px;text-align:center;top:711px;font-size:12px;line-height:20px;color:#000;white-space:nowrap;">buff日数</div>
<div style="position:absolute;left:797px;top:683px;width:1px;height:49px;background:repeating-linear-gradient(180deg,#c4c4c4 0 1px,transparent 1px 3px)"></div>
<div style="position:absolute;left:638.5px;width:160px;text-align:center;top:686px;font-size:12px;line-height:20px;color:#000;white-space:nowrap;">2023-11</div>
<div style="position:absolute;left:640px;top:708px;width:157px;height:1px;background:repeating-linear-gradient(90deg,#c4c4c4 0 1px,transparent 1px 3px)"></div>
<div style="position:absolute;left:684px;top:708px;width:1px;height:24px;background:repeating-linear-gradient(180deg,#c4c4c4 0 1px,transparent 1px 3px)"></div>
<div style="position:absolute;left:637.0px;width:50px;text-align:center;top:711px;font-size:12px;line-height:20px;color:#000;white-space:nowrap;">工作日</div>
<div style="position:absolute;left:741px;top:708px;width:1px;height:24px;background:repeating-linear-gradient(180deg,#c4c4c4 0 1px,transparent 1px 3px)"></div>
<div style="position:absolute;left:682.0px;width:62px;text-align:center;top:711px;font-size:12px;line-height:20px;color:#000;white-space:nowrap;">计划工日</div>
<div style="position:absolute;left:739.0px;width:61px;text-align:center;top:711px;font-size:12px;line-height:20px;color:#000;white-space:nowrap;">buff日数</div>
<div style="position:absolute;left:955px;top:683px;width:1px;height:49px;background:repeating-linear-gradient(180deg,#c4c4c4 0 1px,transparent 1px 3px)"></div>
<div style="position:absolute;left:796.5px;width:160px;text-align:center;top:686px;font-size:12px;line-height:20px;color:#000;white-space:nowrap;">2023-12</div>
<div style="position:absolute;left:798px;top:708px;width:157px;height:1px;background:repeating-linear-gradient(90deg,#c4c4c4 0 1px,transparent 1px 3px)"></div>
<div style="position:absolute;left:842px;top:708px;width:1px;height:24px;background:repeating-linear-gradient(180deg,#c4c4c4 0 1px,transparent 1px 3px)"></div>
<div style="position:absolute;left:795.0px;width:50px;text-align:center;top:711px;font-size:12px;line-height:20px;color:#000;white-space:nowrap;">工作日</div>
<div style="position:absolute;left:899px;top:708px;width:1px;height:24px;background:repeating-linear-gradient(180deg,#c4c4c4 0 1px,transparent 1px 3px)"></div>
<div style="position:absolute;left:840.0px;width:62px;text-align:center;top:711px;font-size:12px;line-height:20px;color:#000;white-space:nowrap;">计划工日</div>
<div style="position:absolute;left:897.0px;width:61px;text-align:center;top:711px;font-size:12px;line-height:20px;color:#000;white-space:nowrap;">buff日数</div>
<div style="position:absolute;left:1113px;top:683px;width:1px;height:49px;background:repeating-linear-gradient(180deg,#c4c4c4 0 1px,transparent 1px 3px)"></div>
<div style="position:absolute;left:954.5px;width:160px;text-align:center;top:686px;font-size:12px;line-height:20px;color:#000;white-space:nowrap;">2024-01</div>
<div style="position:absolute;left:956px;top:708px;width:157px;height:1px;background:repeating-linear-gradient(90deg,#c4c4c4 0 1px,transparent 1px 3px)"></div>
<div style="position:absolute;left:1000px;top:708px;width:1px;height:24px;background:repeating-linear-gradient(180deg,#c4c4c4 0 1px,transparent 1px 3px)"></div>
<div style="position:absolute;left:953.0px;width:50px;text-align:center;top:711px;font-size:12px;line-height:20px;color:#000;white-space:nowrap;">工作日</div>
<div style="position:absolute;left:1057px;top:708px;width:1px;height:24px;background:repeating-linear-gradient(180deg,#c4c4c4 0 1px,transparent 1px 3px)"></div>
<div style="position:absolute;left:998.0px;width:62px;text-align:center;top:711px;font-size:12px;line-height:20px;color:#000;white-space:nowrap;">计划工日</div>
<div style="position:absolute;left:1055.0px;width:61px;text-align:center;top:711px;font-size:12px;line-height:20px;color:#000;white-space:nowrap;">buff日数</div>
<div style="position:absolute;left:37px;top:733px;width:1077px;height:25px;background:#fff"></div>
<div style="position:absolute;left:37px;top:733px;width:29px;height:25px;background:linear-gradient(90deg,#f6f6f6,#ededed)"></div>
<div style="position:absolute;left:414px;top:733px;width:68px;height:25px;background:#d4e8fc"></div>
<div style="position:absolute;left:584px;top:733px;width:56px;height:25px;background:#d4e8fc"></div>
<div style="position:absolute;left:742px;top:733px;width:56px;height:25px;background:#ffffa8"></div>
<div style="position:absolute;left:900px;top:733px;width:56px;height:25px;background:#d4e8fc"></div>
<div style="position:absolute;left:956px;top:733px;width:158px;height:25px;background:#c9c9c9"></div>
<div style="position:absolute;left:37px;top:757px;width:1077px;height:1px;background:repeating-linear-gradient(90deg,#c4c4c4 0 1px,transparent 1px 3px)"></div>
<div style="position:absolute;left:66px;top:733px;width:1px;height:25px;background:repeating-linear-gradient(180deg,#c4c4c4 0 1px,transparent 1px 3px)"></div>
<div style="position:absolute;left:111px;top:733px;width:1px;height:25px;background:repeating-linear-gradient(180deg,#c4c4c4 0 1px,transparent 1px 3px)"></div>
<div style="position:absolute;left:187px;top:733px;width:1px;height:25px;background:repeating-linear-gradient(180deg,#c4c4c4 0 1px,transparent 1px 3px)"></div>
<div style="position:absolute;left:263px;top:733px;width:1px;height:25px;background:repeating-linear-gradient(180deg,#c4c4c4 0 1px,transparent 1px 3px)"></div>
<div style="position:absolute;left:344px;top:733px;width:1px;height:25px;background:repeating-linear-gradient(180deg,#c4c4c4 0 1px,transparent 1px 3px)"></div>
<div style="position:absolute;left:413px;top:733px;width:1px;height:25px;background:repeating-linear-gradient(180deg,#c4c4c4 0 1px,transparent 1px 3px)"></div>
<div style="position:absolute;left:481px;top:733px;width:1px;height:25px;background:repeating-linear-gradient(180deg,#c4c4c4 0 1px,transparent 1px 3px)"></div>
<div style="position:absolute;left:526px;top:733px;width:1px;height:25px;background:repeating-linear-gradient(180deg,#c4c4c4 0 1px,transparent 1px 3px)"></div>
<div style="position:absolute;left:583px;top:733px;width:1px;height:25px;background:repeating-linear-gradient(180deg,#c4c4c4 0 1px,transparent 1px 3px)"></div>
<div style="position:absolute;left:639px;top:733px;width:1px;height:25px;background:repeating-linear-gradient(180deg,#c4c4c4 0 1px,transparent 1px 3px)"></div>
<div style="position:absolute;left:684px;top:733px;width:1px;height:25px;background:repeating-linear-gradient(180deg,#c4c4c4 0 1px,transparent 1px 3px)"></div>
<div style="position:absolute;left:741px;top:733px;width:1px;height:25px;background:repeating-linear-gradient(180deg,#c4c4c4 0 1px,transparent 1px 3px)"></div>
<div style="position:absolute;left:797px;top:733px;width:1px;height:25px;background:repeating-linear-gradient(180deg,#c4c4c4 0 1px,transparent 1px 3px)"></div>
<div style="position:absolute;left:842px;top:733px;width:1px;height:25px;background:repeating-linear-gradient(180deg,#c4c4c4 0 1px,transparent 1px 3px)"></div>
<div style="position:absolute;left:899px;top:733px;width:1px;height:25px;background:repeating-linear-gradient(180deg,#c4c4c4 0 1px,transparent 1px 3px)"></div>
<div style="position:absolute;left:955px;top:733px;width:1px;height:25px;background:repeating-linear-gradient(180deg,#c4c4c4 0 1px,transparent 1px 3px)"></div>
<div style="position:absolute;left:1000px;top:733px;width:1px;height:25px;background:repeating-linear-gradient(180deg,#c4c4c4 0 1px,transparent 1px 3px)"></div>
<div style="position:absolute;left:1057px;top:733px;width:1px;height:25px;background:repeating-linear-gradient(180deg,#c4c4c4 0 1px,transparent 1px 3px)"></div>
<div style="position:absolute;left:1113px;top:733px;width:1px;height:25px;background:repeating-linear-gradient(180deg,#c4c4c4 0 1px,transparent 1px 3px)"></div>
<div style="position:absolute;left:37.0px;width:29px;text-align:center;top:736px;font-size:12px;line-height:20px;color:#000;white-space:nowrap;">1</div>
<svg style="position:absolute;left:71px;top:738px" width="26" height="14"><rect x="0.00" y="0.00" width="4.63" height="4.97" fill="rgb(179,175,178)"/><rect x="4.33" y="0.00" width="4.63" height="4.97" fill="rgb(138,144,144)"/><rect x="8.67" y="0.00" width="4.63" height="4.97" fill="rgb(124,130,123)"/><rect x="13.00" y="0.00" width="4.63" height="4.97" fill="rgb(175,172,173)"/><rect x="17.33" y="0.00" width="4.63" height="4.97" fill="rgb(134,132,131)"/><rect x="21.67" y="0.00" width="4.63" height="4.97" fill="rgb(175,180,174)"/><rect x="0.00" y="4.67" width="4.63" height="4.97" fill="rgb(141,143,138)"/><rect x="4.33" y="4.67" width="4.63" height="4.97" fill="rgb(149,142,148)"/><rect x="8.67" y="4.67" width="4.63" height="4.97" fill="rgb(147,149,149)"/><rect x="13.00" y="4.67" width="4.63" height="4.97" fill="rgb(146,139,140)"/><rect x="17.33" y="4.67" width="4.63" height="4.97" fill="rgb(142,138,137)"/><rect x="21.67" y="4.67" width="4.63" height="4.97" fill="rgb(166,162,160)"/><rect x="0.00" y="9.33" width="4.63" height="4.97" fill="rgb(215,217,216)"/><rect x="4.33" y="9.33" width="4.63" height="4.97" fill="rgb(216,215,217)"/><rect x="8.67" y="9.33" width="4.63" height="4.97" fill="rgb(202,202,202)"/><rect x="13.00" y="9.33" width="4.63" height="4.97" fill="rgb(214,212,214)"/><rect x="17.33" y="9.33" width="4.63" height="4.97" fill="rgb(198,197,197)"/><rect x="21.67" y="9.33" width="4.63" height="4.97" fill="rgb(196,194,195)"/></svg>
<div style="position:absolute;left:111.5px;width:76px;text-align:center;top:736px;font-size:12px;line-height:20px;color:#000;white-space:nowrap;letter-spacing:0.5px">2023-10-03</div>
<div style="position:absolute;left:187.5px;width:76px;text-align:center;top:736px;font-size:12px;line-height:20px;color:#000;white-space:nowrap;letter-spacing:0.5px">2023-12-24</div>
<div style="position:absolute;right:1572px;top:736px;font-size:12px;line-height:20px;color:#000;white-space:nowrap;">58.0</div>
<div style="position:absolute;right:1503px;top:736px;font-size:12px;line-height:20px;color:#000;white-space:nowrap;">43.0</div>
<div style="position:absolute;right:1435px;top:736px;font-size:12px;line-height:20px;color:#000;white-space:nowrap;">15.0</div>
<div style="position:absolute;right:1390px;top:736px;font-size:12px;line-height:20px;color:#000;white-space:nowrap;">21.0</div>
<div style="position:absolute;right:1333px;top:736px;font-size:12px;line-height:20px;color:#000;white-space:nowrap;">10.0</div>
<div style="position:absolute;right:1277px;top:736px;font-size:12px;line-height:20px;color:#000;white-space:nowrap;">11.0</div>
<div style="position:absolute;right:1232px;top:736px;font-size:12px;line-height:20px;color:#000;white-space:nowrap;">22.0</div>
<div style="position:absolute;right:1175px;top:736px;font-size:12px;line-height:20px;color:#000;white-space:nowrap;">24.9</div>
<div style="position:absolute;right:1119px;top:736px;font-size:12px;line-height:20px;color:#ff0000;white-space:nowrap;">-2.9</div>
<div style="position:absolute;right:1074px;top:736px;font-size:12px;line-height:20px;color:#000;white-space:nowrap;">15.0</div>
<div style="position:absolute;right:1017px;top:736px;font-size:12px;line-height:20px;color:#000;white-space:nowrap;">5.1</div>
<div style="position:absolute;right:961px;top:736px;font-size:12px;line-height:20px;color:#000;white-space:nowrap;">9.9</div>
<div style="position:absolute;left:37px;top:758px;width:1077px;height:25px;background:#f6f6f6"></div>
<div style="position:absolute;left:37px;top:758px;width:29px;height:25px;background:linear-gradient(90deg,#f6f6f6,#ededed)"></div>
<div style="position:absolute;left:414px;top:758px;width:68px;height:25px;background:#d4e8fc"></div>
<div style="position:absolute;left:584px;top:758px;width:56px;height:25px;background:#d4e8fc"></div>
<div style="position:absolute;left:742px;top:758px;width:56px;height:25px;background:#d4e8fc"></div>
<div style="position:absolute;left:900px;top:758px;width:56px;height:25px;background:#d4e8fc"></div>
<div style="position:absolute;left:1058px;top:758px;width:56px;height:25px;background:#d4e8fc"></div>
<div style="position:absolute;left:37px;top:782px;width:1077px;height:1px;background:repeating-linear-gradient(90deg,#c4c4c4 0 1px,transparent 1px 3px)"></div>
<div style="position:absolute;left:66px;top:758px;width:1px;height:25px;background:repeating-linear-gradient(180deg,#c4c4c4 0 1px,transparent 1px 3px)"></div>
<div style="position:absolute;left:111px;top:758px;width:1px;height:25px;background:repeating-linear-gradient(180deg,#c4c4c4 0 1px,transparent 1px 3px)"></div>
<div style="position:absolute;left:187px;top:758px;width:1px;height:25px;background:repeating-linear-gradient(180deg,#c4c4c4 0 1px,transparent 1px 3px)"></div>
<div style="position:absolute;left:263px;top:758px;width:1px;height:25px;background:repeating-linear-gradient(180deg,#c4c4c4 0 1px,transparent 1px 3px)"></div>
<div style="position:absolute;left:344px;top:758px;width:1px;height:25px;background:repeating-linear-gradient(180deg,#c4c4c4 0 1px,transparent 1px 3px)"></div>
<div style="position:absolute;left:413px;top:758px;width:1px;height:25px;background:repeating-linear-gradient(180deg,#c4c4c4 0 1px,transparent 1px 3px)"></div>
<div style="position:absolute;left:481px;top:758px;width:1px;height:25px;background:repeating-linear-gradient(180deg,#c4c4c4 0 1px,transparent 1px 3px)"></div>
<div style="position:absolute;left:526px;top:758px;width:1px;height:25px;background:repeating-linear-gradient(180deg,#c4c4c4 0 1px,transparent 1px 3px)"></div>
<div style="position:absolute;left:583px;top:758px;width:1px;height:25px;background:repeating-linear-gradient(180deg,#c4c4c4 0 1px,transparent 1px 3px)"></div>
<div style="position:absolute;left:639px;top:758px;width:1px;height:25px;background:repeating-linear-gradient(180deg,#c4c4c4 0 1px,transparent 1px 3px)"></div>
<div style="position:absolute;left:684px;top:758px;width:1px;height:25px;background:repeating-linear-gradient(180deg,#c4c4c4 0 1px,transparent 1px 3px)"></div>
<div style="position:absolute;left:741px;top:758px;width:1px;height:25px;background:repeating-linear-gradient(180deg,#c4c4c4 0 1px,transparent 1px 3px)"></div>
<div style="position:absolute;left:797px;top:758px;width:1px;height:25px;background:repeating-linear-gradient(180deg,#c4c4c4 0 1px,transparent 1px 3px)"></div>
<div style="position:absolute;left:842px;top:758px;width:1px;height:25px;background:repeating-linear-gradient(180deg,#c4c4c4 0 1px,transparent 1px 3px)"></div>
<div style="position:absolute;left:899px;top:758px;width:1px;height:25px;background:repeating-linear-gradient(180deg,#c4c4c4 0 1px,transparent 1px 3px)"></div>
<div style="position:absolute;left:955px;top:758px;width:1px;height:25px;background:repeating-linear-gradient(180deg,#c4c4c4 0 1px,transparent 1px 3px)"></div>
<div style="position:absolute;left:1000px;top:758px;width:1px;height:25px;background:repeating-linear-gradient(180deg,#c4c4c4 0 1px,transparent 1px 3px)"></div>
<div style="position:absolute;left:1057px;top:758px;width:1px;height:25px;background:repeating-linear-gradient(180deg,#c4c4c4 0 1px,transparent 1px 3px)"></div>
<div style="position:absolute;left:1113px;top:758px;width:1px;height:25px;background:repeating-linear-gradient(180deg,#c4c4c4 0 1px,transparent 1px 3px)"></div>
<div style="position:absolute;left:37.0px;width:29px;text-align:center;top:761px;font-size:12px;line-height:20px;color:#000;white-space:nowrap;">2</div>
<svg style="position:absolute;left:71px;top:763px" width="26" height="14"><rect x="0.00" y="0.00" width="4.63" height="4.97" fill="rgb(114,108,113)"/><rect x="4.33" y="0.00" width="4.63" height="4.97" fill="rgb(124,126,125)"/><rect x="8.67" y="0.00" width="4.63" height="4.97" fill="rgb(177,176,176)"/><rect x="13.00" y="0.00" width="4.63" height="4.97" fill="rgb(110,112,113)"/><rect x="17.33" y="0.00" width="4.63" height="4.97" fill="rgb(181,182,180)"/><rect x="21.67" y="0.00" width="4.63" height="4.97" fill="rgb(133,133,132)"/><rect x="0.00" y="4.67" width="4.63" height="4.97" fill="rgb(162,160,160)"/><rect x="4.33" y="4.67" width="4.63" height="4.97" fill="rgb(154,153,151)"/><rect x="8.67" y="4.67" width="4.63" height="4.97" fill="rgb(135,138,140)"/><rect x="13.00" y="4.67" width="4.63" height="4.97" fill="rgb(113,115,118)"/><rect x="17.33" y="4.67" width="4.63" height="4.97" fill="rgb(126,125,129)"/><rect x="21.67" y="4.67" width="4.63" height="4.97" fill="rgb(110,117,116)"/><rect x="0.00" y="9.33" width="4.63" height="4.97" fill="rgb(195,197,196)"/><rect x="4.33" y="9.33" width="4.63" height="4.97" fill="rgb(195,194,196)"/><rect x="8.67" y="9.33" width="4.63" height="4.97" fill="rgb(185,185,185)"/><rect x="13.00" y="9.33" width="4.63" height="4.97" fill="rgb(204,205,204)"/><rect x="17.33" y="9.33" width="4.63" height="4.97" fill="rgb(194,196,195)"/><rect x="21.67" y="9.33" width="4.63" height="4.97" fill="rgb(220,218,216)"/></svg>
<div style="position:absolute;left:111.5px;width:76px;text-align:center;top:761px;font-size:12px;line-height:20px;color:#000;white-space:nowrap;letter-spacing:0.5px">2023-10-05</div>
<div style="position:absolute;left:187.5px;width:76px;text-align:center;top:761px;font-size:12px;line-height:20px;color:#000;white-space:nowrap;letter-spacing:0.5px">2024-01-04</div>
<div style="position:absolute;right:1572px;top:761px;font-size:12px;line-height:20px;color:#000;white-space:nowrap;">63.0</div>
<div style="position:absolute;right:1503px;top:761px;font-size:12px;line-height:20px;color:#000;white-space:nowrap;">37.0</div>
<div style="position:absolute;right:1435px;top:761px;font-size:12px;line-height:20px;color:#000;white-space:nowrap;">26.0</div>
<div style="position:absolute;right:1390px;top:761px;font-size:12px;line-height:20px;color:#000;white-space:nowrap;">19.0</div>
<div style="position:absolute;right:1333px;top:761px;font-size:12px;line-height:20px;color:#000;white-space:nowrap;">10.0</div>
<div style="position:absolute;right:1277px;top:761px;font-size:12px;line-height:20px;color:#000;white-space:nowrap;">9.0</div>
<div style="position:absolute;right:1232px;top:761px;font-size:12px;line-height:20px;color:#000;white-space:nowrap;">22.0</div>
<div style="position:absolute;right:1175px;top:761px;font-size:12px;line-height:20px;color:#000;white-space:nowrap;">15.0</div>
<div style="position:absolute;right:1119px;top:761px;font-size:12px;line-height:20px;color:#000;white-space:nowrap;">7.0</div>
<div style="position:absolute;right:1074px;top:761px;font-size:12px;line-height:20px;color:#000;white-space:nowrap;">20.0</div>
<div style="position:absolute;right:1017px;top:761px;font-size:12px;line-height:20px;color:#000;white-space:nowrap;">11.0</div>
<div style="position:absolute;right:961px;top:761px;font-size:12px;line-height:20px;color:#000;white-space:nowrap;">9.0</div>
<div style="position:absolute;right:916px;top:761px;font-size:12px;line-height:20px;color:#000;white-space:nowrap;">2.0</div>
<div style="position:absolute;right:859px;top:761px;font-size:12px;line-height:20px;color:#000;white-space:nowrap;">1.0</div>
<div style="position:absolute;right:803px;top:761px;font-size:12px;line-height:20px;color:#000;white-space:nowrap;">1.0</div>
<div style="position:absolute;left:37px;top:783px;width:1077px;height:25px;background:#fff"></div>
<div style="position:absolute;left:37px;top:783px;width:29px;height:25px;background:linear-gradient(90deg,#f6f6f6,#ededed)"></div>
<div style="position:absolute;left:414px;top:783px;width:68px;height:25px;background:#d4e8fc"></div>
<div style="position:absolute;left:584px;top:783px;width:56px;height:25px;background:#d4e8fc"></div>
<div style="position:absolute;left:742px;top:783px;width:56px;height:25px;background:#d4e8fc"></div>
<div style="position:absolute;left:900px;top:783px;width:56px;height:25px;background:#d4e8fc"></div>
<div style="position:absolute;left:1058px;top:783px;width:56px;height:25px;background:#d4e8fc"></div>
<div style="position:absolute;left:37px;top:807px;width:1077px;height:1px;background:repeating-linear-gradient(90deg,#c4c4c4 0 1px,transparent 1px 3px)"></div>
<div style="position:absolute;left:66px;top:783px;width:1px;height:25px;background:repeating-linear-gradient(180deg,#c4c4c4 0 1px,transparent 1px 3px)"></div>
<div style="position:absolute;left:111px;top:783px;width:1px;height:25px;background:repeating-linear-gradient(180deg,#c4c4c4 0 1px,transparent 1px 3px)"></div>
<div style="position:absolute;left:187px;top:783px;width:1px;height:25px;background:repeating-linear-gradient(180deg,#c4c4c4 0 1px,transparent 1px 3px)"></div>
<div style="position:absolute;left:263px;top:783px;width:1px;height:25px;background:repeating-linear-gradient(180deg,#c4c4c4 0 1px,transparent 1px 3px)"></div>
<div style="position:absolute;left:344px;top:783px;width:1px;height:25px;background:repeating-linear-gradient(180deg,#c4c4c4 0 1px,transparent 1px 3px)"></div>
<div style="position:absolute;left:413px;top:783px;width:1px;height:25px;background:repeating-linear-gradient(180deg,#c4c4c4 0 1px,transparent 1px 3px)"></div>
<div style="position:absolute;left:481px;top:783px;width:1px;height:25px;background:repeating-linear-gradient(180deg,#c4c4c4 0 1px,transparent 1px 3px)"></div>
<div style="position:absolute;left:526px;top:783px;width:1px;height:25px;background:repeating-linear-gradient(180deg,#c4c4c4 0 1px,transparent 1px 3px)"></div>
<div style="position:absolute;left:583px;top:783px;width:1px;height:25px;background:repeating-linear-gradient(180deg,#c4c4c4 0 1px,transparent 1px 3px)"></div>
<div style="position:absolute;left:639px;top:783px;width:1px;height:25px;background:repeating-linear-gradient(180deg,#c4c4c4 0 1px,transparent 1px 3px)"></div>
<div style="position:absolute;left:684px;top:783px;width:1px;height:25px;background:repeating-linear-gradient(180deg,#c4c4c4 0 1px,transparent 1px 3px)"></div>
<div style="position:absolute;left:741px;top:783px;width:1px;height:25px;background:repeating-linear-gradient(180deg,#c4c4c4 0 1px,transparent 1px 3px)"></div>
<div style="position:absolute;left:797px;top:783px;width:1px;height:25px;background:repeating-linear-gradient(180deg,#c4c4c4 0 1px,transparent 1px 3px)"></div>
<div style="position:absolute;left:842px;top:783px;width:1px;height:25px;background:repeating-linear-gradient(180deg,#c4c4c4 0 1px,transparent 1px 3px)"></div>
<div style="position:absolute;left:899px;top:783px;width:1px;height:25px;background:repeating-linear-gradient(180deg,#c4c4c4 0 1px,transparent 1px 3px)"></div>
<div style="position:absolute;left:955px;top:783px;width:1px;height:25px;background:repeating-linear-gradient(180deg,#c4c4c4 0 1px,transparent 1px 3px)"></div>
<div style="position:absolute;left:1000px;top:783px;width:1px;height:25px;background:repeating-linear-gradient(180deg,#c4c4c4 0 1px,transparent 1px 3px)"></div>
<div style="position:absolute;left:1057px;top:783px;width:1px;height:25px;background:repeating-linear-gradient(180deg,#c4c4c4 0 1px,transparent 1px 3px)"></div>
<div style="position:absolute;left:1113px;top:783px;width:1px;height:25px;background:repeating-linear-gradient(180deg,#c4c4c4 0 1px,transparent 1px 3px)"></div>
<div style="position:absolute;left:37.0px;width:29px;text-align:center;top:786px;font-size:12px;line-height:20px;color:#000;white-space:nowrap;">3</div>
<div style="position:absolute;left:71px;top:786px;font-size:12px;line-height:20px;color:#000;white-space:nowrap;">张</div>
<svg style="position:absolute;left:81px;top:788px" width="25" height="14"><rect x="0.00" y="0.00" width="4.47" height="4.97" fill="rgb(118,117,119)"/><rect x="4.17" y="0.00" width="4.47" height="4.97" fill="rgb(143,136,136)"/><rect x="8.33" y="0.00" width="4.47" height="4.97" fill="rgb(123,126,123)"/><rect x="12.50" y="0.00" width="4.47" height="4.97" fill="rgb(121,120,118)"/><rect x="16.67" y="0.00" width="4.47" height="4.97" fill="rgb(182,190,184)"/><rect x="20.83" y="0.00" width="4.47" height="4.97" fill="rgb(173,180,176)"/><rect x="0.00" y="4.67" width="4.47" height="4.97" fill="rgb(145,149,143)"/><rect x="4.17" y="4.67" width="4.47" height="4.97" fill="rgb(149,148,156)"/><rect x="8.33" y="4.67" width="4.47" height="4.97" fill="rgb(122,127,120)"/><rect x="12.50" y="4.67" width="4.47" height="4.97" fill="rgb(161,161,169)"/><rect x="16.67" y="4.67" width="4.47" height="4.97" fill="rgb(154,153,158)"/><rect x="20.83" y="4.67" width="4.47" height="4.97" fill="rgb(152,147,153)"/><rect x="0.00" y="9.33" width="4.47" height="4.97" fill="rgb(200,199,201)"/><rect x="4.17" y="9.33" width="4.47" height="4.97" fill="rgb(197,197,195)"/><rect x="8.33" y="9.33" width="4.47" height="4.97" fill="rgb(199,198,199)"/><rect x="12.50" y="9.33" width="4.47" height="4.97" fill="rgb(188,184,185)"/><rect x="16.67" y="9.33" width="4.47" height="4.97" fill="rgb(210,209,209)"/><rect x="20.83" y="9.33" width="4.47" height="4.97" fill="rgb(190,188,192)"/></svg>
<div style="position:absolute;left:111.5px;width:76px;text-align:center;top:786px;font-size:12px;line-height:20px;color:#000;white-space:nowrap;letter-spacing:0.5px">2023-10-07</div>
<div style="position:absolute;left:187.5px;width:76px;text-align:center;top:786px;font-size:12px;line-height:20px;color:#000;white-space:nowrap;letter-spacing:0.5px">2024-01-05</div>
<div style="position:absolute;right:1572px;top:786px;font-size:12px;line-height:20px;color:#000;white-space:nowrap;">61.0</div>
<div style="position:absolute;right:1503px;top:786px;font-size:12px;line-height:20px;color:#000;white-space:nowrap;">40.0</div>
<div style="position:absolute;right:1435px;top:786px;font-size:12px;line-height:20px;color:#000;white-space:nowrap;">21.0</div>
<div style="position:absolute;right:1390px;top:786px;font-size:12px;line-height:20px;color:#000;white-space:nowrap;">17.0</div>
<div style="position:absolute;right:1333px;top:786px;font-size:12px;line-height:20px;color:#000;white-space:nowrap;">11.0</div>
<div style="position:absolute;right:1277px;top:786px;font-size:12px;line-height:20px;color:#000;white-space:nowrap;">6.0</div>
<div style="position:absolute;right:1232px;top:786px;font-size:12px;line-height:20px;color:#000;white-space:nowrap;">22.0</div>
<div style="position:absolute;right:1175px;top:786px;font-size:12px;line-height:20px;color:#000;white-space:nowrap;">17.0</div>
<div style="position:absolute;right:1119px;top:786px;font-size:12px;line-height:20px;color:#000;white-space:nowrap;">5.0</div>
<div style="position:absolute;right:1074px;top:786px;font-size:12px;line-height:20px;color:#000;white-space:nowrap;">20.0</div>
<div style="position:absolute;right:1017px;top:786px;font-size:12px;line-height:20px;color:#000;white-space:nowrap;">12.0</div>
<div style="position:absolute;right:961px;top:786px;font-size:12px;line-height:20px;color:#000;white-space:nowrap;">8.0</div>
<div style="position:absolute;right:916px;top:786px;font-size:12px;line-height:20px;color:#000;white-space:nowrap;">2.0</div>
<div style="position:absolute;right:859px;top:786px;font-size:12px;line-height:20px;color:#000;white-space:nowrap;">0.0</div>
<div style="position:absolute;right:803px;top:786px;font-size:12px;line-height:20px;color:#000;white-space:nowrap;">2.0</div>
<div style="position:absolute;left:37px;top:808px;width:1077px;height:25px;background:#f6f6f6"></div>
<div style="position:absolute;left:37px;top:808px;width:29px;height:25px;background:linear-gradient(90deg,#f6f6f6,#ededed)"></div>
<div style="position:absolute;left:414px;top:808px;width:68px;height:25px;background:#d4e8fc"></div>
<div style="position:absolute;left:584px;top:808px;width:56px;height:25px;background:#d4e8fc"></div>
<div style="position:absolute;left:742px;top:808px;width:56px;height:25px;background:#ffffa8"></div>
<div style="position:absolute;left:900px;top:808px;width:56px;height:25px;background:#d4e8fc"></div>
<div style="position:absolute;left:1058px;top:808px;width:56px;height:25px;background:#d4e8fc"></div>
<div style="position:absolute;left:37px;top:832px;width:1077px;height:1px;background:repeating-linear-gradient(90deg,#c4c4c4 0 1px,transparent 1px 3px)"></div>
<div style="position:absolute;left:66px;top:808px;width:1px;height:25px;background:repeating-linear-gradient(180deg,#c4c4c4 0 1px,transparent 1px 3px)"></div>
<div style="position:absolute;left:111px;top:808px;width:1px;height:25px;background:repeating-linear-gradient(180deg,#c4c4c4 0 1px,transparent 1px 3px)"></div>
<div style="position:absolute;left:187px;top:808px;width:1px;height:25px;background:repeating-linear-gradient(180deg,#c4c4c4 0 1px,transparent 1px 3px)"></div>
<div style="position:absolute;left:263px;top:808px;width:1px;height:25px;background:repeating-linear-gradient(180deg,#c4c4c4 0 1px,transparent 1px 3px)"></div>
<div style="position:absolute;left:344px;top:808px;width:1px;height:25px;background:repeating-linear-gradient(180deg,#c4c4c4 0 1px,transparent 1px 3px)"></div>
<div style="position:absolute;left:413px;top:808px;width:1px;height:25px;background:repeating-linear-gradient(180deg,#c4c4c4 0 1px,transparent 1px 3px)"></div>
<div style="position:absolute;left:481px;top:808px;width:1px;height:25px;background:repeating-linear-gradient(180deg,#c4c4c4 0 1px,transparent 1px 3px)"></div>
<div style="position:absolute;left:526px;top:808px;width:1px;height:25px;background:repeating-linear-gradient(180deg,#c4c4c4 0 1px,transparent 1px 3px)"></div>
<div style="position:absolute;left:583px;top:808px;width:1px;height:25px;background:repeating-linear-gradient(180deg,#c4c4c4 0 1px,transparent 1px 3px)"></div>
<div style="position:absolute;left:639px;top:808px;width:1px;height:25px;background:repeating-linear-gradient(180deg,#c4c4c4 0 1px,transparent 1px 3px)"></div>
<div style="position:absolute;left:684px;top:808px;width:1px;height:25px;background:repeating-linear-gradient(180deg,#c4c4c4 0 1px,transparent 1px 3px)"></div>
<div style="position:absolute;left:741px;top:808px;width:1px;height:25px;background:repeating-linear-gradient(180deg,#c4c4c4 0 1px,transparent 1px 3px)"></div>
<div style="position:absolute;left:797px;top:808px;width:1px;height:25px;background:repeating-linear-gradient(180deg,#c4c4c4 0 1px,transparent 1px 3px)"></div>
<div style="position:absolute;left:842px;top:808px;width:1px;height:25px;background:repeating-linear-gradient(180deg,#c4c4c4 0 1px,transparent 1px 3px)"></div>
<div style="position:absolute;left:899px;top:808px;width:1px;height:25px;background:repeating-linear-gradient(180deg,#c4c4c4 0 1px,transparent 1px 3px)"></div>
<div style="position:absolute;left:955px;top:808px;width:1px;height:25px;background:repeating-linear-gradient(180deg,#c4c4c4 0 1px,transparent 1px 3px)"></div>
<div style="position:absolute;left:1000px;top:808px;width:1px;height:25px;background:repeating-linear-gradient(180deg,#c4c4c4 0 1px,transparent 1px 3px)"></div>
<div style="position:absolute;left:1057px;top:808px;width:1px;height:25px;background:repeating-linear-gradient(180deg,#c4c4c4 0 1px,transparent 1px 3px)"></div>
<div style="position:absolute;left:1113px;top:808px;width:1px;height:25px;background:repeating-linear-gradient(180deg,#c4c4c4 0 1px,transparent 1px 3px)"></div>
<div style="position:absolute;left:37.0px;width:29px;text-align:center;top:811px;font-size:12px;line-height:20px;color:#000;white-space:nowrap;">4</div>
<div style="position:absolute;left:71px;top:811px;font-size:12px;line-height:20px;color:#000;white-space:nowrap;">方</div>
<svg style="position:absolute;left:81px;top:813px" width="25" height="14"><rect x="0.00" y="0.00" width="4.47" height="4.97" fill="rgb(181,182,183)"/><rect x="4.17" y="0.00" width="4.47" height="4.97" fill="rgb(175,175,169)"/><rect x="8.33" y="0.00" width="4.47" height="4.97" fill="rgb(192,189,192)"/><rect x="12.50" y="0.00" width="4.47" height="4.97" fill="rgb(174,171,168)"/><rect x="16.67" y="0.00" width="4.47" height="4.97" fill="rgb(150,148,152)"/><rect x="20.83" y="0.00" width="4.47" height="4.97" fill="rgb(169,175,173)"/><rect x="0.00" y="4.67" width="4.47" height="4.97" fill="rgb(154,149,147)"/><rect x="4.17" y="4.67" width="4.47" height="4.97" fill="rgb(118,117,116)"/><rect x="8.33" y="4.67" width="4.47" height="4.97" fill="rgb(119,115,119)"/><rect x="12.50" y="4.67" width="4.47" height="4.97" fill="rgb(145,141,142)"/><rect x="16.67" y="4.67" width="4.47" height="4.97" fill="rgb(111,114,110)"/><rect x="20.83" y="4.67" width="4.47" height="4.97" fill="rgb(183,183,179)"/><rect x="0.00" y="9.33" width="4.47" height="4.97" fill="rgb(187,190,191)"/><rect x="4.17" y="9.33" width="4.47" height="4.97" fill="rgb(188,189,188)"/><rect x="8.33" y="9.33" width="4.47" height="4.97" fill="rgb(190,188,188)"/><rect x="12.50" y="9.33" width="4.47" height="4.97" fill="rgb(208,209,208)"/><rect x="16.67" y="9.33" width="4.47" height="4.97" fill="rgb(195,196,196)"/><rect x="20.83" y="9.33" width="4.47" height="4.97" fill="rgb(207,206,205)"/></svg>
<div style="position:absolute;left:111.5px;width:76px;text-align:center;top:811px;font-size:12px;line-height:20px;color:#000;white-space:nowrap;letter-spacing:0.5px">2023-10-09</div>
<div style="position:absolute;left:187.5px;width:76px;text-align:center;top:811px;font-size:12px;line-height:20px;color:#000;white-space:nowrap;letter-spacing:0.5px">2024-01-08</div>
<div style="position:absolute;right:1572px;top:811px;font-size:12px;line-height:20px;color:#000;white-space:nowrap;">62.0</div>
<div style="position:absolute;right:1503px;top:811px;font-size:12px;line-height:20px;color:#000;white-space:nowrap;">49.0</div>
<div style="position:absolute;right:1435px;top:811px;font-size:12px;line-height:20px;color:#000;white-space:nowrap;">13.0</div>
<div style="position:absolute;right:1390px;top:811px;font-size:12px;line-height:20px;color:#000;white-space:nowrap;">17.0</div>
<div style="position:absolute;right:1333px;top:811px;font-size:12px;line-height:20px;color:#000;white-space:nowrap;">12.0</div>
<div style="position:absolute;right:1277px;top:811px;font-size:12px;line-height:20px;color:#000;white-space:nowrap;">5.0</div>
<div style="position:absolute;right:1232px;top:811px;font-size:12px;line-height:20px;color:#000;white-space:nowrap;">22.0</div>
<div style="position:absolute;right:1175px;top:811px;font-size:12px;line-height:20px;color:#000;white-space:nowrap;">26.0</div>
<div style="position:absolute;right:1119px;top:811px;font-size:12px;line-height:20px;color:#ff0000;white-space:nowrap;">-4.0</div>
<div style="position:absolute;right:1074px;top:811px;font-size:12px;line-height:20px;color:#000;white-space:nowrap;">20.0</div>
<div style="position:absolute;right:1017px;top:811px;font-size:12px;line-height:20px;color:#000;white-space:nowrap;">10.0</div>
<div style="position:absolute;right:961px;top:811px;font-size:12px;line-height:20px;color:#000;white-space:nowrap;">10.0</div>
<div style="position:absolute;right:916px;top:811px;font-size:12px;line-height:20px;color:#000;white-space:nowrap;">3.0</div>
<div style="position:absolute;right:859px;top:811px;font-size:12px;line-height:20px;color:#000;white-space:nowrap;">1.0</div>
<div style="position:absolute;right:803px;top:811px;font-size:12px;line-height:20px;color:#000;white-space:nowrap;">2.0</div>
<div style="position:absolute;left:37px;top:833px;width:1077px;height:25px;background:#fff"></div>
<div style="position:absolute;left:37px;top:833px;width:29px;height:25px;background:linear-gradient(90deg,#f6f6f6,#ededed)"></div>
<div style="position:absolute;left:414px;top:833px;width:68px;height:25px;background:#d4e8fc"></div>
<div style="position:absolute;left:584px;top:833px;width:56px;height:25px;background:#d4e8fc"></div>
<div style="position:absolute;left:742px;top:833px;width:56px;height:25px;background:#ffffa8"></div>
<div style="position:absolute;left:900px;top:833px;width:56px;height:25px;background:#d4e8fc"></div>
<div style="position:absolute;left:956px;top:833px;width:158px;height:25px;background:#c9c9c9"></div>
<div style="position:absolute;left:37px;top:857px;width:1077px;height:1px;background:repeating-linear-gradient(90deg,#c4c4c4 0 1px,transparent 1px 3px)"></div>
<div style="position:absolute;left:66px;top:833px;width:1px;height:25px;background:repeating-linear-gradient(180deg,#c4c4c4 0 1px,transparent 1px 3px)"></div>
<div style="position:absolute;left:111px;top:833px;width:1px;height:25px;background:repeating-linear-gradient(180deg,#c4c4c4 0 1px,transparent 1px 3px)"></div>
<div style="position:absolute;left:187px;top:833px;width:1px;height:25px;background:repeating-linear-gradient(180deg,#c4c4c4 0 1px,transparent 1px 3px)"></div>
<div style="position:absolute;left:263px;top:833px;width:1px;height:25px;background:repeating-linear-gradient(180deg,#c4c4c4 0 1px,transparent 1px 3px)"></div>
<div style="position:absolute;left:344px;top:833px;width:1px;height:25px;background:repeating-linear-gradient(180deg,#c4c4c4 0 1px,transparent 1px 3px)"></div>
<div style="position:absolute;left:413px;top:833px;width:1px;height:25px;background:repeating-linear-gradient(180deg,#c4c4c4 0 1px,transparent 1px 3px)"></div>
<div style="position:absolute;left:481px;top:833px;width:1px;height:25px;background:repeating-linear-gradient(180deg,#c4c4c4 0 1px,transparent 1px 3px)"></div>
<div style="position:absolute;left:526px;top:833px;width:1px;height:25px;background:repeating-linear-gradient(180deg,#c4c4c4 0 1px,transparent 1px 3px)"></div>
<div style="position:absolute;left:583px;top:833px;width:1px;height:25px;background:repeating-linear-gradient(180deg,#c4c4c4 0 1px,transparent 1px 3px)"></div>
<div style="position:absolute;left:639px;top:833px;width:1px;height:25px;background:repeating-linear-gradient(180deg,#c4c4c4 0 1px,transparent 1px 3px)"></div>
<div style="position:absolute;left:684px;top:833px;width:1px;height:25px;background:repeating-linear-gradient(180deg,#c4c4c4 0 1px,transparent 1px 3px)"></div>
<div style="position:absolute;left:741px;top:833px;width:1px;height:25px;background:repeating-linear-gradient(180deg,#c4c4c4 0 1px,transparent 1px 3px)"></div>
<div style="position:absolute;left:797px;top:833px;width:1px;height:25px;background:repeating-linear-gradient(180deg,#c4c4c4 0 1px,transparent 1px 3px)"></div>
<div style="position:absolute;left:842px;top:833px;width:1px;height:25px;background:repeating-linear-gradient(180deg,#c4c4c4 0 1px,transparent 1px 3px)"></div>
<div style="position:absolute;left:899px;top:833px;width:1px;height:25px;background:repeating-linear-gradient(180deg,#c4c4c4 0 1px,transparent 1px 3px)"></div>
<div style="position:absolute;left:955px;top:833px;width:1px;height:25px;background:repeating-linear-gradient(180deg,#c4c4c4 0 1px,transparent 1px 3px)"></div>
<div style="position:absolute;left:1000px;top:833px;width:1px;height:25px;background:repeating-linear-gradient(180deg,#c4c4c4 0 1px,transparent 1px 3px)"></div>
<div style="position:absolute;left:1057px;top:833px;width:1px;height:25px;background:repeating-linear-gradient(180deg,#c4c4c4 0 1px,transparent 1px 3px)"></div>
<div style="position:absolute;left:1113px;top:833px;width:1px;height:25px;background:repeating-linear-gradient(180deg,#c4c4c4 0 1px,transparent 1px 3px)"></div>
<div style="position:absolute;left:37.0px;width:29px;text-align:center;top:836px;font-size:12px;line-height:20px;color:#000;white-space:nowrap;">5</div>
<div style="position:absolute;left:71px;top:836px;font-size:12px;line-height:20px;color:#000;white-space:nowrap;">王</div>
<svg style="position:absolute;left:81px;top:838px" width="25" height="14"><rect x="0.00" y="0.00" width="4.47" height="4.97" fill="rgb(178,173,176)"/><rect x="4.17" y="0.00" width="4.47" height="4.97" fill="rgb(115,114,110)"/><rect x="8.33" y="0.00" width="4.47" height="4.97" fill="rgb(164,165,161)"/><rect x="12.50" y="0.00" width="4.47" height="4.97" fill="rgb(188,182,181)"/><rect x="16.67" y="0.00" width="4.47" height="4.97" fill="rgb(146,141,143)"/><rect x="20.83" y="0.00" width="4.47" height="4.97" fill="rgb(174,173,178)"/><rect x="0.00" y="4.67" width="4.47" height="4.97" fill="rgb(146,138,144)"/><rect x="4.17" y="4.67" width="4.47" height="4.97" fill="rgb(131,131,133)"/><rect x="8.33" y="4.67" width="4.47" height="4.97" fill="rgb(149,149,153)"/><rect x="12.50" y="4.67" width="4.47" height="4.97" fill="rgb(176,176,180)"/><rect x="16.67" y="4.67" width="4.47" height="4.97" fill="rgb(181,178,178)"/><rect x="20.83" y="4.67" width="4.47" height="4.97" fill="rgb(121,127,124)"/><rect x="0.00" y="9.33" width="4.47" height="4.97" fill="rgb(207,209,208)"/><rect x="4.17" y="9.33" width="4.47" height="4.97" fill="rgb(194,194,195)"/><rect x="8.33" y="9.33" width="4.47" height="4.97" fill="rgb(190,189,189)"/><rect x="12.50" y="9.33" width="4.47" height="4.97" fill="rgb(212,211,213)"/><rect x="16.67" y="9.33" width="4.47" height="4.97" fill="rgb(199,199,199)"/><rect x="20.83" y="9.33" width="4.47" height="4.97" fill="rgb(201,199,201)"/></svg>
<div style="position:absolute;left:111.5px;width:76px;text-align:center;top:836px;font-size:12px;line-height:20px;color:#000;white-space:nowrap;letter-spacing:0.5px">2023-10-12</div>
<div style="position:absolute;left:187.5px;width:76px;text-align:center;top:836px;font-size:12px;line-height:20px;color:#000;white-space:nowrap;letter-spacing:0.5px">2023-12-30</div>
<div style="position:absolute;right:1572px;top:836px;font-size:12px;line-height:20px;color:#000;white-space:nowrap;">56.0</div>
<div style="position:absolute;right:1503px;top:836px;font-size:12px;line-height:20px;color:#000;white-space:nowrap;">50.0</div>
<div style="position:absolute;right:1435px;top:836px;font-size:12px;line-height:20px;color:#000;white-space:nowrap;">6.0</div>
<div style="position:absolute;right:1390px;top:836px;font-size:12px;line-height:20px;color:#000;white-space:nowrap;">14.0</div>
<div style="position:absolute;right:1333px;top:836px;font-size:12px;line-height:20px;color:#000;white-space:nowrap;">8.0</div>
<div style="position:absolute;right:1277px;top:836px;font-size:12px;line-height:20px;color:#000;white-space:nowrap;">6.0</div>
<div style="position:absolute;right:1232px;top:836px;font-size:12px;line-height:20px;color:#000;white-space:nowrap;">22.0</div>
<div style="position:absolute;right:1175px;top:836px;font-size:12px;line-height:20px;color:#000;white-space:nowrap;">32.0</div>
<div style="position:absolute;right:1119px;top:836px;font-size:12px;line-height:20px;color:#ff0000;white-space:nowrap;">-10.0</div>
<div style="position:absolute;right:1074px;top:836px;font-size:12px;line-height:20px;color:#000;white-space:nowrap;">20.0</div>
<div style="position:absolute;right:1017px;top:836px;font-size:12px;line-height:20px;color:#000;white-space:nowrap;">10.0</div>
<div style="position:absolute;right:961px;top:836px;font-size:12px;line-height:20px;color:#000;white-space:nowrap;">10.0</div>

</body></html>
